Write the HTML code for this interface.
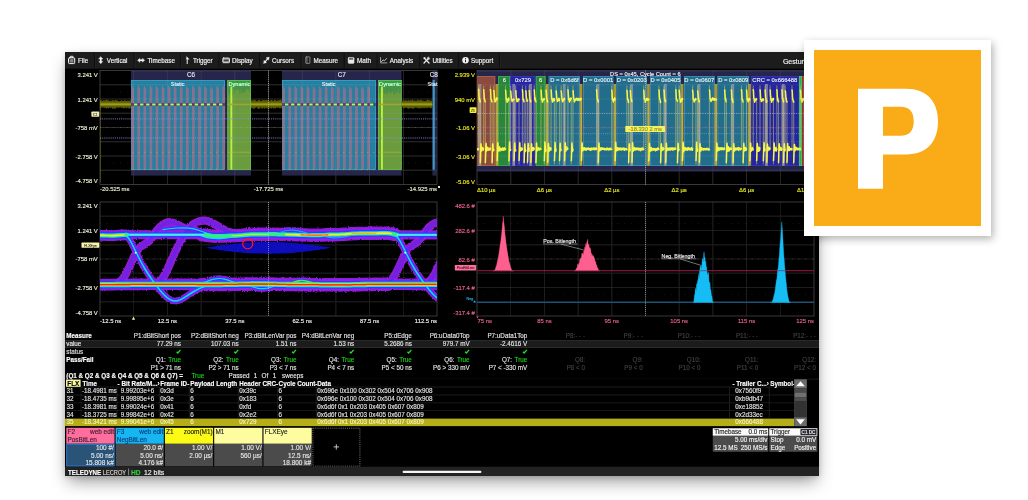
<!DOCTYPE html>
<html><head><meta charset="utf-8"><title>scope</title>
<style>
html,body{margin:0;padding:0;background:#fff;}
body{width:1028px;height:500px;overflow:hidden;position:relative;font-family:"Liberation Sans",sans-serif;}
#scope{position:absolute;left:65px;top:52px;width:754px;height:424px;background:#000;box-shadow:0 8px 16px -3px rgba(0,0,0,.42),0 1px 5px rgba(0,0,0,.15);}
#pb{position:absolute;left:804px;top:40px;width:186.7px;height:196px;background:#fff;box-shadow:2px 3px 8px rgba(0,0,0,.30);}
#po{position:absolute;left:10px;top:10px;width:167px;height:175.5px;background:#faab18;}
svg{position:absolute;left:0;top:0;}
svg text{font-family:"Liberation Sans",sans-serif;}
</style></head><body>
<div id="scope"></div>
<svg width="1028" height="500" viewBox="0 0 1028 500">
<defs><clipPath id="cs"><rect x="65" y="52" width="754" height="424"/></clipPath><clipPath id="g1"><rect x="100" y="70.5" width="337" height="114"/></clipPath><clipPath id="g2"><rect x="477" y="70.5" width="337" height="114"/></clipPath><clipPath id="g3"><rect x="100" y="202" width="337" height="114"/></clipPath><clipPath id="g4"><rect x="477" y="202" width="337" height="114"/></clipPath><filter id="b1" x="-5%" y="-20%" width="110%" height="140%"><feGaussianBlur stdDeviation="0.7"/></filter><filter id="b2" x="-5%" y="-20%" width="110%" height="140%"><feGaussianBlur stdDeviation="0.35"/></filter><filter id="soft" filterUnits="userSpaceOnUse" x="60" y="48" width="764" height="432"><feGaussianBlur stdDeviation="0.32"/></filter><filter id="rough" filterUnits="userSpaceOnUse" x="95" y="198" width="350" height="124"><feTurbulence type="fractalNoise" baseFrequency="0.8" numOctaves="2" seed="4" result="n"/><feDisplacementMap in="SourceGraphic" in2="n" scale="2.6" xChannelSelector="R" yChannelSelector="G"/><feGaussianBlur stdDeviation="0.55"/></filter></defs>
<g clip-path="url(#cs)"><g filter="url(#soft)">
<rect x="65.00" y="52.00" width="754.00" height="16.60" fill="#1b1b1b" />
<text x="78.00" y="62.50" font-size="6.3" fill="#f4f4f4" stroke="#f4f4f4"  text-anchor="start" font-weight="normal" stroke-width="0.17">File</text>
<text x="106.80" y="62.50" font-size="6.3" fill="#f4f4f4" stroke="#f4f4f4"  text-anchor="start" font-weight="normal" stroke-width="0.17">Vertical</text>
<text x="147.50" y="62.50" font-size="6.3" fill="#f4f4f4" stroke="#f4f4f4"  text-anchor="start" font-weight="normal" stroke-width="0.17">Timebase</text>
<text x="193.00" y="62.50" font-size="6.3" fill="#f4f4f4" stroke="#f4f4f4"  text-anchor="start" font-weight="normal" stroke-width="0.17">Trigger</text>
<text x="232.00" y="62.50" font-size="6.3" fill="#f4f4f4" stroke="#f4f4f4"  text-anchor="start" font-weight="normal" stroke-width="0.17">Display</text>
<text x="272.00" y="62.50" font-size="6.3" fill="#f4f4f4" stroke="#f4f4f4"  text-anchor="start" font-weight="normal" stroke-width="0.17">Cursors</text>
<text x="313.60" y="62.50" font-size="6.3" fill="#f4f4f4" stroke="#f4f4f4"  text-anchor="start" font-weight="normal" stroke-width="0.17">Measure</text>
<text x="357.00" y="62.50" font-size="6.3" fill="#f4f4f4" stroke="#f4f4f4"  text-anchor="start" font-weight="normal" stroke-width="0.17">Math</text>
<text x="389.80" y="62.50" font-size="6.3" fill="#f4f4f4" stroke="#f4f4f4"  text-anchor="start" font-weight="normal" stroke-width="0.17">Analysis</text>
<text x="432.40" y="62.50" font-size="6.3" fill="#f4f4f4" stroke="#f4f4f4"  text-anchor="start" font-weight="normal" stroke-width="0.17">Utilities</text>
<text x="471.10" y="62.50" font-size="6.3" fill="#f4f4f4" stroke="#f4f4f4"  text-anchor="start" font-weight="normal" stroke-width="0.17">Support</text>
<line x1="94.60" y1="53.50" x2="94.60" y2="67.50" stroke="#080808" stroke-width="0.9" />
<line x1="95.45" y1="53.50" x2="95.45" y2="67.50" stroke="#2b2b2b" stroke-width="0.6" />
<line x1="134.30" y1="53.50" x2="134.30" y2="67.50" stroke="#080808" stroke-width="0.9" />
<line x1="135.15" y1="53.50" x2="135.15" y2="67.50" stroke="#2b2b2b" stroke-width="0.6" />
<line x1="180.50" y1="53.50" x2="180.50" y2="67.50" stroke="#080808" stroke-width="0.9" />
<line x1="181.35" y1="53.50" x2="181.35" y2="67.50" stroke="#2b2b2b" stroke-width="0.6" />
<line x1="219.10" y1="53.50" x2="219.10" y2="67.50" stroke="#080808" stroke-width="0.9" />
<line x1="219.95" y1="53.50" x2="219.95" y2="67.50" stroke="#2b2b2b" stroke-width="0.6" />
<line x1="260.00" y1="53.50" x2="260.00" y2="67.50" stroke="#080808" stroke-width="0.9" />
<line x1="260.85" y1="53.50" x2="260.85" y2="67.50" stroke="#2b2b2b" stroke-width="0.6" />
<line x1="301.30" y1="53.50" x2="301.30" y2="67.50" stroke="#080808" stroke-width="0.9" />
<line x1="302.15" y1="53.50" x2="302.15" y2="67.50" stroke="#2b2b2b" stroke-width="0.6" />
<line x1="344.40" y1="53.50" x2="344.40" y2="67.50" stroke="#080808" stroke-width="0.9" />
<line x1="345.25" y1="53.50" x2="345.25" y2="67.50" stroke="#2b2b2b" stroke-width="0.6" />
<line x1="377.10" y1="53.50" x2="377.10" y2="67.50" stroke="#080808" stroke-width="0.9" />
<line x1="377.95" y1="53.50" x2="377.95" y2="67.50" stroke="#2b2b2b" stroke-width="0.6" />
<line x1="419.90" y1="53.50" x2="419.90" y2="67.50" stroke="#080808" stroke-width="0.9" />
<line x1="420.75" y1="53.50" x2="420.75" y2="67.50" stroke="#2b2b2b" stroke-width="0.6" />
<line x1="458.90" y1="53.50" x2="458.90" y2="67.50" stroke="#080808" stroke-width="0.9" />
<line x1="459.75" y1="53.50" x2="459.75" y2="67.50" stroke="#2b2b2b" stroke-width="0.6" />
<line x1="499.80" y1="53.50" x2="499.80" y2="67.50" stroke="#080808" stroke-width="0.9" />
<line x1="500.65" y1="53.50" x2="500.65" y2="67.50" stroke="#2b2b2b" stroke-width="0.6" />
<text x="782.90" y="63.50" font-size="7.0" fill="#f4f4f4" stroke="#f4f4f4"  text-anchor="start" font-weight="normal" stroke-width="0.17">Gestures</text>
<path d="M69.5,57.7 h4.2 a1.0,1.0 0 0 1 1.0,1.0 v3.9 a1.0,1.0 0 0 1 -1.0,1.0 h-4.2 a1.0,1.0 0 0 1 -1.0,-1.0 v-3.9 a1.0,1.0 0 0 1 1.0,-1.0z" fill="#4a4a4a" stroke="#f2f2f2" stroke-width="1.0" stroke-linecap="round" stroke-linejoin="round" />
<path d="M70.3,57.3 v-1.0 h2.6 v1.0" fill="none" stroke="#f2f2f2" stroke-width="0.95" stroke-linecap="round" stroke-linejoin="round" />
<rect x="70.20" y="59.30" width="2.80" height="2.90" fill="#8a8a8a" />
<path d="M100.8,56.7 l2.1,2.3 h-1.3 v2.4 h1.3 l-2.1,2.3 l-2.1,-2.3 h1.3 v-2.4 h-1.3z" fill="#f2f2f2" stroke="#f2f2f2" stroke-width="0.3" stroke-linecap="round" stroke-linejoin="round" />
<path d="M137.6,60.2 l2.3,-2.0 v1.3 h2.5 v-1.3 l2.3,2.0 l-2.3,2.0 v-1.3 h-2.5 v1.3z" fill="#f2f2f2" stroke="#f2f2f2" stroke-width="0.3" stroke-linecap="round" stroke-linejoin="round" />
<path d="M187.2,63.6 v-5.6" fill="none" stroke="#f2f2f2" stroke-width="1.0" stroke-linecap="round" stroke-linejoin="round" />
<path d="M186.7,56.7 l2.5,2.6 h-2.5z" fill="#f2f2f2" stroke="#f2f2f2" stroke-width="0.3" stroke-linecap="round" stroke-linejoin="round" />
<path d="M223.5,58.0 h5.3 a0.7,0.7 0 0 1 0.7,0.7 v3.3 a0.7,0.7 0 0 1 -0.7,0.7 h-5.3 a0.7,0.7 0 0 1 -0.7,-0.7 v-3.3 a0.7,0.7 0 0 1 0.7,-0.7z" fill="#8c8c8c" stroke="#f2f2f2" stroke-width="0.85" stroke-linecap="round" stroke-linejoin="round" />
<line x1="224.00" y1="60.40" x2="228.30" y2="60.40" stroke="#222" stroke-width="0.8" />
<path d="M264.6,62.3 L268.0,58.3" fill="none" stroke="#f2f2f2" stroke-width="1.1" stroke-linecap="round" stroke-linejoin="round" />
<path d="M269.2,57.1 l-3.3,0.7 l2.6,2.5z" fill="#f2f2f2" stroke="#f2f2f2" stroke-width="0.2" stroke-linecap="round" stroke-linejoin="round" />
<path d="M263.4,63.5 l3.3,-0.7 l-2.6,-2.5z" fill="#f2f2f2" stroke="#f2f2f2" stroke-width="0.2" stroke-linecap="round" stroke-linejoin="round" />
<path d="M306.3,56.9 h3.1 a0.5,0.5 0 0 1 0.5,0.5 v5.5 a0.5,0.5 0 0 1 -0.5,0.5 h-3.1 a0.5,0.5 0 0 1 -0.5,-0.5 v-5.5 a0.5,0.5 0 0 1 0.5,-0.5z" fill="none" stroke="#a8a8a8" stroke-width="0.75" stroke-linecap="round" stroke-linejoin="round" />
<line x1="306.20" y1="58.30" x2="307.90" y2="58.30" stroke="#a8a8a8" stroke-width="0.5" />
<line x1="306.20" y1="59.60" x2="307.90" y2="59.60" stroke="#a8a8a8" stroke-width="0.5" />
<line x1="306.20" y1="60.90" x2="307.90" y2="60.90" stroke="#a8a8a8" stroke-width="0.5" />
<line x1="306.20" y1="62.20" x2="307.90" y2="62.20" stroke="#a8a8a8" stroke-width="0.5" />
<path d="M349.0,57.4 h4.2 a0.9,0.9 0 0 1 0.9,0.9 v4.2 a0.9,0.9 0 0 1 -0.9,0.9 h-4.2 a0.9,0.9 0 0 1 -0.9,-0.9 v-4.2 a0.9,0.9 0 0 1 0.9,-0.9z" fill="#e8e8e8" stroke="#e8e8e8" stroke-width="0.4" stroke-linecap="round" stroke-linejoin="round" />
<rect x="349.00" y="58.30" width="4.20" height="1.30" fill="#3a3a3a" />
<path d="M380.6,57.6 v5.3 h6.3" fill="none" stroke="#c8c8c8" stroke-width="0.8" stroke-linecap="round" stroke-linejoin="round" />
<path d="M381.6,61.6 l1.5,-1.7 l1.3,0.9 l2.2,-2.3" fill="none" stroke="#e8e8e8" stroke-width="0.8" stroke-linecap="round" stroke-linejoin="round" />
<path d="M424.0,57.9 L429.0,63.0" fill="none" stroke="#f2f2f2" stroke-width="1.25" stroke-linecap="round" stroke-linejoin="round" />
<path d="M429.0,57.9 L424.0,63.0" fill="none" stroke="#f2f2f2" stroke-width="1.25" stroke-linecap="round" stroke-linejoin="round" />
<path d="M423.4,58.3 l1.5,-1.4 l1.0,1.0 l-1.5,1.4z" fill="#f2f2f2" stroke="none" stroke-width="0.8" stroke-linecap="round" stroke-linejoin="round" />
<path d="M428.6,57.0 a1.3,1.3 0 1 0 1.2,1.6" fill="none" stroke="#f2f2f2" stroke-width="0.7" stroke-linecap="round" stroke-linejoin="round" />
<circle cx="465.5" cy="60.3" r="3.25" fill="#f2f2f2"/>
<rect x="465.05" y="59.70" width="0.95" height="2.50" fill="#1b1b1b" />
<rect x="465.05" y="58.10" width="0.95" height="0.95" fill="#1b1b1b" />
<rect x="100.00" y="70.50" width="337.00" height="114.00" fill="#000" />
<line x1="133.70" y1="70.50" x2="133.70" y2="184.50" stroke="#2c2c2c" stroke-width="0.7" />
<line x1="167.40" y1="70.50" x2="167.40" y2="184.50" stroke="#2c2c2c" stroke-width="0.7" />
<line x1="201.10" y1="70.50" x2="201.10" y2="184.50" stroke="#2c2c2c" stroke-width="0.7" />
<line x1="234.80" y1="70.50" x2="234.80" y2="184.50" stroke="#2c2c2c" stroke-width="0.7" />
<line x1="268.50" y1="70.50" x2="268.50" y2="184.50" stroke="#2c2c2c" stroke-width="0.7" />
<line x1="302.20" y1="70.50" x2="302.20" y2="184.50" stroke="#2c2c2c" stroke-width="0.7" />
<line x1="335.90" y1="70.50" x2="335.90" y2="184.50" stroke="#2c2c2c" stroke-width="0.7" />
<line x1="369.60" y1="70.50" x2="369.60" y2="184.50" stroke="#2c2c2c" stroke-width="0.7" />
<line x1="403.30" y1="70.50" x2="403.30" y2="184.50" stroke="#2c2c2c" stroke-width="0.7" />
<line x1="100.00" y1="84.75" x2="437.00" y2="84.75" stroke="#2c2c2c" stroke-width="0.7" />
<line x1="100.00" y1="99.00" x2="437.00" y2="99.00" stroke="#2c2c2c" stroke-width="0.7" />
<line x1="100.00" y1="113.25" x2="437.00" y2="113.25" stroke="#2c2c2c" stroke-width="0.7" />
<line x1="100.00" y1="127.50" x2="437.00" y2="127.50" stroke="#2c2c2c" stroke-width="0.7" />
<line x1="100.00" y1="141.75" x2="437.00" y2="141.75" stroke="#2c2c2c" stroke-width="0.7" />
<line x1="100.00" y1="156.00" x2="437.00" y2="156.00" stroke="#2c2c2c" stroke-width="0.7" />
<line x1="100.00" y1="170.25" x2="437.00" y2="170.25" stroke="#2c2c2c" stroke-width="0.7" />
<rect x="100" y="70.5" width="337" height="114" fill="none" stroke="#484848" stroke-width="0.8"/>
<rect x="477.00" y="70.50" width="337.00" height="114.00" fill="#000" />
<line x1="510.70" y1="70.50" x2="510.70" y2="184.50" stroke="#2c2c2c" stroke-width="0.7" />
<line x1="544.40" y1="70.50" x2="544.40" y2="184.50" stroke="#2c2c2c" stroke-width="0.7" />
<line x1="578.10" y1="70.50" x2="578.10" y2="184.50" stroke="#2c2c2c" stroke-width="0.7" />
<line x1="611.80" y1="70.50" x2="611.80" y2="184.50" stroke="#2c2c2c" stroke-width="0.7" />
<line x1="645.50" y1="70.50" x2="645.50" y2="184.50" stroke="#2c2c2c" stroke-width="0.7" />
<line x1="679.20" y1="70.50" x2="679.20" y2="184.50" stroke="#2c2c2c" stroke-width="0.7" />
<line x1="712.90" y1="70.50" x2="712.90" y2="184.50" stroke="#2c2c2c" stroke-width="0.7" />
<line x1="746.60" y1="70.50" x2="746.60" y2="184.50" stroke="#2c2c2c" stroke-width="0.7" />
<line x1="780.30" y1="70.50" x2="780.30" y2="184.50" stroke="#2c2c2c" stroke-width="0.7" />
<line x1="477.00" y1="84.75" x2="814.00" y2="84.75" stroke="#2c2c2c" stroke-width="0.7" />
<line x1="477.00" y1="99.00" x2="814.00" y2="99.00" stroke="#2c2c2c" stroke-width="0.7" />
<line x1="477.00" y1="113.25" x2="814.00" y2="113.25" stroke="#2c2c2c" stroke-width="0.7" />
<line x1="477.00" y1="127.50" x2="814.00" y2="127.50" stroke="#2c2c2c" stroke-width="0.7" />
<line x1="477.00" y1="141.75" x2="814.00" y2="141.75" stroke="#2c2c2c" stroke-width="0.7" />
<line x1="477.00" y1="156.00" x2="814.00" y2="156.00" stroke="#2c2c2c" stroke-width="0.7" />
<line x1="477.00" y1="170.25" x2="814.00" y2="170.25" stroke="#2c2c2c" stroke-width="0.7" />
<rect x="477" y="70.5" width="337" height="114" fill="none" stroke="#484848" stroke-width="0.8"/>
<rect x="100.00" y="202.00" width="337.00" height="114.00" fill="#000" />
<line x1="133.70" y1="202.00" x2="133.70" y2="316.00" stroke="#2c2c2c" stroke-width="0.7" />
<line x1="167.40" y1="202.00" x2="167.40" y2="316.00" stroke="#2c2c2c" stroke-width="0.7" />
<line x1="201.10" y1="202.00" x2="201.10" y2="316.00" stroke="#2c2c2c" stroke-width="0.7" />
<line x1="234.80" y1="202.00" x2="234.80" y2="316.00" stroke="#2c2c2c" stroke-width="0.7" />
<line x1="268.50" y1="202.00" x2="268.50" y2="316.00" stroke="#2c2c2c" stroke-width="0.7" />
<line x1="302.20" y1="202.00" x2="302.20" y2="316.00" stroke="#2c2c2c" stroke-width="0.7" />
<line x1="335.90" y1="202.00" x2="335.90" y2="316.00" stroke="#2c2c2c" stroke-width="0.7" />
<line x1="369.60" y1="202.00" x2="369.60" y2="316.00" stroke="#2c2c2c" stroke-width="0.7" />
<line x1="403.30" y1="202.00" x2="403.30" y2="316.00" stroke="#2c2c2c" stroke-width="0.7" />
<line x1="100.00" y1="216.25" x2="437.00" y2="216.25" stroke="#2c2c2c" stroke-width="0.7" />
<line x1="100.00" y1="230.50" x2="437.00" y2="230.50" stroke="#2c2c2c" stroke-width="0.7" />
<line x1="100.00" y1="244.75" x2="437.00" y2="244.75" stroke="#2c2c2c" stroke-width="0.7" />
<line x1="100.00" y1="259.00" x2="437.00" y2="259.00" stroke="#2c2c2c" stroke-width="0.7" />
<line x1="100.00" y1="273.25" x2="437.00" y2="273.25" stroke="#2c2c2c" stroke-width="0.7" />
<line x1="100.00" y1="287.50" x2="437.00" y2="287.50" stroke="#2c2c2c" stroke-width="0.7" />
<line x1="100.00" y1="301.75" x2="437.00" y2="301.75" stroke="#2c2c2c" stroke-width="0.7" />
<rect x="100" y="202" width="337" height="114" fill="none" stroke="#484848" stroke-width="0.8"/>
<rect x="477.00" y="202.00" width="337.00" height="114.00" fill="#000" />
<line x1="510.70" y1="202.00" x2="510.70" y2="316.00" stroke="#2c2c2c" stroke-width="0.7" />
<line x1="544.40" y1="202.00" x2="544.40" y2="316.00" stroke="#2c2c2c" stroke-width="0.7" />
<line x1="578.10" y1="202.00" x2="578.10" y2="316.00" stroke="#2c2c2c" stroke-width="0.7" />
<line x1="611.80" y1="202.00" x2="611.80" y2="316.00" stroke="#2c2c2c" stroke-width="0.7" />
<line x1="645.50" y1="202.00" x2="645.50" y2="316.00" stroke="#2c2c2c" stroke-width="0.7" />
<line x1="679.20" y1="202.00" x2="679.20" y2="316.00" stroke="#2c2c2c" stroke-width="0.7" />
<line x1="712.90" y1="202.00" x2="712.90" y2="316.00" stroke="#2c2c2c" stroke-width="0.7" />
<line x1="746.60" y1="202.00" x2="746.60" y2="316.00" stroke="#2c2c2c" stroke-width="0.7" />
<line x1="780.30" y1="202.00" x2="780.30" y2="316.00" stroke="#2c2c2c" stroke-width="0.7" />
<line x1="477.00" y1="216.25" x2="814.00" y2="216.25" stroke="#2c2c2c" stroke-width="0.7" />
<line x1="477.00" y1="230.50" x2="814.00" y2="230.50" stroke="#2c2c2c" stroke-width="0.7" />
<line x1="477.00" y1="244.75" x2="814.00" y2="244.75" stroke="#2c2c2c" stroke-width="0.7" />
<line x1="477.00" y1="259.00" x2="814.00" y2="259.00" stroke="#2c2c2c" stroke-width="0.7" />
<line x1="477.00" y1="273.25" x2="814.00" y2="273.25" stroke="#2c2c2c" stroke-width="0.7" />
<line x1="477.00" y1="287.50" x2="814.00" y2="287.50" stroke="#2c2c2c" stroke-width="0.7" />
<line x1="477.00" y1="301.75" x2="814.00" y2="301.75" stroke="#2c2c2c" stroke-width="0.7" />
<rect x="477" y="202" width="337" height="114" fill="none" stroke="#484848" stroke-width="0.8"/>
<g clip-path="url(#g1)">
<rect x="131.00" y="70.50" width="120.00" height="105.00" fill="#27274c" />
<line x1="131.00" y1="71.00" x2="251.00" y2="71.00" stroke="#3a3a6e" stroke-width="0.8" />
<rect x="131.00" y="80.00" width="94.00" height="89.70" fill="#267f9f" />
<rect x="131.40" y="80.4" width="93.20" height="89" fill="none" stroke="#35a3c9" stroke-width="0.8"/>
<rect x="131.30" y="87.79" width="2.75" height="81.21" fill="#8e708e" opacity="0.95"/>
<path d="M131.30,87.79 L132.20,85.49 L133.10,87.79Z" fill="#6f84a0"/>
<rect x="137.37" y="87.53" width="2.75" height="81.47" fill="#8e708e" opacity="0.95"/>
<path d="M137.37,87.53 L138.27,85.23 L139.17,87.53Z" fill="#6f84a0"/>
<rect x="143.44" y="88.28" width="2.75" height="80.72" fill="#8e708e" opacity="0.95"/>
<path d="M143.44,88.28 L144.34,85.98 L145.24,88.28Z" fill="#6f84a0"/>
<rect x="149.51" y="87.41" width="2.75" height="81.59" fill="#8e708e" opacity="0.95"/>
<path d="M149.51,87.41 L150.41,85.11 L151.31,87.41Z" fill="#6f84a0"/>
<rect x="155.58" y="88.10" width="2.75" height="80.90" fill="#8e708e" opacity="0.95"/>
<path d="M155.58,88.10 L156.48,85.80 L157.38,88.10Z" fill="#6f84a0"/>
<rect x="161.65" y="87.85" width="2.75" height="81.15" fill="#8e708e" opacity="0.95"/>
<path d="M161.65,87.85 L162.55,85.55 L163.45,87.85Z" fill="#6f84a0"/>
<rect x="167.72" y="87.39" width="2.75" height="81.61" fill="#8e708e" opacity="0.95"/>
<path d="M167.72,87.39 L168.62,85.09 L169.52,87.39Z" fill="#6f84a0"/>
<rect x="173.79" y="88.06" width="2.75" height="80.94" fill="#8e708e" opacity="0.95"/>
<path d="M173.79,88.06 L174.69,85.76 L175.59,88.06Z" fill="#6f84a0"/>
<rect x="179.86" y="87.36" width="2.75" height="81.64" fill="#8e708e" opacity="0.95"/>
<path d="M179.86,87.36 L180.76,85.06 L181.66,87.36Z" fill="#6f84a0"/>
<rect x="185.93" y="87.95" width="2.75" height="81.05" fill="#8e708e" opacity="0.95"/>
<path d="M185.93,87.95 L186.83,85.65 L187.73,87.95Z" fill="#6f84a0"/>
<rect x="192.00" y="87.40" width="2.75" height="81.60" fill="#8e708e" opacity="0.95"/>
<path d="M192.00,87.40 L192.90,85.10 L193.80,87.40Z" fill="#6f84a0"/>
<rect x="198.07" y="87.44" width="2.75" height="81.56" fill="#8e708e" opacity="0.95"/>
<path d="M198.07,87.44 L198.97,85.14 L199.87,87.44Z" fill="#6f84a0"/>
<rect x="204.14" y="87.94" width="2.75" height="81.06" fill="#8e708e" opacity="0.95"/>
<path d="M204.14,87.94 L205.04,85.64 L205.94,87.94Z" fill="#6f84a0"/>
<rect x="210.21" y="88.54" width="2.75" height="80.46" fill="#8e708e" opacity="0.95"/>
<path d="M210.21,88.54 L211.11,86.24 L212.01,88.54Z" fill="#6f84a0"/>
<rect x="216.28" y="87.49" width="2.75" height="81.51" fill="#8e708e" opacity="0.95"/>
<path d="M216.28,87.49 L217.18,85.19 L218.08,87.49Z" fill="#6f84a0"/>
<rect x="222.35" y="87.63" width="2.75" height="81.37" fill="#8e708e" opacity="0.95"/>
<path d="M222.35,87.63 L223.25,85.33 L224.15,87.63Z" fill="#6f84a0"/>
<rect x="227.40" y="80.00" width="23.60" height="89.70" fill="#6a9b3e" />
<rect x="227.40" y="80.00" width="23.60" height="7.20" fill="#2f9f46" />
<rect x="227.40" y="87.20" width="1.10" height="5.58" fill="#3d8f4c" opacity="0.8"/>
<rect x="228.50" y="87.20" width="1.10" height="7.66" fill="#3d8f4c" opacity="0.8"/>
<rect x="229.60" y="87.20" width="1.10" height="5.25" fill="#3d8f4c" opacity="0.8"/>
<rect x="230.70" y="87.20" width="1.10" height="4.08" fill="#3d8f4c" opacity="0.8"/>
<rect x="231.80" y="87.20" width="1.10" height="7.85" fill="#3d8f4c" opacity="0.8"/>
<rect x="232.90" y="87.20" width="1.10" height="1.80" fill="#3d8f4c" opacity="0.8"/>
<rect x="234.00" y="87.20" width="1.10" height="7.08" fill="#3d8f4c" opacity="0.8"/>
<rect x="235.10" y="87.20" width="1.10" height="3.38" fill="#3d8f4c" opacity="0.8"/>
<rect x="236.20" y="87.20" width="1.10" height="2.44" fill="#3d8f4c" opacity="0.8"/>
<rect x="237.30" y="87.20" width="1.10" height="2.27" fill="#3d8f4c" opacity="0.8"/>
<rect x="238.40" y="87.20" width="1.10" height="3.51" fill="#3d8f4c" opacity="0.8"/>
<rect x="239.50" y="87.20" width="1.10" height="6.80" fill="#3d8f4c" opacity="0.8"/>
<rect x="240.60" y="87.20" width="1.10" height="2.67" fill="#3d8f4c" opacity="0.8"/>
<rect x="241.70" y="87.20" width="1.10" height="5.28" fill="#3d8f4c" opacity="0.8"/>
<rect x="242.80" y="87.20" width="1.10" height="5.65" fill="#3d8f4c" opacity="0.8"/>
<rect x="243.90" y="87.20" width="1.10" height="3.92" fill="#3d8f4c" opacity="0.8"/>
<rect x="245.00" y="87.20" width="1.10" height="5.06" fill="#3d8f4c" opacity="0.8"/>
<rect x="246.10" y="87.20" width="1.10" height="1.91" fill="#3d8f4c" opacity="0.8"/>
<rect x="247.20" y="87.20" width="1.10" height="1.89" fill="#3d8f4c" opacity="0.8"/>
<rect x="248.30" y="87.20" width="1.10" height="2.84" fill="#3d8f4c" opacity="0.8"/>
<rect x="249.40" y="87.20" width="1.10" height="5.92" fill="#3d8f4c" opacity="0.8"/>
<rect x="227.80" y="80.4" width="22.80" height="89" fill="none" stroke="#63c24f" stroke-width="0.8"/>
<rect x="230.40" y="86.50" width="1.90" height="83.00" fill="#b4f23c" />
<rect x="282.00" y="70.50" width="119.60" height="105.00" fill="#27274c" />
<line x1="282.00" y1="71.00" x2="401.60" y2="71.00" stroke="#3a3a6e" stroke-width="0.8" />
<rect x="282.00" y="80.00" width="93.80" height="89.70" fill="#267f9f" />
<rect x="282.40" y="80.4" width="93.00" height="89" fill="none" stroke="#35a3c9" stroke-width="0.8"/>
<rect x="282.30" y="87.94" width="2.75" height="81.06" fill="#8e708e" opacity="0.95"/>
<path d="M282.30,87.94 L283.20,85.64 L284.10,87.94Z" fill="#6f84a0"/>
<rect x="288.37" y="87.77" width="2.75" height="81.23" fill="#8e708e" opacity="0.95"/>
<path d="M288.37,87.77 L289.27,85.47 L290.17,87.77Z" fill="#6f84a0"/>
<rect x="294.44" y="88.18" width="2.75" height="80.82" fill="#8e708e" opacity="0.95"/>
<path d="M294.44,88.18 L295.34,85.88 L296.24,88.18Z" fill="#6f84a0"/>
<rect x="300.51" y="87.98" width="2.75" height="81.02" fill="#8e708e" opacity="0.95"/>
<path d="M300.51,87.98 L301.41,85.68 L302.31,87.98Z" fill="#6f84a0"/>
<rect x="306.58" y="87.75" width="2.75" height="81.25" fill="#8e708e" opacity="0.95"/>
<path d="M306.58,87.75 L307.48,85.45 L308.38,87.75Z" fill="#6f84a0"/>
<rect x="312.65" y="88.49" width="2.75" height="80.51" fill="#8e708e" opacity="0.95"/>
<path d="M312.65,88.49 L313.55,86.19 L314.45,88.49Z" fill="#6f84a0"/>
<rect x="318.72" y="88.35" width="2.75" height="80.65" fill="#8e708e" opacity="0.95"/>
<path d="M318.72,88.35 L319.62,86.05 L320.52,88.35Z" fill="#6f84a0"/>
<rect x="324.79" y="87.67" width="2.75" height="81.33" fill="#8e708e" opacity="0.95"/>
<path d="M324.79,87.67 L325.69,85.37 L326.59,87.67Z" fill="#6f84a0"/>
<rect x="330.86" y="88.16" width="2.75" height="80.84" fill="#8e708e" opacity="0.95"/>
<path d="M330.86,88.16 L331.76,85.86 L332.66,88.16Z" fill="#6f84a0"/>
<rect x="336.93" y="88.09" width="2.75" height="80.91" fill="#8e708e" opacity="0.95"/>
<path d="M336.93,88.09 L337.83,85.79 L338.73,88.09Z" fill="#6f84a0"/>
<rect x="343.00" y="88.61" width="2.75" height="80.39" fill="#8e708e" opacity="0.95"/>
<path d="M343.00,88.61 L343.90,86.31 L344.80,88.61Z" fill="#6f84a0"/>
<rect x="349.07" y="88.39" width="2.75" height="80.61" fill="#8e708e" opacity="0.95"/>
<path d="M349.07,88.39 L349.97,86.09 L350.87,88.39Z" fill="#6f84a0"/>
<rect x="355.14" y="87.73" width="2.75" height="81.27" fill="#8e708e" opacity="0.95"/>
<path d="M355.14,87.73 L356.04,85.43 L356.94,87.73Z" fill="#6f84a0"/>
<rect x="361.21" y="88.77" width="2.75" height="80.23" fill="#8e708e" opacity="0.95"/>
<path d="M361.21,88.77 L362.11,86.47 L363.01,88.77Z" fill="#6f84a0"/>
<rect x="367.28" y="87.48" width="2.75" height="81.52" fill="#8e708e" opacity="0.95"/>
<path d="M367.28,87.48 L368.18,85.18 L369.08,87.48Z" fill="#6f84a0"/>
<rect x="378.00" y="80.00" width="23.60" height="89.70" fill="#6a9b3e" />
<rect x="378.00" y="80.00" width="23.60" height="7.20" fill="#2f9f46" />
<rect x="378.00" y="87.20" width="1.10" height="4.22" fill="#3d8f4c" opacity="0.8"/>
<rect x="379.10" y="87.20" width="1.10" height="6.42" fill="#3d8f4c" opacity="0.8"/>
<rect x="380.20" y="87.20" width="1.10" height="2.49" fill="#3d8f4c" opacity="0.8"/>
<rect x="381.30" y="87.20" width="1.10" height="4.68" fill="#3d8f4c" opacity="0.8"/>
<rect x="382.40" y="87.20" width="1.10" height="1.75" fill="#3d8f4c" opacity="0.8"/>
<rect x="383.50" y="87.20" width="1.10" height="5.84" fill="#3d8f4c" opacity="0.8"/>
<rect x="384.60" y="87.20" width="1.10" height="6.47" fill="#3d8f4c" opacity="0.8"/>
<rect x="385.70" y="87.20" width="1.10" height="5.22" fill="#3d8f4c" opacity="0.8"/>
<rect x="386.80" y="87.20" width="1.10" height="7.19" fill="#3d8f4c" opacity="0.8"/>
<rect x="387.90" y="87.20" width="1.10" height="3.54" fill="#3d8f4c" opacity="0.8"/>
<rect x="389.00" y="87.20" width="1.10" height="6.02" fill="#3d8f4c" opacity="0.8"/>
<rect x="390.10" y="87.20" width="1.10" height="5.36" fill="#3d8f4c" opacity="0.8"/>
<rect x="391.20" y="87.20" width="1.10" height="5.27" fill="#3d8f4c" opacity="0.8"/>
<rect x="392.30" y="87.20" width="1.10" height="4.47" fill="#3d8f4c" opacity="0.8"/>
<rect x="393.40" y="87.20" width="1.10" height="6.96" fill="#3d8f4c" opacity="0.8"/>
<rect x="394.50" y="87.20" width="1.10" height="7.64" fill="#3d8f4c" opacity="0.8"/>
<rect x="395.60" y="87.20" width="1.10" height="4.58" fill="#3d8f4c" opacity="0.8"/>
<rect x="396.70" y="87.20" width="1.10" height="5.82" fill="#3d8f4c" opacity="0.8"/>
<rect x="397.80" y="87.20" width="1.10" height="1.89" fill="#3d8f4c" opacity="0.8"/>
<rect x="398.90" y="87.20" width="1.10" height="6.06" fill="#3d8f4c" opacity="0.8"/>
<rect x="400.00" y="87.20" width="1.10" height="5.71" fill="#3d8f4c" opacity="0.8"/>
<rect x="378.40" y="80.4" width="22.80" height="89" fill="none" stroke="#63c24f" stroke-width="0.8"/>
<rect x="381.00" y="86.50" width="1.90" height="83.00" fill="#b4f23c" />
<rect x="432.40" y="70.50" width="5.00" height="105.00" fill="#27274c" />
<rect x="432.60" y="80.00" width="2.20" height="89.70" fill="#3f97c0" />
<line x1="133.70" y1="70.50" x2="133.70" y2="184.50" stroke="#ffffff" stroke-width="0.6" opacity="0.10"/>
<line x1="167.40" y1="70.50" x2="167.40" y2="184.50" stroke="#ffffff" stroke-width="0.6" opacity="0.10"/>
<line x1="201.10" y1="70.50" x2="201.10" y2="184.50" stroke="#ffffff" stroke-width="0.6" opacity="0.10"/>
<line x1="234.80" y1="70.50" x2="234.80" y2="184.50" stroke="#ffffff" stroke-width="0.6" opacity="0.10"/>
<line x1="268.50" y1="70.50" x2="268.50" y2="184.50" stroke="#ffffff" stroke-width="0.6" opacity="0.10"/>
<line x1="302.20" y1="70.50" x2="302.20" y2="184.50" stroke="#ffffff" stroke-width="0.6" opacity="0.10"/>
<line x1="335.90" y1="70.50" x2="335.90" y2="184.50" stroke="#ffffff" stroke-width="0.6" opacity="0.10"/>
<line x1="369.60" y1="70.50" x2="369.60" y2="184.50" stroke="#ffffff" stroke-width="0.6" opacity="0.10"/>
<line x1="403.30" y1="70.50" x2="403.30" y2="184.50" stroke="#ffffff" stroke-width="0.6" opacity="0.10"/>
<line x1="100.00" y1="84.75" x2="437.00" y2="84.75" stroke="#ffffff" stroke-width="0.6" opacity="0.10"/>
<line x1="100.00" y1="99.00" x2="437.00" y2="99.00" stroke="#ffffff" stroke-width="0.6" opacity="0.10"/>
<line x1="100.00" y1="113.25" x2="437.00" y2="113.25" stroke="#ffffff" stroke-width="0.6" opacity="0.10"/>
<line x1="100.00" y1="127.50" x2="437.00" y2="127.50" stroke="#ffffff" stroke-width="0.6" opacity="0.10"/>
<line x1="100.00" y1="141.75" x2="437.00" y2="141.75" stroke="#ffffff" stroke-width="0.6" opacity="0.10"/>
<line x1="100.00" y1="156.00" x2="437.00" y2="156.00" stroke="#ffffff" stroke-width="0.6" opacity="0.10"/>
<line x1="100.00" y1="170.25" x2="437.00" y2="170.25" stroke="#ffffff" stroke-width="0.6" opacity="0.10"/>
<path d="M100.0,99.6 L100.7,100.8 L101.4,100.2 L102.1,100.5 L102.8,101.1 L103.5,100.0 L104.2,100.9 L104.9,99.8 L105.6,100.5 L106.3,99.8 L107.0,99.8 L107.7,100.6 L108.4,99.8 L109.1,101.0 L109.8,100.9 L110.5,100.5 L111.2,100.9 L111.9,100.6 L112.6,100.3 L113.3,100.1 L114.0,100.3 L114.7,101.2 L115.4,100.0 L116.1,99.9 L116.8,100.6 L117.5,100.2 L118.2,101.2 L118.9,101.0 L119.6,101.2 L120.3,101.0 L121.0,100.7 L121.7,99.8 L122.4,101.0 L123.1,100.7 L123.8,101.1 L124.5,99.6 L125.2,100.5 L125.9,101.1 L126.6,100.8 L127.3,101.0 L128.0,99.7 L128.7,101.1 L129.4,101.3 L130.1,99.6 L130.8,100.1 L130.8,107.7 L130.1,108.8 L129.4,108.2 L128.7,108.2 L128.0,108.2 L127.3,107.3 L126.6,108.7 L125.9,107.9 L125.2,107.4 L124.5,108.1 L123.8,108.7 L123.1,107.9 L122.4,107.7 L121.7,108.3 L121.0,107.3 L120.3,107.5 L119.6,107.3 L118.9,107.9 L118.2,107.7 L117.5,107.4 L116.8,107.5 L116.1,108.0 L115.4,108.8 L114.7,108.8 L114.0,108.4 L113.3,108.2 L112.6,108.9 L111.9,107.9 L111.2,107.3 L110.5,108.3 L109.8,107.7 L109.1,107.6 L108.4,108.9 L107.7,107.9 L107.0,107.8 L106.3,108.7 L105.6,108.2 L104.9,107.4 L104.2,108.0 L103.5,107.5 L102.8,107.4 L102.1,107.6 L101.4,107.3 L100.7,108.0 L100.0,108.7Z" fill="#5a5a08"/>
<line x1="100.00" y1="104.30" x2="131.00" y2="104.30" stroke="#86860e" stroke-width="3.0" />
<line x1="100.00" y1="104.30" x2="131.00" y2="104.30" stroke="#a6a616" stroke-width="0.9" />
<path d="M251.0,100.7 L251.7,100.0 L252.4,100.0 L253.1,100.9 L253.8,99.6 L254.5,99.9 L255.2,100.0 L255.9,100.4 L256.6,101.3 L257.3,100.8 L258.0,100.1 L258.7,100.5 L259.4,99.6 L260.1,100.7 L260.8,100.9 L261.5,101.0 L262.2,99.8 L262.9,100.5 L263.6,99.9 L264.3,100.2 L265.0,100.0 L265.7,100.5 L266.4,100.0 L267.1,99.9 L267.8,100.6 L268.5,99.7 L269.2,101.0 L269.9,101.0 L270.6,99.9 L271.3,99.9 L272.0,100.2 L272.7,100.4 L273.4,101.3 L274.1,100.2 L274.8,99.7 L275.5,99.8 L276.2,100.9 L276.9,100.8 L277.6,100.3 L278.3,100.6 L279.0,99.8 L279.7,100.5 L280.4,99.8 L281.1,99.7 L281.8,100.4 L281.8,108.2 L281.1,108.2 L280.4,108.0 L279.7,108.3 L279.0,107.9 L278.3,107.5 L277.6,107.7 L276.9,107.7 L276.2,107.7 L275.5,108.7 L274.8,108.0 L274.1,108.2 L273.4,109.0 L272.7,107.5 L272.0,107.9 L271.3,109.0 L270.6,107.5 L269.9,108.8 L269.2,107.5 L268.5,108.5 L267.8,108.0 L267.1,109.0 L266.4,107.9 L265.7,107.6 L265.0,108.6 L264.3,108.8 L263.6,107.4 L262.9,108.4 L262.2,108.7 L261.5,108.4 L260.8,107.6 L260.1,107.7 L259.4,108.9 L258.7,108.9 L258.0,108.9 L257.3,107.7 L256.6,107.3 L255.9,107.9 L255.2,107.7 L254.5,108.7 L253.8,108.7 L253.1,108.7 L252.4,107.9 L251.7,108.2 L251.0,107.6Z" fill="#5a5a08"/>
<line x1="251.00" y1="104.30" x2="282.00" y2="104.30" stroke="#86860e" stroke-width="3.0" />
<line x1="251.00" y1="104.30" x2="282.00" y2="104.30" stroke="#a6a616" stroke-width="0.9" />
<path d="M401.6,101.3 L402.3,101.0 L403.0,99.9 L403.7,100.5 L404.4,100.4 L405.1,100.4 L405.8,100.0 L406.5,100.3 L407.2,100.8 L407.9,100.4 L408.6,100.0 L409.3,100.5 L410.0,100.4 L410.7,100.1 L411.4,100.4 L412.1,99.7 L412.8,99.8 L413.5,100.9 L414.2,99.7 L414.9,101.1 L415.6,100.5 L416.3,100.9 L417.0,100.2 L417.7,99.8 L418.4,100.1 L419.1,101.1 L419.8,99.7 L420.5,99.7 L421.2,100.5 L421.9,99.9 L422.6,100.6 L423.3,100.7 L424.0,100.8 L424.7,101.3 L425.4,100.6 L426.1,100.7 L426.8,100.4 L427.5,99.6 L428.2,99.6 L428.9,100.8 L429.6,100.0 L430.3,101.1 L431.0,99.8 L431.7,100.9 L432.4,99.7 L432.4,108.3 L431.7,107.6 L431.0,108.7 L430.3,108.0 L429.6,107.8 L428.9,107.4 L428.2,107.5 L427.5,108.6 L426.8,107.4 L426.1,108.4 L425.4,107.3 L424.7,108.2 L424.0,108.5 L423.3,107.6 L422.6,108.2 L421.9,107.6 L421.2,109.0 L420.5,108.0 L419.8,107.7 L419.1,108.8 L418.4,108.4 L417.7,107.6 L417.0,108.6 L416.3,107.4 L415.6,107.4 L414.9,107.5 L414.2,108.7 L413.5,108.3 L412.8,108.9 L412.1,108.5 L411.4,108.1 L410.7,108.1 L410.0,108.2 L409.3,108.3 L408.6,108.9 L407.9,108.3 L407.2,108.6 L406.5,107.7 L405.8,107.5 L405.1,108.2 L404.4,107.9 L403.7,108.5 L403.0,107.6 L402.3,107.3 L401.6,108.0Z" fill="#5a5a08"/>
<line x1="401.60" y1="104.30" x2="432.40" y2="104.30" stroke="#86860e" stroke-width="3.0" />
<line x1="401.60" y1="104.30" x2="432.40" y2="104.30" stroke="#a6a616" stroke-width="0.9" />
<line x1="227.40" y1="104.40" x2="251.00" y2="104.40" stroke="#a9a430" stroke-width="1.6" opacity="0.9"/>
<line x1="378.00" y1="104.40" x2="401.60" y2="104.40" stroke="#a9a430" stroke-width="1.6" opacity="0.9"/>
<line x1="131.00" y1="104.50" x2="225.00" y2="104.50" stroke="#33204c" stroke-width="3.0" opacity="0.55"/>
<line x1="134.00" y1="104.50" x2="224.00" y2="104.50" stroke="#c2f262" stroke-width="1.9" stroke-dasharray="3.35 2.72"/>
<line x1="132.20" y1="152.30" x2="224.00" y2="152.30" stroke="#a9a85a" stroke-width="1.2" stroke-dasharray="1.5 4.48" opacity="0.55"/>
<line x1="132.20" y1="169.60" x2="224.00" y2="169.60" stroke="#b8c24a" stroke-width="0.9" stroke-dasharray="1.2 4.78" opacity="0.7"/>
<line x1="282.00" y1="104.50" x2="375.80" y2="104.50" stroke="#33204c" stroke-width="3.0" opacity="0.55"/>
<line x1="285.00" y1="104.50" x2="374.80" y2="104.50" stroke="#c2f262" stroke-width="1.9" stroke-dasharray="3.35 2.72"/>
<line x1="283.20" y1="152.30" x2="374.80" y2="152.30" stroke="#a9a85a" stroke-width="1.2" stroke-dasharray="1.5 4.48" opacity="0.55"/>
<line x1="283.20" y1="169.60" x2="374.80" y2="169.60" stroke="#b8c24a" stroke-width="0.9" stroke-dasharray="1.2 4.78" opacity="0.7"/>
<line x1="227.40" y1="152.30" x2="251.00" y2="152.30" stroke="#c9b83a" stroke-width="1.2" opacity="0.45"/>
<line x1="378.00" y1="152.30" x2="401.60" y2="152.30" stroke="#c9b83a" stroke-width="1.2" opacity="0.45"/>
<line x1="100.00" y1="118.90" x2="437.00" y2="118.90" stroke="#8e8ce4" stroke-width="0.95" stroke-dasharray="0.9 1.0"/>
<line x1="100.00" y1="138.00" x2="437.00" y2="138.00" stroke="#8e8ce4" stroke-width="0.95" stroke-dasharray="0.9 1.0"/>
</g>
<line x1="268.50" y1="70.50" x2="268.50" y2="184.50" stroke="#d8d8d8" stroke-width="0.8" stroke-dasharray="0.8 1.3" opacity="0.9"/>
<line x1="100.00" y1="127.50" x2="437.00" y2="127.50" stroke="#b0b0b0" stroke-width="0.7" stroke-dasharray="0.7 6" opacity="0.55"/>
<line x1="100.00" y1="91.85" x2="437.00" y2="91.85" stroke="#999" stroke-width="0.6" stroke-dasharray="0.7 6" opacity="0.35"/>
<line x1="100.00" y1="163.10" x2="437.00" y2="163.10" stroke="#999" stroke-width="0.6" stroke-dasharray="0.7 6" opacity="0.35"/>
<line x1="100.60" y1="100.00" x2="100.60" y2="182.00" stroke="#8a8a10" stroke-width="0.9" opacity="0.45"/>
<text x="191.00" y="77.20" font-size="6.4" fill="#e8e8f4" stroke="#e8e8f4" stroke-width="0.13" text-anchor="middle" font-weight="normal" >C6</text>
<text x="341.80" y="77.20" font-size="6.4" fill="#e8e8f4" stroke="#e8e8f4" stroke-width="0.13" text-anchor="middle" font-weight="normal" >C7</text>
<text x="177.60" y="85.60" font-size="5.45" fill="#e6f4fa" stroke="#e6f4fa" stroke-width="0.13" text-anchor="middle" font-weight="normal" >Static</text>
<text x="328.60" y="85.60" font-size="5.45" fill="#e6f4fa" stroke="#e6f4fa" stroke-width="0.13" text-anchor="middle" font-weight="normal" >Static</text>
<text x="239.40" y="85.90" font-size="5.6" fill="#eafbe0" stroke="#eafbe0" stroke-width="0.13" text-anchor="middle" font-weight="normal" >Dynamic</text>
<text x="390.00" y="85.90" font-size="5.6" fill="#eafbe0" stroke="#eafbe0" stroke-width="0.13" text-anchor="middle" font-weight="normal" >Dynamic</text>
<text x="437.80" y="77.20" font-size="6.4" fill="#e8e8f4" stroke="#e8e8f4" stroke-width="0.13" text-anchor="end" font-weight="normal" >C8</text>
<text x="437.50" y="85.90" font-size="5.6" fill="#e6f4fa" stroke="#e6f4fa" stroke-width="0.13" text-anchor="end" font-weight="normal" >Stat</text>
<text x="97.80" y="76.60" font-size="5.9" fill="#f0efd2" stroke="#f0efd2" stroke-width="0.13" text-anchor="end" font-weight="normal" >3.241 V</text>
<text x="97.80" y="101.60" font-size="5.9" fill="#f0efd2" stroke="#f0efd2" stroke-width="0.13" text-anchor="end" font-weight="normal" >1.241 V</text>
<text x="97.80" y="130.20" font-size="5.9" fill="#f0efd2" stroke="#f0efd2" stroke-width="0.13" text-anchor="end" font-weight="normal" >-758 mV</text>
<text x="97.80" y="159.00" font-size="5.9" fill="#f0efd2" stroke="#f0efd2" stroke-width="0.13" text-anchor="end" font-weight="normal" >-2.758 V</text>
<text x="97.80" y="183.40" font-size="5.9" fill="#f0efd2" stroke="#f0efd2" stroke-width="0.13" text-anchor="end" font-weight="normal" >-4.758 V</text>
<text x="100.00" y="191.30" font-size="5.9" fill="#f0efd2" stroke="#f0efd2" stroke-width="0.13" text-anchor="start" font-weight="normal" >-20.525 ms</text>
<text x="268.50" y="191.30" font-size="5.9" fill="#f0efd2" stroke="#f0efd2" stroke-width="0.13" text-anchor="middle" font-weight="normal" >-17.725 ms</text>
<text x="437.00" y="191.30" font-size="5.9" fill="#f0efd2" stroke="#f0efd2" stroke-width="0.13" text-anchor="end" font-weight="normal" >-14.925 ms</text>
<rect x="438.00" y="186.00" width="2.00" height="2.00" fill="#eeeea2" />
<rect x="91.40" y="111.40" width="7.80" height="5.30" fill="#f1edb0" rx="0.8"/>
<text x="95.30" y="115.70" font-size="3.6" fill="#444" stroke="#444" stroke-width="0.13" text-anchor="middle" font-weight="normal" >C1</text>
<g clip-path="url(#g2)">
<rect x="477.00" y="70.50" width="337.00" height="101.00" fill="#27274c" />
<line x1="477.00" y1="71.00" x2="814.00" y2="71.00" stroke="#3a3a6e" stroke-width="0.8" />
<rect x="470.00" y="76.00" width="25.20" height="90.00" fill="#8c4a3e" />
<rect x="470.40" y="76.4" width="24.40" height="89.2" fill="none" stroke="#b8604e" stroke-width="0.8"/>
<rect x="498.00" y="76.00" width="12.10" height="90.00" fill="#2a863c" />
<rect x="498.40" y="76.4" width="11.30" height="89.2" fill="none" stroke="#39ac50" stroke-width="0.8"/>
<rect x="510.10" y="76.00" width="25.10" height="90.00" fill="#2626a2" />
<rect x="510.50" y="76.4" width="24.30" height="89.2" fill="none" stroke="#3434c4" stroke-width="0.8"/>
<rect x="535.80" y="76.00" width="9.80" height="90.00" fill="#2a863c" />
<rect x="536.20" y="76.4" width="9.00" height="89.2" fill="none" stroke="#39ac50" stroke-width="0.8"/>
<rect x="548.70" y="76.00" width="31.30" height="90.00" fill="#246d8c" />
<rect x="549.10" y="76.4" width="30.50" height="89.2" fill="none" stroke="#3594b6" stroke-width="0.8"/>
<rect x="583.00" y="76.00" width="30.30" height="90.00" fill="#246d8c" />
<rect x="583.40" y="76.4" width="29.50" height="89.2" fill="none" stroke="#3594b6" stroke-width="0.8"/>
<rect x="616.50" y="76.00" width="30.50" height="90.00" fill="#246d8c" />
<rect x="616.90" y="76.4" width="29.70" height="89.2" fill="none" stroke="#3594b6" stroke-width="0.8"/>
<rect x="650.00" y="76.00" width="31.00" height="90.00" fill="#246d8c" />
<rect x="650.40" y="76.4" width="30.20" height="89.2" fill="none" stroke="#3594b6" stroke-width="0.8"/>
<rect x="684.00" y="76.00" width="30.70" height="90.00" fill="#246d8c" />
<rect x="684.40" y="76.4" width="29.90" height="89.2" fill="none" stroke="#3594b6" stroke-width="0.8"/>
<rect x="717.50" y="76.00" width="31.50" height="90.00" fill="#246d8c" />
<rect x="717.90" y="76.4" width="30.70" height="89.2" fill="none" stroke="#3594b6" stroke-width="0.8"/>
<rect x="751.00" y="76.00" width="47.70" height="90.00" fill="#25259c" />
<rect x="751.40" y="76.4" width="46.90" height="89.2" fill="none" stroke="#3434c4" stroke-width="0.8"/>
<rect x="799.20" y="76.00" width="2.80" height="90.00" fill="#35b048" />
<rect x="799.60" y="76.4" width="2.00" height="89.2" fill="none" stroke="#4fd060" stroke-width="0.8"/>
<rect x="802.60" y="76.00" width="2.80" height="90.00" fill="#b04040" />
<rect x="803.00" y="76.4" width="2.00" height="89.2" fill="none" stroke="#d05050" stroke-width="0.8"/>
<rect x="478.60" y="84.00" width="2.80" height="82.00" fill="#9c97a6" opacity="0.75"/>
<rect x="495.45" y="84.00" width="2.70" height="82.00" fill="#bfa22c" opacity="0.9"/>
<rect x="512.30" y="84.00" width="2.80" height="82.00" fill="#9c97a6" opacity="0.75"/>
<rect x="529.15" y="84.00" width="2.80" height="82.00" fill="#9c97a6" opacity="0.75"/>
<rect x="546.00" y="84.00" width="2.70" height="82.00" fill="#bfa22c" opacity="0.9"/>
<rect x="562.85" y="84.00" width="2.80" height="82.00" fill="#9c97a6" opacity="0.75"/>
<rect x="579.70" y="84.00" width="2.70" height="82.00" fill="#bfa22c" opacity="0.9"/>
<rect x="596.55" y="84.00" width="2.80" height="82.00" fill="#9c97a6" opacity="0.75"/>
<rect x="613.40" y="84.00" width="2.70" height="82.00" fill="#bfa22c" opacity="0.9"/>
<rect x="630.25" y="84.00" width="2.80" height="82.00" fill="#9c97a6" opacity="0.75"/>
<rect x="647.10" y="84.00" width="2.70" height="82.00" fill="#bfa22c" opacity="0.9"/>
<rect x="663.95" y="84.00" width="2.80" height="82.00" fill="#9c97a6" opacity="0.75"/>
<rect x="680.80" y="84.00" width="2.70" height="82.00" fill="#bfa22c" opacity="0.9"/>
<rect x="697.65" y="84.00" width="2.80" height="82.00" fill="#9c97a6" opacity="0.75"/>
<rect x="714.50" y="84.00" width="2.70" height="82.00" fill="#bfa22c" opacity="0.9"/>
<rect x="731.35" y="84.00" width="2.80" height="82.00" fill="#9c97a6" opacity="0.75"/>
<rect x="748.20" y="84.00" width="2.70" height="82.00" fill="#bfa22c" opacity="0.9"/>
<rect x="765.05" y="84.00" width="2.80" height="82.00" fill="#9c97a6" opacity="0.75"/>
<rect x="781.90" y="84.00" width="2.80" height="82.00" fill="#9c97a6" opacity="0.75"/>
<path d="M478.60,148.90 V85.50 M480.29,100.65 V164.50 M483.65,148.72 V85.50 M485.34,101.81 V164.50 M490.39,148.23 V85.50 M492.08,101.72 V164.50 M493.76,150.34 V85.50 M497.13,99.17 V164.50 M505.56,148.67 V85.50 M508.93,99.80 V164.50 M510.62,149.63 V85.50 M513.99,99.50 V164.50 M515.67,150.91 V85.50 M519.04,99.07 V164.50 M522.41,148.82 V85.50 M524.10,101.25 V164.50 M525.78,150.43 V85.50 M527.47,100.15 V164.50 M529.15,148.49 V85.50 M530.84,100.90 V164.50 M534.21,148.27 V85.50 M535.89,101.08 V164.50 M540.95,149.24 V85.50 M544.32,99.40 V164.50 M546.00,150.01 V85.50 M547.68,101.24 V164.50 M551.06,148.17 V85.50 M554.42,99.11 V164.50 M556.11,149.47 V85.50 M559.48,99.02 V164.50 M561.16,149.64 V85.50 M564.53,98.74 V164.50 M567.90,148.94 V85.50 M571.27,98.40 V164.50 M572.96,149.25 V85.50 M581.38,98.70 V164.50 M596.55,149.19 V85.50 M598.24,100.17 V164.50 M611.72,149.20 V85.50 M615.09,99.58 V164.50 M626.88,149.81 V85.50 M628.57,101.16 V164.50 M630.25,149.35 V85.50 M631.93,101.21 V164.50 M643.73,149.20 V85.50 M648.78,99.79 V164.50 M658.89,149.36 V85.50 M660.58,101.64 V164.50 M663.95,148.53 V85.50 M665.63,101.04 V164.50 M675.75,148.97 V85.50 M677.43,100.92 V164.50 M679.12,149.56 V85.50 M682.49,98.48 V164.50 M692.60,148.47 V85.50 M695.97,99.02 V164.50 M697.65,149.78 V85.50 M699.34,101.11 V164.50 M709.45,149.42 V85.50 M716.18,99.95 V164.50 M724.61,148.82 V85.50 M726.30,101.79 V164.50 M731.35,148.69 V85.50 M733.04,101.50 V164.50 M741.46,148.75 V85.50 M743.14,101.91 V164.50 M746.51,148.84 V85.50 M749.88,99.78 V164.50 M753.25,149.03 V85.50 M756.62,99.20 V164.50 M760.00,148.17 V85.50 M763.37,100.16 V164.50 M765.05,149.50 V85.50 M766.74,100.34 V164.50 M770.11,148.73 V85.50 M773.48,98.55 V164.50 M776.85,149.29 V85.50 M778.53,101.03 V164.50 M781.90,149.54 V85.50 M783.59,100.84 V164.50 M785.27,149.38 V85.50 M786.95,101.18 V164.50 M792.01,148.71 V85.50 M793.69,101.16 V164.50 M800.43,148.38 V85.50" fill="none" stroke="#c4cc74" stroke-width="1.15" opacity="0.5"/>
<path d="M474.00,149.18 L474.12,148.99 L474.24,148.67 L474.36,149.51 L474.48,149.13 L474.61,148.85 L474.73,149.28 L474.85,149.90 L474.97,148.88 L475.09,149.04 L475.21,148.64 L475.33,148.92 L475.45,148.74 L475.57,149.38 L475.69,148.70 L475.82,148.79 L475.94,149.58 L476.06,149.30 L476.18,148.72 L476.30,149.34 L476.42,149.44 L476.54,149.07 L476.66,149.35 L476.78,149.18 L476.91,149.15 L477.03,149.06 L477.15,149.31 L477.27,148.65 L477.39,149.80 L477.51,148.92 L477.63,149.65 L477.75,149.24 L477.87,149.39 L477.99,149.31 L478.12,148.98 L478.24,149.81 L478.36,149.08 L478.48,148.69 L478.60,148.90 M478.60,90.30 L478.72,89.26 L478.84,91.68 L478.96,94.26 L479.08,96.53 L479.20,97.45 L479.32,99.35 L479.44,99.61 L479.56,98.79 L479.68,98.51 L479.80,99.76 L479.92,101.10 L480.04,101.36 L480.16,102.06 L480.28,100.65 M480.29,162.53 L480.41,160.00 L480.53,155.50 L480.65,150.57 L480.77,146.41 L480.89,143.98 L481.01,143.82 L481.13,145.19 L481.25,147.02 L481.37,149.38 L481.49,150.46 L481.61,151.00 L481.73,149.31 L481.85,149.62 L481.97,149.24 L482.09,149.45 L482.21,149.56 L482.33,148.39 L482.45,148.22 L482.57,147.44 L482.69,148.00 L482.81,149.65 L482.93,148.69 L483.05,149.21 L483.17,149.67 L483.29,150.02 L483.41,149.11 L483.53,148.83 L483.65,148.72 M483.65,90.01 L483.78,89.81 L483.90,91.90 L484.02,93.38 L484.14,96.12 L484.26,97.95 L484.38,98.96 L484.50,99.13 L484.62,99.32 L484.74,99.21 L484.86,100.09 L484.98,101.30 L485.10,101.59 L485.22,101.69 L485.34,101.81 M485.34,162.35 L485.46,159.33 L485.58,155.64 L485.70,150.27 L485.82,145.74 L485.94,144.33 L486.06,143.37 L486.18,144.48 L486.30,148.58 L486.42,149.67 L486.54,150.93 L486.66,150.42 L486.78,150.16 L486.90,150.44 L487.02,148.69 L487.15,148.79 L487.27,148.46 L487.39,148.72 L487.51,147.90 L487.63,147.29 L487.75,147.86 L487.87,148.84 L487.99,148.21 L488.11,149.81 L488.23,149.13 L488.35,150.19 L488.47,148.73 L488.59,148.72 L488.71,148.37 L488.83,149.07 L488.95,149.07 L489.07,149.02 L489.19,149.34 L489.31,149.34 L489.43,148.30 L489.55,148.31 L489.67,148.38 L489.79,148.82 L489.91,148.68 L490.03,150.13 L490.15,149.14 L490.27,148.94 L490.39,148.23 M490.39,90.12 L490.52,89.51 L490.64,91.24 L490.76,94.33 L490.88,96.42 L491.00,98.10 L491.12,99.33 L491.24,99.21 L491.36,99.91 L491.48,99.42 L491.60,100.58 L491.72,101.29 L491.84,101.43 L491.96,101.34 L492.08,101.72 M492.08,162.54 L492.20,159.91 L492.32,155.00 L492.44,150.07 L492.56,145.81 L492.68,144.17 L492.80,143.89 L492.92,145.23 L493.04,148.20 L493.16,148.99 L493.28,150.83 L493.40,150.62 L493.52,150.17 L493.64,149.73 L493.76,150.34 M493.76,90.90 L493.89,90.58 L494.01,90.94 L494.13,93.06 L494.25,95.69 L494.37,96.25 L494.49,98.10 L494.61,99.48 L494.73,99.95 L494.85,100.27 L494.97,101.88 L495.09,101.33 L495.21,101.57 L495.33,100.62 L495.45,101.27 L495.57,100.96 L495.69,99.86 L495.81,99.76 L495.93,100.21 L496.05,100.32 L496.17,99.86 L496.29,99.51 L496.41,99.27 L496.53,97.87 L496.65,98.77 L496.77,99.62 L496.89,99.82 L497.01,98.20 L497.13,99.17 M497.13,160.43 L497.26,158.72 L497.38,154.57 L497.50,150.44 L497.62,145.23 L497.74,143.08 L497.86,142.89 L497.98,144.10 L498.10,147.28 L498.22,149.43 L498.34,151.01 L498.46,150.64 L498.58,150.80 L498.70,149.94 L498.82,149.61 L498.94,149.54 L499.06,148.44 L499.18,149.87 L499.30,149.27 L499.42,147.78 L499.54,146.87 L499.66,148.14 L499.78,149.38 L499.90,148.11 L500.02,150.98 L500.14,149.31 L500.26,148.98 L500.38,148.40 L500.50,148.73 L500.63,148.89 L500.75,149.02 L500.87,149.40 L500.99,148.88 L501.11,149.41 L501.23,148.69 L501.35,148.66 L501.47,149.39 L501.59,149.19 L501.71,149.67 L501.83,150.28 L501.95,148.92 L502.07,149.28 L502.19,148.18 L502.31,149.78 L502.43,148.23 L502.55,148.25 L502.67,148.90 L502.79,149.94 L502.91,149.33 L503.03,148.16 L503.15,149.13 L503.27,148.63 L503.39,148.64 L503.51,150.16 L503.63,149.46 L503.75,149.48 L503.87,149.41 L504.00,148.69 L504.12,149.25 L504.24,148.85 L504.36,147.65 L504.48,149.03 L504.60,149.81 L504.72,148.84 L504.84,149.58 L504.96,148.70 L505.08,149.13 L505.20,149.18 L505.32,149.29 L505.44,149.49 L505.56,148.67 M505.56,90.30 L505.68,90.62 L505.80,92.57 L505.92,94.08 L506.04,95.95 L506.16,98.19 L506.28,99.36 L506.40,99.74 L506.52,99.47 L506.64,99.58 L506.76,99.99 L506.88,100.61 L507.00,102.06 L507.12,102.31 L507.24,100.79 L507.37,100.18 L507.49,100.21 L507.61,99.14 L507.73,99.64 L507.85,99.88 L507.97,100.28 L508.09,99.73 L508.21,100.81 L508.33,99.45 L508.45,99.17 L508.57,98.08 L508.69,98.29 L508.81,99.38 L508.93,99.80 M508.93,160.61 L509.05,159.02 L509.17,155.52 L509.29,148.77 L509.41,145.87 L509.53,143.51 L509.65,142.02 L509.77,144.84 L509.89,147.38 L510.01,149.33 L510.13,149.71 L510.25,150.16 L510.37,150.44 L510.49,150.34 L510.61,149.63 M510.62,90.93 L510.74,91.87 L510.86,91.58 L510.98,94.45 L511.10,94.38 L511.22,96.94 L511.34,98.18 L511.46,98.93 L511.58,99.66 L511.70,99.38 L511.82,99.60 L511.94,101.23 L512.06,100.93 L512.18,101.49 L512.30,100.33 L512.42,100.15 L512.54,99.85 L512.66,99.89 L512.78,99.58 L512.90,100.67 L513.02,99.62 L513.14,99.60 L513.26,99.57 L513.38,99.04 L513.50,99.68 L513.62,98.97 L513.74,98.99 L513.86,99.86 L513.98,99.50 M513.99,160.44 L514.11,158.35 L514.23,154.61 L514.35,150.05 L514.47,146.26 L514.59,143.52 L514.71,142.96 L514.83,143.45 L514.95,147.55 L515.07,148.84 L515.19,149.89 L515.31,150.52 L515.43,150.50 L515.55,149.95 L515.67,150.91 M515.67,90.94 L515.79,90.84 L515.91,91.48 L516.03,94.15 L516.15,95.53 L516.27,96.77 L516.39,97.56 L516.51,98.58 L516.63,99.87 L516.75,100.13 L516.87,100.46 L516.99,101.80 L517.11,101.74 L517.23,100.77 L517.35,101.25 L517.48,100.57 L517.60,100.74 L517.72,99.78 L517.84,99.35 L517.96,100.41 L518.08,101.23 L518.20,99.33 L518.32,100.18 L518.44,99.09 L518.56,99.32 L518.68,99.07 L518.80,98.81 L518.92,99.87 L519.04,99.07 M519.04,160.44 L519.16,158.92 L519.28,155.19 L519.40,149.30 L519.52,145.96 L519.64,143.36 L519.76,142.85 L519.88,144.40 L520.00,147.45 L520.12,149.75 L520.24,150.66 L520.36,151.05 L520.48,150.50 L520.60,149.09 L520.72,150.30 L520.85,150.14 L520.97,148.86 L521.09,150.19 L521.21,148.47 L521.33,147.87 L521.45,148.20 L521.57,149.03 L521.69,148.59 L521.81,150.26 L521.93,149.98 L522.05,149.36 L522.17,149.57 L522.29,148.61 L522.41,148.82 M522.41,89.85 L522.53,90.49 L522.65,91.46 L522.77,92.99 L522.89,97.19 L523.01,98.97 L523.13,99.85 L523.25,99.20 L523.37,99.47 L523.49,99.68 L523.61,99.17 L523.73,100.78 L523.85,101.68 L523.97,101.21 L524.09,101.25 M524.10,162.36 L524.22,160.39 L524.34,155.57 L524.46,149.97 L524.58,147.22 L524.70,144.52 L524.82,143.87 L524.94,145.50 L525.06,146.49 L525.18,149.28 L525.30,150.28 L525.42,151.55 L525.54,150.71 L525.66,149.87 L525.78,150.43 M525.78,90.90 L525.90,91.14 L526.02,91.27 L526.14,92.98 L526.26,96.36 L526.38,96.57 L526.50,97.79 L526.62,98.64 L526.74,98.78 L526.86,99.77 L526.98,100.55 L527.10,101.28 L527.22,100.50 L527.34,100.72 L527.46,100.15 M527.47,162.24 L527.59,160.50 L527.71,155.96 L527.83,149.60 L527.95,146.63 L528.07,144.34 L528.19,143.39 L528.31,145.00 L528.43,147.82 L528.55,148.19 L528.67,150.53 L528.79,151.05 L528.91,151.10 L529.03,149.70 L529.15,148.49 M529.15,90.72 L529.27,90.76 L529.39,90.87 L529.51,93.05 L529.63,95.62 L529.75,96.34 L529.87,98.67 L529.99,98.92 L530.11,99.28 L530.23,99.77 L530.35,100.19 L530.47,101.43 L530.59,101.78 L530.71,101.18 L530.83,100.90 M530.84,162.24 L530.96,161.10 L531.08,155.68 L531.20,151.17 L531.32,146.42 L531.44,144.13 L531.56,143.73 L531.68,144.26 L531.80,147.27 L531.92,148.92 L532.04,150.55 L532.16,150.08 L532.28,150.63 L532.40,149.38 L532.52,148.68 L532.64,149.66 L532.76,148.45 L532.88,149.41 L533.00,148.93 L533.12,147.75 L533.24,148.52 L533.36,147.71 L533.48,149.49 L533.60,149.61 L533.72,150.14 L533.84,149.67 L533.96,149.61 L534.08,149.42 L534.20,148.27 M534.21,90.01 L534.33,89.92 L534.45,91.86 L534.57,94.25 L534.69,96.11 L534.81,98.18 L534.93,99.94 L535.05,98.31 L535.17,97.82 L535.29,99.72 L535.41,100.28 L535.53,101.28 L535.65,100.66 L535.77,101.75 L535.89,101.08 M535.89,162.35 L536.01,160.08 L536.13,156.03 L536.25,151.20 L536.37,147.65 L536.49,142.97 L536.61,143.14 L536.73,144.45 L536.85,148.02 L536.97,148.83 L537.09,150.40 L537.21,150.72 L537.33,149.09 L537.45,150.43 L537.57,150.02 L537.70,149.10 L537.82,148.81 L537.94,148.43 L538.06,148.36 L538.18,147.99 L538.30,148.32 L538.42,147.79 L538.54,148.56 L538.66,149.53 L538.78,149.79 L538.90,149.25 L539.02,149.87 L539.14,149.02 L539.26,149.10 L539.38,149.07 L539.50,149.87 L539.62,149.00 L539.74,149.11 L539.86,149.42 L539.98,149.15 L540.10,148.12 L540.22,148.66 L540.34,149.31 L540.46,149.37 L540.58,149.06 L540.70,148.64 L540.82,148.86 L540.94,149.24 M540.95,90.12 L541.07,90.64 L541.19,91.28 L541.31,93.15 L541.43,95.90 L541.55,97.24 L541.67,99.64 L541.79,99.76 L541.91,99.10 L542.03,99.45 L542.15,100.56 L542.27,100.73 L542.39,101.58 L542.51,102.19 L542.63,101.03 L542.75,100.76 L542.87,99.38 L542.99,99.98 L543.11,99.35 L543.23,100.10 L543.35,100.28 L543.47,99.32 L543.59,99.27 L543.71,99.15 L543.83,98.57 L543.95,98.42 L544.07,98.68 L544.19,99.01 L544.31,99.40 M544.32,160.61 L544.44,158.89 L544.56,155.61 L544.68,150.15 L544.80,145.34 L544.92,142.02 L545.04,142.90 L545.16,145.04 L545.28,147.29 L545.40,150.44 L545.52,151.60 L545.64,151.38 L545.76,150.24 L545.88,150.92 L546.00,150.01 M546.00,90.93 L546.12,90.21 L546.24,92.70 L546.36,92.95 L546.48,94.80 L546.60,97.41 L546.72,98.68 L546.84,98.67 L546.96,99.66 L547.08,100.41 L547.20,99.91 L547.32,101.50 L547.44,101.96 L547.56,100.95 L547.68,101.24 M547.68,162.08 L547.81,159.81 L547.93,156.01 L548.05,150.87 L548.17,147.31 L548.29,144.03 L548.41,143.43 L548.53,144.16 L548.65,146.88 L548.77,150.21 L548.89,150.72 L549.01,151.23 L549.13,150.82 L549.25,149.16 L549.37,149.21 L549.49,149.02 L549.61,149.48 L549.73,148.22 L549.85,148.02 L549.97,147.68 L550.09,147.50 L550.21,148.20 L550.33,148.93 L550.45,149.03 L550.57,149.35 L550.69,149.74 L550.81,150.16 L550.93,149.03 L551.05,148.17 M551.06,90.01 L551.18,90.39 L551.30,91.93 L551.42,93.86 L551.54,96.30 L551.66,97.88 L551.78,99.13 L551.90,98.63 L552.02,99.29 L552.14,99.95 L552.26,100.12 L552.38,101.59 L552.50,101.93 L552.62,101.73 L552.74,100.57 L552.86,100.99 L552.98,100.05 L553.10,98.78 L553.22,100.69 L553.34,100.74 L553.46,100.90 L553.58,100.71 L553.70,99.39 L553.82,99.09 L553.94,98.45 L554.06,99.41 L554.18,99.07 L554.30,100.45 L554.42,99.11 M554.42,160.61 L554.55,159.39 L554.67,155.67 L554.79,150.04 L554.91,145.39 L555.03,142.50 L555.15,143.60 L555.27,145.33 L555.39,148.23 L555.51,149.39 L555.63,151.59 L555.75,151.18 L555.87,150.79 L555.99,150.14 L556.11,149.47 M556.11,90.93 L556.23,90.98 L556.35,92.59 L556.47,93.57 L556.59,95.56 L556.71,97.06 L556.83,98.21 L556.95,99.28 L557.07,98.86 L557.19,100.11 L557.31,100.50 L557.43,101.41 L557.55,101.40 L557.67,100.74 L557.79,100.75 L557.92,99.64 L558.04,100.68 L558.16,99.20 L558.28,99.71 L558.40,100.22 L558.52,99.81 L558.64,100.39 L558.76,99.29 L558.88,98.34 L559.00,99.52 L559.12,98.90 L559.24,100.74 L559.36,98.89 L559.48,99.02 M559.48,160.44 L559.60,158.83 L559.72,154.32 L559.84,150.31 L559.96,146.33 L560.08,143.98 L560.20,143.21 L560.32,144.66 L560.44,147.95 L560.56,150.14 L560.68,150.64 L560.80,150.66 L560.92,150.07 L561.04,150.06 L561.16,149.64 M561.16,90.94 L561.29,91.37 L561.41,92.45 L561.53,93.03 L561.65,95.70 L561.77,97.22 L561.89,97.86 L562.01,98.72 L562.13,99.85 L562.25,99.84 L562.37,100.63 L562.49,101.22 L562.61,101.83 L562.73,101.21 L562.85,101.16 L562.97,99.71 L563.09,99.56 L563.21,100.02 L563.33,100.61 L563.45,99.78 L563.57,100.01 L563.69,100.03 L563.81,99.17 L563.93,99.18 L564.05,99.15 L564.17,98.39 L564.29,98.45 L564.41,99.41 L564.53,98.74 M564.53,160.44 L564.66,158.78 L564.78,154.94 L564.90,149.55 L565.02,145.08 L565.14,142.67 L565.26,143.52 L565.38,143.57 L565.50,147.64 L565.62,149.44 L565.74,150.33 L565.86,151.01 L565.98,150.36 L566.10,149.43 L566.22,149.54 L566.34,149.55 L566.46,149.57 L566.58,149.05 L566.70,148.41 L566.82,146.90 L566.94,147.54 L567.06,148.47 L567.18,149.17 L567.30,149.08 L567.42,149.46 L567.54,149.14 L567.66,148.52 L567.78,148.96 L567.90,148.94 M567.90,89.85 L568.03,90.03 L568.15,91.60 L568.27,94.40 L568.39,95.63 L568.51,98.04 L568.63,98.89 L568.75,99.54 L568.87,98.33 L568.99,98.48 L569.11,100.19 L569.23,100.59 L569.35,101.72 L569.47,101.98 L569.59,101.39 L569.71,100.83 L569.83,99.90 L569.95,99.63 L570.07,99.08 L570.19,100.59 L570.31,99.56 L570.43,99.86 L570.55,100.03 L570.67,98.10 L570.79,99.05 L570.91,98.44 L571.03,99.07 L571.15,98.57 L571.27,98.40 M571.27,160.61 L571.40,159.15 L571.52,155.92 L571.64,150.26 L571.76,145.50 L571.88,143.07 L572.00,143.75 L572.12,145.53 L572.24,147.05 L572.36,149.06 L572.48,151.60 L572.60,150.64 L572.72,150.65 L572.84,150.43 L572.96,149.25 M572.96,90.93 L573.08,90.77 L573.20,91.30 L573.32,94.19 L573.44,95.37 L573.56,97.35 L573.68,97.29 L573.80,98.92 L573.92,98.74 L574.04,99.77 L574.16,100.04 L574.28,101.24 L574.40,101.96 L574.52,101.29 L574.64,100.74 L574.77,100.52 L574.89,99.75 L575.01,100.05 L575.13,99.98 L575.25,100.46 L575.37,99.76 L575.49,99.76 L575.61,99.41 L575.73,99.79 L575.85,99.16 L575.97,98.53 L576.09,98.65 L576.21,99.29 L576.33,99.06 L576.45,98.67 L576.57,98.67 L576.69,99.28 L576.81,98.18 L576.93,99.37 L577.05,99.26 L577.17,100.17 L577.29,98.53 L577.41,99.47 L577.53,99.10 L577.65,99.27 L577.77,99.53 L577.89,100.35 L578.01,99.66 L578.14,99.68 L578.26,98.67 L578.38,99.58 L578.50,98.61 L578.62,99.22 L578.74,99.56 L578.86,100.07 L578.98,99.86 L579.10,99.45 L579.22,99.69 L579.34,99.16 L579.46,99.26 L579.58,99.22 L579.70,99.70 L579.82,99.24 L579.94,98.89 L580.06,98.78 L580.18,100.45 L580.30,98.27 L580.42,99.22 L580.54,99.18 L580.66,99.23 L580.78,98.88 L580.90,99.62 L581.02,99.37 L581.14,98.84 L581.26,99.13 L581.38,98.70 M581.38,160.50 L581.51,159.22 L581.63,156.21 L581.75,151.12 L581.87,146.37 L581.99,143.18 L582.11,142.88 L582.23,144.80 L582.35,147.99 L582.47,149.58 L582.59,150.83 L582.71,150.40 L582.83,150.48 L582.95,149.92 L583.07,149.18 L583.19,148.97 L583.31,149.38 L583.43,149.27 L583.55,148.22 L583.67,148.44 L583.79,147.74 L583.91,148.35 L584.03,149.59 L584.15,149.27 L584.27,149.87 L584.39,149.63 L584.51,149.16 L584.63,149.01 L584.75,147.81 L584.88,148.78 L585.00,148.21 L585.12,148.85 L585.24,149.64 L585.36,148.29 L585.48,149.54 L585.60,149.64 L585.72,149.32 L585.84,149.30 L585.96,149.24 L586.08,149.19 L586.20,150.28 L586.32,148.53 L586.44,148.83 L586.56,149.04 L586.68,148.60 L586.80,148.41 L586.92,149.29 L587.04,149.19 L587.16,148.25 L587.28,148.68 L587.40,148.51 L587.52,148.75 L587.64,149.22 L587.76,149.47 L587.88,148.50 L588.00,149.07 L588.12,148.70 L588.25,148.13 L588.37,149.22 L588.49,148.71 L588.61,148.89 L588.73,148.06 L588.85,149.33 L588.97,149.06 L589.09,149.30 L589.21,148.69 L589.33,149.68 L589.45,149.16 L589.57,148.76 L589.69,149.21 L589.81,149.31 L589.93,148.72 L590.05,149.54 L590.17,149.24 L590.29,149.38 L590.41,149.51 L590.53,150.26 L590.65,148.97 L590.77,148.77 L590.89,149.23 L591.01,148.95 L591.13,147.93 L591.25,149.95 L591.37,149.23 L591.49,148.22 L591.62,148.70 L591.74,149.13 L591.86,148.85 L591.98,148.82 L592.10,149.13 L592.22,149.48 L592.34,149.49 L592.46,149.11 L592.58,149.20 L592.70,148.26 L592.82,148.29 L592.94,149.00 L593.06,148.73 L593.18,149.06 L593.30,148.60 L593.42,148.69 L593.54,148.94 L593.66,147.91 L593.78,148.41 L593.90,149.28 L594.02,149.00 L594.14,148.48 L594.26,149.11 L594.38,149.79 L594.50,149.63 L594.62,148.41 L594.74,148.70 L594.86,148.07 L594.99,148.69 L595.11,148.35 L595.23,148.58 L595.35,149.12 L595.47,148.84 L595.59,148.84 L595.71,148.24 L595.83,149.42 L595.95,148.84 L596.07,148.31 L596.19,149.00 L596.31,149.52 L596.43,148.33 L596.55,149.19 M596.55,90.30 L596.67,89.79 L596.79,91.90 L596.91,93.83 L597.03,95.83 L597.15,97.50 L597.27,98.39 L597.39,98.91 L597.51,99.59 L597.63,99.41 L597.75,99.77 L597.87,100.36 L597.99,101.33 L598.11,101.91 L598.23,100.17 M598.24,162.53 L598.36,160.10 L598.48,155.86 L598.60,150.11 L598.72,145.99 L598.84,143.73 L598.96,143.09 L599.08,144.61 L599.20,146.68 L599.32,148.76 L599.44,150.21 L599.56,150.77 L599.68,150.05 L599.80,149.62 L599.92,149.14 L600.04,149.45 L600.16,148.89 L600.28,149.14 L600.40,148.10 L600.52,148.18 L600.64,148.01 L600.76,148.28 L600.88,149.06 L601.00,149.12 L601.12,150.03 L601.24,149.45 L601.36,148.76 L601.48,148.81 L601.60,149.06 L601.73,148.75 L601.85,147.84 L601.97,148.83 L602.09,149.10 L602.21,149.17 L602.33,148.38 L602.45,148.86 L602.57,149.14 L602.69,149.21 L602.81,148.31 L602.93,148.86 L603.05,148.70 L603.17,148.62 L603.29,148.69 L603.41,149.27 L603.53,148.80 L603.65,148.45 L603.77,148.42 L603.89,149.34 L604.01,148.52 L604.13,148.76 L604.25,149.50 L604.37,149.59 L604.49,149.67 L604.61,148.47 L604.73,149.89 L604.85,149.03 L604.97,149.49 L605.10,148.91 L605.22,149.43 L605.34,148.95 L605.46,149.05 L605.58,149.00 L605.70,148.68 L605.82,149.05 L605.94,149.40 L606.06,148.41 L606.18,149.01 L606.30,148.52 L606.42,148.44 L606.54,148.25 L606.66,149.87 L606.78,149.10 L606.90,148.86 L607.02,149.51 L607.14,148.04 L607.26,149.06 L607.38,148.73 L607.50,149.35 L607.62,148.38 L607.74,149.08 L607.86,149.01 L607.98,149.70 L608.10,148.78 L608.22,149.00 L608.34,149.23 L608.47,149.23 L608.59,149.29 L608.71,149.08 L608.83,148.55 L608.95,149.62 L609.07,149.89 L609.19,149.08 L609.31,148.71 L609.43,149.53 L609.55,148.57 L609.67,149.15 L609.79,148.27 L609.91,149.69 L610.03,148.46 L610.15,149.18 L610.27,148.72 L610.39,148.78 L610.51,148.42 L610.63,148.97 L610.75,148.46 L610.87,149.47 L610.99,148.57 L611.11,148.97 L611.23,149.36 L611.35,149.37 L611.47,149.45 L611.59,149.52 L611.71,149.20 M611.72,90.30 L611.84,90.77 L611.96,91.95 L612.08,92.92 L612.20,95.97 L612.32,98.02 L612.44,99.06 L612.56,99.66 L612.68,98.75 L612.80,98.58 L612.92,99.51 L613.04,100.91 L613.16,101.00 L613.28,100.56 L613.40,101.95 L613.52,101.25 L613.64,100.27 L613.76,99.55 L613.88,99.62 L614.00,99.39 L614.12,99.64 L614.24,100.37 L614.36,99.33 L614.48,99.63 L614.60,98.68 L614.72,97.70 L614.84,99.12 L614.96,100.07 L615.08,99.58 M615.09,160.61 L615.21,158.70 L615.33,154.69 L615.45,150.24 L615.57,145.09 L615.69,142.32 L615.81,142.95 L615.93,144.76 L616.05,147.02 L616.17,149.12 L616.29,150.95 L616.41,149.93 L616.53,150.01 L616.65,149.59 L616.77,150.54 L616.89,149.13 L617.01,149.84 L617.13,149.01 L617.25,149.07 L617.37,148.67 L617.49,147.72 L617.61,148.34 L617.73,148.51 L617.85,149.43 L617.97,150.28 L618.09,149.11 L618.21,148.87 L618.33,148.79 L618.45,148.41 L618.58,148.49 L618.70,147.93 L618.82,149.04 L618.94,149.18 L619.06,149.05 L619.18,148.89 L619.30,149.14 L619.42,149.85 L619.54,148.44 L619.66,148.76 L619.78,149.55 L619.90,148.14 L620.02,148.49 L620.14,148.39 L620.26,148.23 L620.38,148.29 L620.50,148.38 L620.62,148.71 L620.74,149.34 L620.86,149.81 L620.98,148.14 L621.10,149.10 L621.22,149.14 L621.34,149.15 L621.46,149.91 L621.58,149.31 L621.70,149.71 L621.82,148.63 L621.95,148.29 L622.07,149.58 L622.19,149.09 L622.31,148.39 L622.43,149.05 L622.55,149.50 L622.67,148.65 L622.79,149.18 L622.91,148.29 L623.03,149.24 L623.15,149.15 L623.27,148.93 L623.39,148.87 L623.51,148.94 L623.63,149.67 L623.75,149.62 L623.87,148.00 L623.99,148.49 L624.11,148.92 L624.23,149.03 L624.35,148.49 L624.47,149.44 L624.59,150.30 L624.71,148.46 L624.83,148.49 L624.95,149.08 L625.07,149.58 L625.19,149.43 L625.32,149.07 L625.44,149.28 L625.56,149.05 L625.68,149.00 L625.80,148.90 L625.92,148.77 L626.04,149.21 L626.16,148.95 L626.28,149.18 L626.40,148.81 L626.52,149.79 L626.64,149.09 L626.76,149.04 L626.88,149.81 M626.88,90.30 L627.00,90.48 L627.12,91.64 L627.24,93.66 L627.36,95.18 L627.48,98.48 L627.60,98.47 L627.72,99.96 L627.84,99.57 L627.96,99.13 L628.08,99.25 L628.20,101.00 L628.32,101.25 L628.44,102.45 L628.56,101.16 M628.57,162.53 L628.69,160.42 L628.81,155.89 L628.93,150.13 L629.05,145.53 L629.17,144.23 L629.29,143.89 L629.41,145.17 L629.53,147.11 L629.65,149.64 L629.77,149.83 L629.89,150.89 L630.01,150.34 L630.13,149.34 L630.25,149.35 M630.25,90.90 L630.37,90.72 L630.49,91.39 L630.61,93.35 L630.73,94.65 L630.85,96.36 L630.97,97.42 L631.09,98.27 L631.21,99.48 L631.33,100.11 L631.45,99.40 L631.57,101.38 L631.69,100.98 L631.81,101.47 L631.93,101.21 M631.93,162.24 L632.06,160.91 L632.18,155.78 L632.30,151.05 L632.42,146.04 L632.54,142.78 L632.66,142.68 L632.78,145.34 L632.90,146.70 L633.02,149.14 L633.14,150.98 L633.26,151.05 L633.38,149.97 L633.50,149.50 L633.62,148.80 L633.74,149.96 L633.86,148.50 L633.98,148.71 L634.10,148.30 L634.22,147.88 L634.34,148.42 L634.46,147.49 L634.58,148.43 L634.70,149.61 L634.82,149.69 L634.94,150.12 L635.06,148.53 L635.18,149.37 L635.30,148.23 L635.43,148.59 L635.55,149.89 L635.67,149.38 L635.79,148.47 L635.91,149.48 L636.03,148.69 L636.15,149.38 L636.27,149.18 L636.39,149.10 L636.51,148.83 L636.63,149.23 L636.75,147.96 L636.87,149.02 L636.99,149.50 L637.11,148.57 L637.23,148.40 L637.35,149.14 L637.47,149.50 L637.59,149.12 L637.71,148.15 L637.83,148.73 L637.95,148.94 L638.07,149.22 L638.19,148.20 L638.31,149.14 L638.43,149.77 L638.55,149.92 L638.67,148.38 L638.80,148.36 L638.92,148.82 L639.04,148.67 L639.16,148.84 L639.28,149.18 L639.40,149.37 L639.52,148.89 L639.64,148.52 L639.76,148.47 L639.88,148.74 L640.00,148.72 L640.12,148.97 L640.24,150.64 L640.36,149.47 L640.48,148.83 L640.60,149.17 L640.72,148.41 L640.84,148.35 L640.96,149.37 L641.08,149.56 L641.20,148.66 L641.32,149.50 L641.44,149.13 L641.56,149.02 L641.68,150.00 L641.80,148.94 L641.92,148.36 L642.04,149.06 L642.17,148.94 L642.29,149.87 L642.41,147.92 L642.53,149.54 L642.65,149.10 L642.77,148.08 L642.89,149.37 L643.01,148.91 L643.13,149.33 L643.25,149.08 L643.37,149.09 L643.49,149.19 L643.61,149.61 L643.73,149.20 M643.73,90.30 L643.85,90.80 L643.97,91.09 L644.09,94.58 L644.21,95.60 L644.33,98.61 L644.45,99.37 L644.57,99.15 L644.69,99.37 L644.81,99.64 L644.93,99.69 L645.05,99.99 L645.17,101.13 L645.29,102.39 L645.41,101.13 L645.54,100.19 L645.66,100.28 L645.78,100.32 L645.90,100.80 L646.02,100.33 L646.14,100.11 L646.26,100.33 L646.38,99.61 L646.50,98.39 L646.62,99.61 L646.74,99.55 L646.86,98.48 L646.98,100.13 L647.10,99.66 L647.22,99.12 L647.34,98.38 L647.46,99.06 L647.58,98.87 L647.70,99.57 L647.82,99.95 L647.94,100.16 L648.06,99.20 L648.18,99.16 L648.30,99.85 L648.42,99.15 L648.54,98.95 L648.66,99.14 L648.78,99.79 M648.78,160.64 L648.91,159.61 L649.03,155.77 L649.15,150.53 L649.27,146.11 L649.39,143.54 L649.51,143.40 L649.63,145.39 L649.75,147.35 L649.87,149.68 L649.99,150.99 L650.11,151.25 L650.23,150.20 L650.35,150.68 L650.47,149.08 L650.59,149.68 L650.71,149.25 L650.83,148.90 L650.95,148.62 L651.07,148.87 L651.19,147.41 L651.31,147.77 L651.43,148.46 L651.55,149.05 L651.67,150.69 L651.79,149.07 L651.91,149.42 L652.03,149.05 L652.15,148.84 L652.28,149.36 L652.40,149.17 L652.52,148.90 L652.64,149.15 L652.76,149.39 L652.88,148.61 L653.00,148.50 L653.12,148.93 L653.24,148.84 L653.36,150.13 L653.48,149.13 L653.60,149.47 L653.72,148.58 L653.84,148.86 L653.96,148.97 L654.08,148.71 L654.20,149.18 L654.32,149.12 L654.44,149.76 L654.56,148.63 L654.68,149.10 L654.80,149.43 L654.92,148.79 L655.04,149.34 L655.16,149.21 L655.28,149.57 L655.40,150.85 L655.52,148.90 L655.65,149.13 L655.77,148.80 L655.89,148.68 L656.01,150.05 L656.13,149.83 L656.25,149.36 L656.37,148.66 L656.49,150.31 L656.61,149.84 L656.73,149.03 L656.85,148.85 L656.97,149.23 L657.09,149.94 L657.21,149.01 L657.33,148.68 L657.45,148.95 L657.57,147.99 L657.69,149.44 L657.81,149.13 L657.93,149.64 L658.05,149.20 L658.17,149.24 L658.29,149.10 L658.41,148.22 L658.53,149.07 L658.65,149.19 L658.77,149.58 L658.89,149.36 M658.89,90.30 L659.02,90.02 L659.14,91.51 L659.26,93.73 L659.38,96.62 L659.50,97.75 L659.62,98.22 L659.74,99.06 L659.86,99.05 L659.98,100.01 L660.10,100.12 L660.22,99.98 L660.34,101.84 L660.46,102.53 L660.58,101.64 M660.58,162.53 L660.70,159.84 L660.82,156.71 L660.94,151.05 L661.06,145.84 L661.18,144.94 L661.30,143.79 L661.42,144.21 L661.54,147.55 L661.66,149.24 L661.78,150.60 L661.90,150.68 L662.02,149.74 L662.14,150.07 L662.26,150.01 L662.39,149.39 L662.51,149.12 L662.63,148.13 L662.75,148.08 L662.87,147.55 L662.99,147.84 L663.11,148.14 L663.23,148.12 L663.35,149.86 L663.47,149.45 L663.59,149.48 L663.71,148.73 L663.83,148.85 L663.95,148.53 M663.95,90.01 L664.07,91.09 L664.19,90.63 L664.31,93.11 L664.43,96.14 L664.55,97.39 L664.67,98.84 L664.79,100.45 L664.91,99.27 L665.03,99.38 L665.15,100.31 L665.27,101.18 L665.39,101.76 L665.51,101.67 L665.63,101.04 M665.63,162.35 L665.76,160.78 L665.88,156.23 L666.00,150.74 L666.12,146.49 L666.24,143.43 L666.36,143.33 L666.48,144.38 L666.60,147.18 L666.72,150.00 L666.84,150.89 L666.96,150.48 L667.08,150.13 L667.20,150.32 L667.32,150.01 L667.44,148.95 L667.56,149.04 L667.68,148.98 L667.80,148.51 L667.92,148.32 L668.04,148.46 L668.16,148.56 L668.28,148.77 L668.40,148.76 L668.52,149.35 L668.64,150.08 L668.76,150.01 L668.88,149.30 L669.00,148.52 L669.13,147.97 L669.25,149.48 L669.37,148.68 L669.49,149.08 L669.61,149.82 L669.73,148.54 L669.85,148.60 L669.97,149.20 L670.09,148.79 L670.21,149.67 L670.33,150.13 L670.45,149.02 L670.57,149.73 L670.69,148.34 L670.81,148.91 L670.93,148.77 L671.05,147.79 L671.17,148.99 L671.29,149.46 L671.41,148.88 L671.53,148.31 L671.65,149.22 L671.77,148.52 L671.89,149.47 L672.01,149.55 L672.13,149.34 L672.25,148.98 L672.37,149.00 L672.50,149.77 L672.62,149.92 L672.74,149.14 L672.86,147.85 L672.98,148.46 L673.10,148.40 L673.22,149.81 L673.34,148.28 L673.46,149.64 L673.58,149.09 L673.70,148.93 L673.82,149.75 L673.94,148.91 L674.06,149.62 L674.18,149.62 L674.30,148.68 L674.42,149.00 L674.54,149.61 L674.66,147.88 L674.78,149.50 L674.90,148.90 L675.02,149.42 L675.14,148.85 L675.26,148.80 L675.38,147.96 L675.50,148.30 L675.62,148.61 L675.74,148.97 M675.75,90.30 L675.87,89.81 L675.99,91.63 L676.11,93.69 L676.23,96.17 L676.35,98.27 L676.47,99.41 L676.59,99.01 L676.71,99.45 L676.83,99.28 L676.95,100.01 L677.07,99.73 L677.19,101.13 L677.31,101.17 L677.43,100.92 M677.43,162.53 L677.55,160.14 L677.67,155.61 L677.79,150.53 L677.91,145.74 L678.03,143.19 L678.15,143.48 L678.27,144.79 L678.39,147.49 L678.51,149.29 L678.63,150.63 L678.75,149.96 L678.87,150.12 L678.99,149.75 L679.11,149.56 M679.12,90.90 L679.24,90.25 L679.36,92.44 L679.48,93.26 L679.60,95.74 L679.72,96.38 L679.84,98.00 L679.96,99.11 L680.08,99.20 L680.20,99.88 L680.32,100.28 L680.44,102.17 L680.56,102.02 L680.68,101.35 L680.80,101.10 L680.92,100.02 L681.04,100.32 L681.16,99.78 L681.28,99.63 L681.40,100.19 L681.52,101.23 L681.64,99.73 L681.76,99.12 L681.88,98.85 L682.00,99.35 L682.12,98.69 L682.24,98.52 L682.36,99.79 L682.48,98.48 M682.49,160.43 L682.61,158.01 L682.73,154.83 L682.85,149.94 L682.97,144.73 L683.09,142.17 L683.21,143.02 L683.33,144.36 L683.45,146.18 L683.57,150.23 L683.69,151.47 L683.81,151.73 L683.93,150.46 L684.05,149.42 L684.17,149.34 L684.29,150.17 L684.41,149.25 L684.53,148.27 L684.65,148.92 L684.77,148.50 L684.89,147.43 L685.01,147.86 L685.13,149.29 L685.25,148.77 L685.37,150.04 L685.49,149.58 L685.61,149.71 L685.73,148.30 L685.85,148.38 L685.98,148.28 L686.10,149.75 L686.22,149.54 L686.34,148.75 L686.46,148.76 L686.58,148.95 L686.70,148.63 L686.82,149.06 L686.94,148.42 L687.06,148.92 L687.18,150.24 L687.30,149.80 L687.42,148.59 L687.54,149.69 L687.66,149.43 L687.78,147.77 L687.90,149.16 L688.02,149.65 L688.14,149.23 L688.26,149.05 L688.38,149.58 L688.50,149.06 L688.62,147.76 L688.74,148.98 L688.86,149.16 L688.98,148.50 L689.10,149.69 L689.22,149.00 L689.35,148.17 L689.47,148.82 L689.59,148.58 L689.71,149.32 L689.83,148.69 L689.95,148.82 L690.07,149.75 L690.19,148.73 L690.31,148.71 L690.43,148.91 L690.55,148.64 L690.67,149.36 L690.79,148.39 L690.91,148.75 L691.03,149.94 L691.15,148.11 L691.27,148.46 L691.39,149.04 L691.51,147.82 L691.63,147.82 L691.75,148.66 L691.87,149.51 L691.99,149.12 L692.11,148.72 L692.23,148.43 L692.35,150.26 L692.47,149.28 L692.59,148.47 M692.60,90.30 L692.72,91.23 L692.84,92.17 L692.96,93.20 L693.08,95.10 L693.20,99.03 L693.32,99.04 L693.44,99.10 L693.56,99.36 L693.68,99.12 L693.80,100.37 L693.92,100.32 L694.04,101.40 L694.16,101.96 L694.28,101.97 L694.40,100.25 L694.52,99.66 L694.64,100.34 L694.76,99.68 L694.88,100.48 L695.00,100.26 L695.12,100.06 L695.24,99.11 L695.36,99.02 L695.48,98.70 L695.60,98.44 L695.72,99.92 L695.84,98.66 L695.96,99.02 M695.97,160.61 L696.09,159.21 L696.21,155.57 L696.33,149.56 L696.45,145.32 L696.57,142.55 L696.69,142.36 L696.81,145.37 L696.93,147.35 L697.05,149.38 L697.17,150.88 L697.29,151.28 L697.41,151.03 L697.53,150.02 L697.65,149.78 M697.65,90.93 L697.77,91.32 L697.89,92.53 L698.01,93.94 L698.13,94.82 L698.25,97.00 L698.37,97.77 L698.49,99.44 L698.61,99.23 L698.73,99.52 L698.85,101.40 L698.97,101.18 L699.09,101.88 L699.21,101.41 L699.33,101.11 M699.34,162.08 L699.46,160.54 L699.58,155.46 L699.70,150.54 L699.82,146.95 L699.94,143.79 L700.06,143.63 L700.18,145.45 L700.30,146.78 L700.42,149.80 L700.54,150.36 L700.66,150.45 L700.78,150.11 L700.90,150.94 L701.02,149.75 L701.14,149.46 L701.26,148.65 L701.38,149.42 L701.50,147.74 L701.62,147.75 L701.74,148.60 L701.86,148.87 L701.98,148.74 L702.10,149.81 L702.22,149.63 L702.34,149.05 L702.46,149.83 L702.58,149.01 L702.70,149.13 L702.83,149.14 L702.95,148.52 L703.07,149.21 L703.19,148.82 L703.31,149.31 L703.43,149.35 L703.55,149.35 L703.67,150.09 L703.79,148.84 L703.91,149.77 L704.03,149.70 L704.15,149.53 L704.27,148.57 L704.39,149.16 L704.51,149.05 L704.63,149.01 L704.75,149.25 L704.87,148.71 L704.99,149.13 L705.11,149.36 L705.23,148.86 L705.35,149.25 L705.47,149.64 L705.59,149.16 L705.71,148.91 L705.83,149.36 L705.95,149.03 L706.07,148.79 L706.20,148.81 L706.32,149.84 L706.44,149.32 L706.56,149.40 L706.68,149.54 L706.80,148.31 L706.92,149.29 L707.04,149.37 L707.16,148.85 L707.28,148.46 L707.40,149.33 L707.52,148.91 L707.64,149.56 L707.76,148.82 L707.88,149.08 L708.00,149.54 L708.12,149.53 L708.24,149.57 L708.36,148.93 L708.48,150.07 L708.60,148.59 L708.72,148.75 L708.84,149.02 L708.96,149.68 L709.08,149.24 L709.20,149.99 L709.32,149.43 L709.44,149.42 M709.45,90.30 L709.57,90.03 L709.69,91.39 L709.81,93.61 L709.93,95.47 L710.05,97.63 L710.17,98.56 L710.29,99.17 L710.41,99.68 L710.53,99.54 L710.65,99.95 L710.77,100.91 L710.89,101.05 L711.01,101.55 L711.13,101.13 L711.25,100.18 L711.37,99.76 L711.49,99.21 L711.61,99.71 L711.73,100.37 L711.85,100.30 L711.97,100.00 L712.09,99.78 L712.21,98.95 L712.33,98.35 L712.45,97.87 L712.57,99.64 L712.69,99.46 L712.81,98.38 L712.94,99.47 L713.06,98.87 L713.18,98.87 L713.30,99.01 L713.42,98.74 L713.54,98.63 L713.66,99.16 L713.78,99.89 L713.90,98.94 L714.02,98.56 L714.14,99.15 L714.26,100.15 L714.38,98.89 L714.50,100.01 L714.62,99.59 L714.74,99.65 L714.86,100.01 L714.98,98.80 L715.10,99.17 L715.22,99.12 L715.34,99.64 L715.46,99.48 L715.58,99.53 L715.70,99.73 L715.82,99.15 L715.94,99.31 L716.06,98.97 L716.18,99.95 M716.18,160.49 L716.31,159.47 L716.43,156.17 L716.55,149.66 L716.67,145.51 L716.79,143.10 L716.91,143.33 L717.03,144.34 L717.15,146.78 L717.27,150.53 L717.39,150.88 L717.51,151.05 L717.63,150.04 L717.75,150.77 L717.87,149.75 L717.99,149.31 L718.11,149.27 L718.23,149.09 L718.35,148.80 L718.47,148.14 L718.59,147.54 L718.71,148.89 L718.83,148.41 L718.95,150.17 L719.07,150.26 L719.19,149.11 L719.31,149.83 L719.43,149.02 L719.55,148.21 L719.68,149.64 L719.80,149.54 L719.92,148.13 L720.04,149.77 L720.16,148.82 L720.28,148.13 L720.40,149.09 L720.52,148.17 L720.64,148.81 L720.76,149.23 L720.88,149.11 L721.00,148.71 L721.12,147.87 L721.24,148.75 L721.36,149.36 L721.48,149.45 L721.60,149.76 L721.72,149.35 L721.84,149.30 L721.96,148.72 L722.08,147.70 L722.20,148.49 L722.32,148.47 L722.44,148.49 L722.56,149.07 L722.68,149.29 L722.80,148.76 L722.92,149.40 L723.05,149.05 L723.17,149.31 L723.29,149.45 L723.41,149.61 L723.53,148.90 L723.65,148.76 L723.77,149.07 L723.89,149.58 L724.01,147.83 L724.13,149.34 L724.25,148.75 L724.37,149.34 L724.49,149.21 L724.61,148.82 M724.61,90.30 L724.73,90.00 L724.85,91.32 L724.97,93.79 L725.09,95.38 L725.21,98.01 L725.33,98.80 L725.45,99.02 L725.57,98.63 L725.69,98.44 L725.81,100.00 L725.93,100.77 L726.05,101.19 L726.17,101.56 L726.29,101.79 M726.30,162.53 L726.42,160.38 L726.54,156.05 L726.66,150.60 L726.78,146.60 L726.90,143.69 L727.02,143.16 L727.14,145.55 L727.26,147.69 L727.38,148.81 L727.50,150.37 L727.62,150.54 L727.74,150.33 L727.86,151.37 L727.98,149.70 L728.10,149.43 L728.22,148.94 L728.34,148.39 L728.46,146.77 L728.58,147.59 L728.70,147.78 L728.82,147.81 L728.94,149.05 L729.06,149.80 L729.18,150.36 L729.30,150.72 L729.42,149.26 L729.54,148.41 L729.66,148.15 L729.79,149.48 L729.91,148.73 L730.03,149.17 L730.15,149.54 L730.27,149.09 L730.39,148.94 L730.51,148.94 L730.63,147.94 L730.75,148.97 L730.87,149.52 L730.99,148.61 L731.11,148.38 L731.23,149.22 L731.35,148.69 M731.35,90.12 L731.47,90.43 L731.59,90.48 L731.71,93.56 L731.83,95.64 L731.95,98.48 L732.07,99.99 L732.19,99.08 L732.31,99.54 L732.43,98.73 L732.55,99.64 L732.67,100.89 L732.79,101.20 L732.91,102.38 L733.03,101.50 M733.04,162.54 L733.16,159.62 L733.28,155.12 L733.40,150.31 L733.52,145.25 L733.64,144.47 L733.76,143.56 L733.88,144.96 L734.00,147.38 L734.12,149.00 L734.24,150.85 L734.36,151.11 L734.48,150.53 L734.60,150.10 L734.72,150.06 L734.84,149.64 L734.96,149.10 L735.08,149.19 L735.20,148.28 L735.32,148.10 L735.44,148.62 L735.56,149.30 L735.68,149.03 L735.80,150.11 L735.92,149.08 L736.04,149.23 L736.16,149.39 L736.28,148.53 L736.40,148.20 L736.53,148.41 L736.65,149.24 L736.77,148.49 L736.89,149.44 L737.01,149.51 L737.13,147.89 L737.25,149.01 L737.37,149.24 L737.49,148.46 L737.61,149.43 L737.73,149.04 L737.85,149.39 L737.97,149.33 L738.09,149.05 L738.21,147.52 L738.33,149.23 L738.45,149.88 L738.57,148.58 L738.69,150.38 L738.81,148.83 L738.93,148.27 L739.05,148.27 L739.17,149.62 L739.29,149.28 L739.41,148.74 L739.53,148.85 L739.65,147.97 L739.77,148.47 L739.90,148.21 L740.02,148.99 L740.14,148.80 L740.26,149.45 L740.38,149.16 L740.50,149.00 L740.62,149.32 L740.74,149.67 L740.86,148.74 L740.98,149.01 L741.10,148.74 L741.22,148.59 L741.34,148.55 L741.46,148.75 M741.46,90.30 L741.58,89.78 L741.70,91.38 L741.82,93.34 L741.94,96.11 L742.06,98.43 L742.18,100.06 L742.30,99.12 L742.42,99.15 L742.54,99.52 L742.66,99.50 L742.78,101.16 L742.90,101.75 L743.02,101.67 L743.14,101.91 M743.14,162.53 L743.27,160.00 L743.39,155.76 L743.51,150.45 L743.63,146.17 L743.75,143.19 L743.87,143.63 L743.99,145.66 L744.11,147.65 L744.23,149.75 L744.35,150.52 L744.47,150.86 L744.59,149.68 L744.71,149.63 L744.83,148.78 L744.95,150.58 L745.07,150.15 L745.19,148.63 L745.31,147.91 L745.43,148.05 L745.55,147.43 L745.67,148.94 L745.79,150.13 L745.91,148.77 L746.03,149.44 L746.15,150.16 L746.27,149.86 L746.39,149.19 L746.51,148.84 M746.51,90.01 L746.64,90.16 L746.76,91.58 L746.88,93.42 L747.00,95.93 L747.12,97.76 L747.24,99.70 L747.36,98.21 L747.48,99.57 L747.60,98.60 L747.72,99.30 L747.84,99.85 L747.96,101.10 L748.08,101.83 L748.20,100.93 L748.32,100.42 L748.44,99.40 L748.56,99.73 L748.68,99.08 L748.80,100.21 L748.92,99.93 L749.04,99.32 L749.16,100.00 L749.28,99.71 L749.40,98.49 L749.52,99.49 L749.64,99.32 L749.76,99.89 L749.88,99.78 M749.88,160.61 L750.01,159.02 L750.13,154.68 L750.25,150.54 L750.37,145.13 L750.49,142.99 L750.61,143.26 L750.73,143.85 L750.85,147.65 L750.97,149.32 L751.09,150.56 L751.21,151.06 L751.33,150.36 L751.45,149.94 L751.57,149.33 L751.69,149.23 L751.81,149.36 L751.93,148.91 L752.05,148.03 L752.17,148.58 L752.29,148.64 L752.41,147.48 L752.53,148.76 L752.65,150.04 L752.77,148.76 L752.89,150.17 L753.01,149.27 L753.13,149.11 L753.25,149.03 M753.25,89.85 L753.38,90.71 L753.50,90.81 L753.62,94.04 L753.74,96.26 L753.86,98.36 L753.98,98.26 L754.10,98.63 L754.22,99.37 L754.34,99.81 L754.46,100.82 L754.58,100.13 L754.70,102.25 L754.82,101.54 L754.94,101.04 L755.06,100.22 L755.18,100.10 L755.30,100.16 L755.42,99.44 L755.54,100.44 L755.66,100.30 L755.78,99.56 L755.90,99.83 L756.02,98.48 L756.14,98.48 L756.26,98.80 L756.38,99.18 L756.50,98.98 L756.62,99.20 M756.62,160.61 L756.75,159.49 L756.87,154.99 L756.99,150.03 L757.11,145.45 L757.23,143.45 L757.35,143.52 L757.47,144.69 L757.59,147.73 L757.71,149.14 L757.83,150.68 L757.95,150.26 L758.07,150.07 L758.19,151.34 L758.31,149.22 L758.43,150.24 L758.55,149.64 L758.67,149.23 L758.79,147.47 L758.91,148.06 L759.03,147.14 L759.15,147.91 L759.27,148.58 L759.39,149.43 L759.51,150.77 L759.63,150.54 L759.75,148.39 L759.87,148.58 L759.99,148.17 M760.00,89.85 L760.12,90.15 L760.24,90.63 L760.36,93.02 L760.48,96.15 L760.60,97.68 L760.72,99.45 L760.84,98.93 L760.96,99.11 L761.08,99.05 L761.20,100.39 L761.32,101.50 L761.44,101.57 L761.56,101.44 L761.68,101.44 L761.80,100.43 L761.92,100.25 L762.04,99.67 L762.16,99.89 L762.28,100.53 L762.40,99.81 L762.52,99.31 L762.64,99.61 L762.76,98.82 L762.88,99.00 L763.00,99.22 L763.12,99.30 L763.24,99.09 L763.36,100.16 M763.37,160.61 L763.49,157.83 L763.61,154.54 L763.73,149.27 L763.85,146.42 L763.97,142.82 L764.09,142.83 L764.21,145.04 L764.33,147.93 L764.45,150.00 L764.57,150.65 L764.69,150.90 L764.81,149.80 L764.93,149.97 L765.05,149.50 M765.05,90.93 L765.17,89.97 L765.29,92.10 L765.41,93.57 L765.53,95.82 L765.65,97.24 L765.77,97.98 L765.89,98.49 L766.01,99.93 L766.13,99.97 L766.25,101.18 L766.37,101.57 L766.49,102.29 L766.61,101.91 L766.73,100.34 M766.74,162.08 L766.86,160.27 L766.98,156.61 L767.10,151.52 L767.22,146.35 L767.34,144.71 L767.46,143.95 L767.58,145.26 L767.70,146.88 L767.82,149.49 L767.94,150.74 L768.06,149.73 L768.18,150.13 L768.30,149.11 L768.42,148.56 L768.54,149.30 L768.66,149.42 L768.78,148.68 L768.90,147.56 L769.02,147.35 L769.14,148.38 L769.26,148.21 L769.38,149.03 L769.50,149.32 L769.62,149.82 L769.74,149.35 L769.86,149.00 L769.98,148.26 L770.10,148.73 M770.11,90.01 L770.23,90.13 L770.35,91.98 L770.47,94.79 L770.59,96.24 L770.71,96.71 L770.83,98.46 L770.95,99.83 L771.07,99.32 L771.19,99.19 L771.31,99.50 L771.43,101.12 L771.55,101.69 L771.67,102.16 L771.79,101.82 L771.91,101.20 L772.03,100.34 L772.15,99.12 L772.27,100.12 L772.39,99.56 L772.51,99.82 L772.63,99.52 L772.75,98.85 L772.87,98.56 L772.99,99.47 L773.11,98.79 L773.23,99.92 L773.35,99.45 L773.47,98.55 M773.48,160.61 L773.60,158.63 L773.72,155.72 L773.84,150.42 L773.96,145.39 L774.08,142.89 L774.20,143.53 L774.32,145.00 L774.44,147.24 L774.56,150.10 L774.68,150.72 L774.80,150.33 L774.92,149.61 L775.04,148.86 L775.16,150.78 L775.28,149.73 L775.40,150.33 L775.52,149.19 L775.64,148.54 L775.76,148.07 L775.88,147.97 L776.00,147.59 L776.12,148.93 L776.24,150.10 L776.36,150.97 L776.48,149.53 L776.60,149.45 L776.72,149.12 L776.84,149.29 M776.85,89.85 L776.97,90.34 L777.09,91.31 L777.21,94.59 L777.33,96.35 L777.45,98.11 L777.57,100.36 L777.69,98.37 L777.81,99.02 L777.93,98.78 L778.05,100.76 L778.17,100.50 L778.29,101.72 L778.41,101.89 L778.53,101.03 M778.53,162.36 L778.65,160.08 L778.77,155.55 L778.89,150.36 L779.01,146.01 L779.13,144.13 L779.25,143.64 L779.37,144.70 L779.49,147.08 L779.61,150.20 L779.73,149.66 L779.85,150.26 L779.97,150.02 L780.09,149.90 L780.21,149.99 L780.34,149.02 L780.46,149.19 L780.58,148.86 L780.70,148.96 L780.82,147.62 L780.94,147.62 L781.06,148.73 L781.18,148.98 L781.30,149.24 L781.42,149.60 L781.54,150.26 L781.66,148.44 L781.78,148.75 L781.90,149.54 M781.90,90.01 L782.02,90.41 L782.14,91.15 L782.26,93.43 L782.38,96.63 L782.50,98.23 L782.62,98.77 L782.74,98.87 L782.86,98.49 L782.98,98.70 L783.10,100.19 L783.22,101.13 L783.34,101.30 L783.46,101.97 L783.58,100.84 M783.59,162.35 L783.71,160.33 L783.83,154.81 L783.95,151.12 L784.07,147.31 L784.19,144.39 L784.31,143.70 L784.43,145.39 L784.55,147.33 L784.67,149.26 L784.79,150.27 L784.91,150.76 L785.03,150.12 L785.15,149.88 L785.27,149.38 M785.27,90.90 L785.39,91.14 L785.51,92.20 L785.63,93.54 L785.75,95.36 L785.87,97.56 L785.99,97.66 L786.11,99.76 L786.23,98.26 L786.35,100.13 L786.47,100.58 L786.59,101.44 L786.71,100.87 L786.83,102.09 L786.95,101.18 M786.95,162.24 L787.08,160.20 L787.20,156.43 L787.32,150.92 L787.44,146.50 L787.56,144.30 L787.68,143.51 L787.80,145.19 L787.92,147.12 L788.04,149.06 L788.16,150.51 L788.28,150.40 L788.40,150.42 L788.52,149.65 L788.64,149.16 L788.76,149.20 L788.88,148.46 L789.00,149.07 L789.12,148.57 L789.24,146.80 L789.36,147.93 L789.48,148.07 L789.60,149.19 L789.72,150.51 L789.84,149.57 L789.96,149.62 L790.08,148.92 L790.20,149.10 L790.32,149.06 L790.45,148.87 L790.57,148.98 L790.69,148.60 L790.81,149.15 L790.93,148.64 L791.05,148.77 L791.17,149.59 L791.29,148.91 L791.41,148.64 L791.53,148.64 L791.65,148.50 L791.77,148.89 L791.89,149.96 L792.01,148.71 M792.01,90.12 L792.13,90.13 L792.25,90.91 L792.37,93.36 L792.49,96.56 L792.61,98.59 L792.73,99.05 L792.85,98.90 L792.97,99.45 L793.09,100.30 L793.21,101.20 L793.33,101.40 L793.45,101.55 L793.57,102.10 L793.69,101.16 M793.69,162.54 L793.82,159.89 L793.94,155.47 L794.06,150.62 L794.18,146.62 L794.30,144.64 L794.42,144.40 L794.54,145.48 L794.66,146.31 L794.78,149.94 L794.90,150.45 L795.02,150.12 L795.14,150.80 L795.26,149.40 L795.38,149.47 L795.50,149.45 L795.62,149.14 L795.74,148.65 L795.86,147.16 L795.98,147.14 L796.10,147.83 L796.22,148.71 L796.34,149.00 L796.46,149.01 L796.58,149.18 L796.70,149.03 L796.82,149.75 L796.94,148.37 L797.06,149.09 L797.19,148.24 L797.31,148.53 L797.43,148.87 L797.55,149.80 L797.67,148.67 L797.79,148.76 L797.91,148.50 L798.03,148.63 L798.15,149.54 L798.27,148.90 L798.39,149.12 L798.51,148.52 L798.63,148.60 L798.75,148.87 L798.87,149.53 L798.99,149.80 L799.11,148.44 L799.23,149.02 L799.35,148.21 L799.47,148.87 L799.59,148.96 L799.71,149.20 L799.83,149.16 L799.95,148.50 L800.07,148.47 L800.19,148.39 L800.31,149.88 L800.43,148.38 M800.43,90.30 L800.56,90.82 L800.68,91.54 L800.80,93.95 L800.92,95.20 L801.04,98.29 L801.16,99.40 L801.28,99.39 L801.40,99.42 L801.52,98.65 L801.64,100.46 L801.76,100.13 L801.88,101.35 L802.00,102.10 L802.12,101.57 L802.24,101.36 L802.37,99.91 L802.49,99.08 L802.61,99.90 L802.73,100.24 L802.85,99.32 L802.97,100.39 L803.09,100.10 L803.21,98.60 L803.33,99.19 L803.45,98.81 L803.57,99.52 L803.69,99.04 L803.81,99.82 L803.93,99.62 L804.05,99.10 L804.18,98.73 L804.30,98.82 L804.42,99.42 L804.54,100.03 L804.66,99.40 L804.78,99.91 L804.90,99.40 L805.02,100.15 L805.14,99.73 L805.26,99.58 L805.38,99.54 L805.50,99.19 L805.62,98.70 L805.74,99.83 L805.86,98.95 L805.99,98.89 L806.11,99.73 L806.23,99.42 L806.35,98.83 L806.47,99.99 L806.59,99.24 L806.71,99.81 L806.83,98.70 L806.95,98.48 L807.07,98.94 L807.19,99.69 L807.31,98.35 L807.43,98.82 L807.55,99.81 L807.67,100.52 L807.80,99.13 L807.92,98.78 L808.04,99.05 L808.16,98.94 L808.28,100.10 L808.40,99.70 L808.52,98.86 L808.64,99.72 L808.76,98.22 L808.88,99.32 L809.00,99.31 L809.12,99.19 L809.24,98.83 L809.36,98.99 L809.48,98.37 L809.61,99.53 L809.73,98.81 L809.85,99.59 L809.97,99.72 L810.09,98.96 L810.21,98.70 L810.33,99.33 L810.45,99.64 L810.57,98.64 L810.69,99.27 L810.81,98.79 L810.93,100.03 L811.05,99.49 L811.17,98.49 L811.29,99.02 L811.41,99.33 L811.54,99.05 L811.66,99.34 L811.78,99.50 L811.90,99.40 L812.02,99.09 L812.14,100.01 L812.26,99.74 L812.38,99.15 L812.50,99.23 L812.62,98.97 L812.74,98.59 L812.86,99.13 L812.98,99.32 L813.10,99.11 L813.22,98.82 L813.35,97.77 L813.47,98.41 L813.59,99.71 L813.71,98.37 L813.83,99.58 L813.95,99.66 L814.07,99.25 L814.19,99.29 L814.31,99.70 L814.43,99.27 L814.55,99.27 L814.67,99.73 L814.79,99.27 L814.91,100.29 L815.03,98.74 L815.16,99.09 L815.28,99.16 L815.40,99.38 L815.52,98.96 L815.64,100.25 L815.76,99.62 L815.88,98.37 L816.00,99.29" fill="none" stroke="#f6f748" stroke-width="1.5" stroke-linecap="round" stroke-linejoin="round"/>
<line x1="510.70" y1="70.50" x2="510.70" y2="184.50" stroke="#ffffff" stroke-width="0.6" opacity="0.10"/>
<line x1="544.40" y1="70.50" x2="544.40" y2="184.50" stroke="#ffffff" stroke-width="0.6" opacity="0.10"/>
<line x1="578.10" y1="70.50" x2="578.10" y2="184.50" stroke="#ffffff" stroke-width="0.6" opacity="0.10"/>
<line x1="611.80" y1="70.50" x2="611.80" y2="184.50" stroke="#ffffff" stroke-width="0.6" opacity="0.10"/>
<line x1="645.50" y1="70.50" x2="645.50" y2="184.50" stroke="#ffffff" stroke-width="0.6" opacity="0.10"/>
<line x1="679.20" y1="70.50" x2="679.20" y2="184.50" stroke="#ffffff" stroke-width="0.6" opacity="0.10"/>
<line x1="712.90" y1="70.50" x2="712.90" y2="184.50" stroke="#ffffff" stroke-width="0.6" opacity="0.10"/>
<line x1="746.60" y1="70.50" x2="746.60" y2="184.50" stroke="#ffffff" stroke-width="0.6" opacity="0.10"/>
<line x1="780.30" y1="70.50" x2="780.30" y2="184.50" stroke="#ffffff" stroke-width="0.6" opacity="0.10"/>
<line x1="477.00" y1="84.75" x2="814.00" y2="84.75" stroke="#ffffff" stroke-width="0.6" opacity="0.10"/>
<line x1="477.00" y1="99.00" x2="814.00" y2="99.00" stroke="#ffffff" stroke-width="0.6" opacity="0.10"/>
<line x1="477.00" y1="113.25" x2="814.00" y2="113.25" stroke="#ffffff" stroke-width="0.6" opacity="0.10"/>
<line x1="477.00" y1="127.50" x2="814.00" y2="127.50" stroke="#ffffff" stroke-width="0.6" opacity="0.10"/>
<line x1="477.00" y1="141.75" x2="814.00" y2="141.75" stroke="#ffffff" stroke-width="0.6" opacity="0.10"/>
<line x1="477.00" y1="156.00" x2="814.00" y2="156.00" stroke="#ffffff" stroke-width="0.6" opacity="0.10"/>
<line x1="477.00" y1="170.25" x2="814.00" y2="170.25" stroke="#ffffff" stroke-width="0.6" opacity="0.10"/>
<line x1="477.00" y1="113.60" x2="814.00" y2="113.60" stroke="#d8d8e8" stroke-width="0.8" stroke-dasharray="0.9 1.5" opacity="0.8"/>
<line x1="477.00" y1="133.70" x2="814.00" y2="133.70" stroke="#78b0e0" stroke-width="0.8" stroke-dasharray="0.9 1.2" opacity="0.85"/>
<line x1="477.00" y1="127.90" x2="814.00" y2="127.90" stroke="#b06080" stroke-width="0.6" opacity="0.55"/>
<text x="504.30" y="81.70" font-size="5.85" fill="#eef2f8" stroke="#eef2f8" stroke-width="0.13" text-anchor="middle" font-weight="normal" >6</text>
<text x="523.00" y="81.70" font-size="5.85" fill="#eef2f8" stroke="#eef2f8" stroke-width="0.13" text-anchor="middle" font-weight="normal" >0x729</text>
<text x="540.60" y="81.70" font-size="5.85" fill="#eef2f8" stroke="#eef2f8" stroke-width="0.13" text-anchor="middle" font-weight="normal" >6</text>
<text x="564.35" y="81.70" font-size="5.85" fill="#eef2f8" stroke="#eef2f8" stroke-width="0.13" text-anchor="middle" font-weight="normal" >D = 0x6d6f</text>
<text x="598.15" y="81.70" font-size="5.85" fill="#eef2f8" stroke="#eef2f8" stroke-width="0.13" text-anchor="middle" font-weight="normal" >D = 0x0001</text>
<text x="631.75" y="81.70" font-size="5.85" fill="#eef2f8" stroke="#eef2f8" stroke-width="0.13" text-anchor="middle" font-weight="normal" >D = 0x0203</text>
<text x="665.50" y="81.70" font-size="5.85" fill="#eef2f8" stroke="#eef2f8" stroke-width="0.13" text-anchor="middle" font-weight="normal" >D = 0x0405</text>
<text x="699.35" y="81.70" font-size="5.85" fill="#eef2f8" stroke="#eef2f8" stroke-width="0.13" text-anchor="middle" font-weight="normal" >D = 0x0607</text>
<text x="733.25" y="81.70" font-size="5.85" fill="#eef2f8" stroke="#eef2f8" stroke-width="0.13" text-anchor="middle" font-weight="normal" >D = 0x0809</text>
<text x="774.80" y="81.70" font-size="5.85" fill="#eef2f8" stroke="#eef2f8" stroke-width="0.13" text-anchor="middle" font-weight="normal" >CRC = 0x666488</text>
<text x="645.30" y="75.60" font-size="5.7" fill="#eef2f8" stroke="#eef2f8" stroke-width="0.13" text-anchor="middle" font-weight="normal" >DS = 0x45, Cycle Count = 6</text>
<rect x="625.30" y="125.90" width="39.70" height="6.10" fill="#f7f35e" rx="0.6"/>
<text x="645.20" y="131.00" font-size="5.7" fill="#8c8c2c" stroke="#8c8c2c" stroke-width="0.13" text-anchor="middle" font-weight="normal" >-18.330 2 ms</text>
</g>
<line x1="645.50" y1="70.50" x2="645.50" y2="184.50" stroke="#d8d8d8" stroke-width="0.8" stroke-dasharray="0.8 1.3" opacity="0.9"/>
<line x1="477.00" y1="127.50" x2="814.00" y2="127.50" stroke="#b0b0b0" stroke-width="0.7" stroke-dasharray="0.7 6" opacity="0.55"/>
<line x1="477.00" y1="91.85" x2="814.00" y2="91.85" stroke="#999" stroke-width="0.6" stroke-dasharray="0.7 6" opacity="0.35"/>
<line x1="477.00" y1="163.10" x2="814.00" y2="163.10" stroke="#999" stroke-width="0.6" stroke-dasharray="0.7 6" opacity="0.35"/>
<text x="475.00" y="76.60" font-size="5.9" fill="#ecec20" stroke="#ecec20" stroke-width="0.13" text-anchor="end" font-weight="normal" >2.939 V</text>
<text x="475.00" y="101.60" font-size="5.9" fill="#ecec20" stroke="#ecec20" stroke-width="0.13" text-anchor="end" font-weight="normal" >940 mV</text>
<text x="475.00" y="130.20" font-size="5.9" fill="#ecec20" stroke="#ecec20" stroke-width="0.13" text-anchor="end" font-weight="normal" >-1.06 V</text>
<text x="475.00" y="159.00" font-size="5.9" fill="#ecec20" stroke="#ecec20" stroke-width="0.13" text-anchor="end" font-weight="normal" >-3.06 V</text>
<text x="475.00" y="184.00" font-size="5.9" fill="#ecec20" stroke="#ecec20" stroke-width="0.13" text-anchor="end" font-weight="normal" >-5.06 V</text>
<text x="477.00" y="191.60" font-size="5.9" fill="#ecec20" stroke="#ecec20" stroke-width="0.13" text-anchor="start" font-weight="normal" >Δ10 µs</text>
<text x="544.40" y="191.60" font-size="5.9" fill="#ecec20" stroke="#ecec20" stroke-width="0.13" text-anchor="middle" font-weight="normal" >Δ6 µs</text>
<text x="611.80" y="191.60" font-size="5.9" fill="#ecec20" stroke="#ecec20" stroke-width="0.13" text-anchor="middle" font-weight="normal" >Δ2 µs</text>
<text x="679.20" y="191.60" font-size="5.9" fill="#ecec20" stroke="#ecec20" stroke-width="0.13" text-anchor="middle" font-weight="normal" >Δ2 µs</text>
<text x="746.60" y="191.60" font-size="5.9" fill="#ecec20" stroke="#ecec20" stroke-width="0.13" text-anchor="middle" font-weight="normal" >Δ6 µs</text>
<text x="797.00" y="191.60" font-size="5.9" fill="#ecec20" stroke="#ecec20" stroke-width="0.13" text-anchor="start" font-weight="normal" >Δ10 µs</text>
<rect x="469.60" y="107.30" width="6.90" height="5.80" fill="#f4f034" rx="0.8"/>
<text x="473.00" y="111.80" font-size="3.4" fill="#333" stroke="#333" stroke-width="0.13" text-anchor="middle" font-weight="normal" >Z1</text>
<g clip-path="url(#g3)">
<g filter="url(#rough)">
<path d="M100.0,284.6 Q103.0,284.6 104.5,284.6 Q106.0,284.6 107.5,284.6 Q109.0,284.6 110.5,284.6 Q112.0,284.6 113.5,284.6 Q115.0,284.6 116.5,284.5 Q118.0,284.5 119.5,284.5 Q121.0,284.5 122.5,284.5 Q124.0,284.5 125.5,284.5 Q127.0,284.5 128.5,284.5 Q130.0,284.5 131.5,284.4 Q133.0,284.4 134.5,284.4 Q136.0,284.4 137.5,284.4 Q139.0,284.4 140.5,284.4 Q142.0,284.4 143.5,284.4 Q145.0,284.3 146.5,284.3 Q148.0,284.3 149.5,284.3 Q151.0,284.3 152.5,284.3 Q154.0,284.3 155.5,284.3 Q157.0,284.3 158.5,284.3 Q160.0,284.3 161.5,284.3 Q163.0,284.3 164.5,284.3 Q166.0,284.3 167.5,284.3 Q169.0,284.3 170.5,284.3 Q172.0,284.3 173.5,284.3 Q175.0,284.3 176.5,284.3 Q178.0,284.4 179.5,284.4 Q181.0,284.4 182.5,284.4 Q184.0,284.4 185.5,284.4 Q187.0,284.4 188.5,284.4 Q190.0,284.4 191.5,284.4 Q193.0,284.4 194.5,284.4 Q196.0,284.4 197.5,284.5 Q199.0,284.5 200.5,284.5 Q202.0,284.5 203.5,284.5 Q205.0,284.5 206.5,284.5 Q208.0,284.5 209.5,284.5 Q211.0,284.5 212.5,284.5 Q214.0,284.5 215.5,284.5 Q217.0,284.5 218.5,284.5 Q220.0,284.5 221.5,284.5 Q223.0,284.5 224.5,284.4 Q226.0,284.4 227.5,284.4 Q229.0,284.4 230.5,284.4 Q232.0,284.3 233.5,284.3 Q235.0,284.3 236.5,284.3 Q238.0,284.2 239.5,284.2 Q241.0,284.2 242.5,284.2 Q244.0,284.1 245.5,284.1 Q247.0,284.1 248.5,284.1 Q250.0,284.1 251.5,284.0 Q253.0,284.0 254.5,284.0 Q256.0,284.0 257.5,284.0 Q259.0,284.0 260.5,284.0 Q262.0,284.0 263.5,284.0 Q265.0,284.0 266.5,284.0 Q268.0,284.1 269.5,284.1 Q271.0,284.1 272.5,284.1 Q274.0,284.2 275.5,284.2 Q277.0,284.2 278.5,284.3 Q280.0,284.3 281.5,284.3 Q283.0,284.4 284.5,284.4 Q286.0,284.4 287.5,284.5 Q289.0,284.5 290.5,284.5 Q292.0,284.5 293.5,284.6 Q295.0,284.6 296.5,284.6 Q298.0,284.6 299.5,284.6 Q301.0,284.6 302.5,284.6 Q304.0,284.6 305.5,284.6 Q307.0,284.6 308.5,284.6 Q310.0,284.6 311.5,284.7 Q313.0,284.7 314.5,284.7 Q316.0,284.7 317.5,284.7 Q319.0,284.7 320.5,284.8 Q322.0,284.8 323.5,284.8 Q325.0,284.8 326.5,284.8 Q328.0,284.8 329.5,284.8 Q331.0,284.9 332.5,284.9 Q334.0,284.9 335.5,284.9 Q337.0,284.9 338.5,284.9 Q340.0,284.9 341.5,284.9 Q343.0,284.9 344.5,284.9 Q346.0,284.9 347.5,284.8 Q349.0,284.8 350.5,284.8 Q352.0,284.8 353.5,284.7 Q355.0,284.7 356.5,284.7 Q358.0,284.6 359.5,284.6 Q361.0,284.6 362.5,284.5 Q364.0,284.5 365.5,284.5 Q367.0,284.4 368.5,284.4 Q370.0,284.4 371.5,284.4 Q373.0,284.3 374.5,284.3 Q376.0,284.3 377.5,284.3 Q379.0,284.3 380.5,284.3 Q382.0,284.3 383.5,284.3 Q385.0,284.3 386.5,284.3 Q388.0,284.3 389.5,284.3 Q391.0,284.3 392.5,284.3 Q394.0,284.3 395.5,284.3 Q397.0,284.3 398.5,284.3 Q400.0,284.3 401.5,284.3 Q403.0,284.3 404.5,284.3 Q406.0,284.3 407.5,284.3 Q409.0,284.4 410.5,284.4 Q412.0,284.4 413.5,284.4 Q415.0,284.4 416.5,284.4 Q418.0,284.4 419.5,284.4 Q421.0,284.4 422.5,284.4 Q424.0,284.4 425.5,284.4 Q427.0,284.4 428.5,284.4 Q430.0,284.4 431.5,284.4 Q433.0,284.4 434.5,284.4 L436.0,284.4" fill="none" stroke="#9a1fe8" stroke-width="11.6" opacity="0.95" stroke-linecap="round" stroke-linejoin="round"/>
<path d="M100.0,235.3 Q103.0,235.3 104.5,235.4 Q106.0,235.4 107.5,235.5 Q109.0,235.6 110.5,235.6 Q112.0,235.6 113.5,235.6 Q115.0,235.5 116.5,235.4 Q118.0,235.3 119.5,235.2 Q121.0,235.1 122.5,235.0 Q124.0,235.0 125.5,234.9 L127.0,234.8" fill="none" stroke="#9a1fe8" stroke-width="10.8" opacity="0.95" stroke-linecap="round" stroke-linejoin="round"/>
<path d="M205.0,235.1 Q208.0,235.5 209.5,235.7 Q211.0,235.9 212.5,236.0 Q214.0,236.1 215.5,236.2 Q217.0,236.2 218.5,236.2 Q220.0,236.1 221.5,236.1 Q223.0,236.0 224.5,236.0 Q226.0,235.9 227.5,235.8 Q229.0,235.8 230.5,235.7 Q232.0,235.7 233.5,235.6 Q235.0,235.6 236.5,235.6 Q238.0,235.5 239.5,235.4 Q241.0,235.3 242.5,235.2 Q244.0,235.0 245.5,234.8 Q247.0,234.7 248.5,234.6 Q250.0,234.5 251.5,234.4 Q253.0,234.4 254.5,234.4 Q256.0,234.4 257.5,234.4 Q259.0,234.4 260.5,234.3 Q262.0,234.3 263.5,234.3 Q265.0,234.3 266.5,234.3 Q268.0,234.2 269.5,234.2 Q271.0,234.2 272.5,234.2 Q274.0,234.2 275.5,234.2 Q277.0,234.2 278.5,234.3 Q280.0,234.3 281.5,234.4 Q283.0,234.4 284.5,234.4 Q286.0,234.5 287.5,234.5 Q289.0,234.6 290.5,234.6 Q292.0,234.6 293.5,234.6 Q295.0,234.6 296.5,234.7 Q298.0,234.7 299.5,234.8 Q301.0,234.8 302.5,234.9 Q304.0,234.9 305.5,235.0 Q307.0,235.1 308.5,235.1 Q310.0,235.1 311.5,235.2 Q313.0,235.2 314.5,235.2 Q316.0,235.2 317.5,235.2 Q319.0,235.1 320.5,235.1 Q322.0,235.0 323.5,235.0 Q325.0,234.9 326.5,234.8 Q328.0,234.8 329.5,234.7 Q331.0,234.7 332.5,234.6 Q334.0,234.6 335.5,234.6 Q337.0,234.6 338.5,234.6 Q340.0,234.5 341.5,234.4 Q343.0,234.4 344.5,234.3 Q346.0,234.1 347.5,234.0 Q349.0,233.9 350.5,233.8 Q352.0,233.7 353.5,233.6 Q355.0,233.5 356.5,233.5 Q358.0,233.4 359.5,233.4 Q361.0,233.4 362.5,233.4 Q364.0,233.4 365.5,233.4 Q367.0,233.4 368.5,233.4 Q370.0,233.3 371.5,233.3 Q373.0,233.3 374.5,233.3 Q376.0,233.3 377.5,233.3 Q379.0,233.2 380.5,233.2 Q382.0,233.2 383.5,233.2 Q385.0,233.2 386.5,233.2 Q388.0,233.2 389.5,233.4 Q391.0,233.6 392.5,233.9 Q394.0,234.3 395.5,234.6 L397.0,234.9" fill="none" stroke="#9a1fe8" stroke-width="10.8" opacity="0.95" stroke-linecap="round" stroke-linejoin="round"/>
<path d="M127.0,234.8 Q130.0,234.8 131.5,234.8 Q133.0,234.8 134.5,234.8 Q136.0,234.8 137.5,234.8 Q139.0,234.8 140.5,234.8 Q142.0,234.8 143.5,234.8 Q145.0,234.8 146.5,234.8 Q148.0,234.8 149.5,234.8 Q151.0,234.8 152.5,234.8 Q154.0,234.8 155.5,234.8 Q157.0,234.8 158.5,234.8 Q160.0,234.8 161.5,234.8 Q163.0,234.8 164.5,234.8 Q166.0,234.8 167.5,234.8 Q169.0,234.8 170.5,234.8 Q172.0,234.8 173.5,234.8 Q175.0,234.8 176.5,234.8 Q178.0,234.8 179.5,234.8 Q181.0,234.8 182.5,234.8 Q184.0,234.8 185.5,234.8 Q187.0,234.8 188.5,234.8 Q190.0,234.8 191.5,234.8 Q193.0,234.8 194.5,234.8 Q196.0,234.8 197.5,234.8 Q199.0,234.8 200.5,234.8 Q202.0,234.9 203.5,235.0 L205.0,235.1" fill="none" stroke="#9a1fe8" stroke-width="9.0" opacity="0.95" stroke-linecap="round" stroke-linejoin="round"/>
<path d="M397.0,234.9 Q400.0,234.9 401.5,234.9 Q403.0,234.9 404.5,234.9 Q406.0,234.9 407.5,234.9 Q409.0,234.9 410.5,234.9 Q412.0,234.9 413.5,234.9 Q415.0,234.9 416.5,234.9 Q418.0,234.9 419.5,234.9 Q421.0,234.9 422.5,234.9 Q424.0,234.9 425.5,234.9 Q427.0,234.9 428.5,234.9 Q430.0,234.9 431.5,234.9 Q433.0,234.9 434.5,234.9 L436.0,234.9" fill="none" stroke="#9a1fe8" stroke-width="9.0" opacity="0.95" stroke-linecap="round" stroke-linejoin="round"/>
<path d="M202.0,234.9 Q205.0,235.1 206.5,235.3 Q208.0,235.5 209.5,235.7 Q211.0,235.9 212.5,236.0 Q214.0,236.1 215.5,236.2 Q217.0,236.2 218.5,236.2 Q220.0,236.1 221.5,236.1 Q223.0,236.0 224.5,236.0 Q226.0,235.9 227.5,235.8 Q229.0,235.8 230.5,235.7 Q232.0,235.7 233.5,235.6 Q235.0,235.6 236.5,235.6 Q238.0,235.5 239.5,235.4 Q241.0,235.3 242.5,235.2 Q244.0,235.0 245.5,234.8 Q247.0,234.7 248.5,234.6 Q250.0,234.5 251.5,234.4 Q253.0,234.4 254.5,234.4 Q256.0,234.4 257.5,234.4 Q259.0,234.4 260.5,234.3 Q262.0,234.3 263.5,234.3 Q265.0,234.3 266.5,234.3 Q268.0,234.2 269.5,234.2 Q271.0,234.2 272.5,234.2 Q274.0,234.2 275.5,234.2 Q277.0,234.2 278.5,234.3 Q280.0,234.3 281.5,234.4 Q283.0,234.4 284.5,234.4 Q286.0,234.5 287.5,234.5 Q289.0,234.6 290.5,234.6 Q292.0,234.6 293.5,234.6 Q295.0,234.6 296.5,234.7 Q298.0,234.7 299.5,234.8 Q301.0,234.8 302.5,234.9 Q304.0,234.9 305.5,235.0 Q307.0,235.1 308.5,235.1 Q310.0,235.1 311.5,235.2 Q313.0,235.2 314.5,235.2 Q316.0,235.2 317.5,235.2 Q319.0,235.1 320.5,235.1 Q322.0,235.0 323.5,235.0 Q325.0,234.9 326.5,234.8 Q328.0,234.8 329.5,234.7 Q331.0,234.7 332.5,234.6 Q334.0,234.6 335.5,234.6 Q337.0,234.6 338.5,234.6 Q340.0,234.5 341.5,234.4 Q343.0,234.4 344.5,234.3 Q346.0,234.1 347.5,234.0 Q349.0,233.9 350.5,233.8 Q352.0,233.7 353.5,233.6 Q355.0,233.5 356.5,233.5 Q358.0,233.4 359.5,233.4 Q361.0,233.4 362.5,233.4 Q364.0,233.4 365.5,233.4 Q367.0,233.4 368.5,233.4 Q370.0,233.3 371.5,233.3 Q373.0,233.3 374.5,233.3 Q376.0,233.3 377.5,233.3 Q379.0,233.2 380.5,233.2 Q382.0,233.2 383.5,233.2 Q385.0,233.2 386.5,233.2 Q388.0,233.2 389.5,233.4 Q391.0,233.6 392.5,233.9 L394.0,234.3" fill="none" stroke="#9a1fe8" stroke-width="13.4" opacity="0.9" stroke-linecap="round" stroke-linejoin="round"/>
<path d="M202.0,284.5 Q205.0,284.5 206.5,284.5 Q208.0,284.5 209.5,284.5 Q211.0,284.5 212.5,284.5 Q214.0,284.5 215.5,284.5 Q217.0,284.5 218.5,284.5 Q220.0,284.5 221.5,284.5 Q223.0,284.5 224.5,284.4 Q226.0,284.4 227.5,284.4 Q229.0,284.4 230.5,284.4 Q232.0,284.3 233.5,284.3 Q235.0,284.3 236.5,284.3 Q238.0,284.2 239.5,284.2 Q241.0,284.2 242.5,284.2 Q244.0,284.1 245.5,284.1 Q247.0,284.1 248.5,284.1 Q250.0,284.1 251.5,284.0 Q253.0,284.0 254.5,284.0 Q256.0,284.0 257.5,284.0 Q259.0,284.0 260.5,284.0 Q262.0,284.0 263.5,284.0 Q265.0,284.0 266.5,284.0 Q268.0,284.1 269.5,284.1 Q271.0,284.1 272.5,284.1 Q274.0,284.2 275.5,284.2 Q277.0,284.2 278.5,284.3 Q280.0,284.3 281.5,284.3 Q283.0,284.4 284.5,284.4 Q286.0,284.4 287.5,284.5 Q289.0,284.5 290.5,284.5 Q292.0,284.5 293.5,284.6 Q295.0,284.6 296.5,284.6 Q298.0,284.6 299.5,284.6 Q301.0,284.6 302.5,284.6 Q304.0,284.6 305.5,284.6 Q307.0,284.6 308.5,284.6 Q310.0,284.6 311.5,284.7 Q313.0,284.7 314.5,284.7 Q316.0,284.7 317.5,284.7 Q319.0,284.7 320.5,284.8 Q322.0,284.8 323.5,284.8 Q325.0,284.8 326.5,284.8 Q328.0,284.8 329.5,284.8 Q331.0,284.9 332.5,284.9 Q334.0,284.9 335.5,284.9 Q337.0,284.9 338.5,284.9 Q340.0,284.9 341.5,284.9 Q343.0,284.9 344.5,284.9 Q346.0,284.9 347.5,284.8 Q349.0,284.8 350.5,284.8 Q352.0,284.8 353.5,284.7 Q355.0,284.7 356.5,284.7 Q358.0,284.6 359.5,284.6 Q361.0,284.6 362.5,284.5 Q364.0,284.5 365.5,284.5 Q367.0,284.4 368.5,284.4 Q370.0,284.4 371.5,284.4 Q373.0,284.3 374.5,284.3 Q376.0,284.3 377.5,284.3 Q379.0,284.3 380.5,284.3 Q382.0,284.3 383.5,284.3 Q385.0,284.3 386.5,284.3 L388.0,284.3" fill="none" stroke="#9a1fe8" stroke-width="13.6" opacity="0.9" stroke-linecap="round" stroke-linejoin="round"/>
<path d="M117.0,284.2 Q123.0,280.0 126.5,273.0 Q130.0,266.0 133.0,259.0 Q136.0,252.0 138.5,249.0 Q141.0,246.0 144.0,244.6 Q147.0,243.2 149.5,240.6 Q152.0,238.0 154.5,234.0 Q157.0,230.0 160.0,227.0 Q163.0,224.0 166.0,222.9 Q169.0,221.8 172.0,222.4 Q175.0,223.0 178.5,225.0 Q182.0,227.0 186.0,229.0 Q190.0,231.0 195.0,232.2 Q200.0,233.5 205.0,234.1 L210.0,234.6" fill="none" stroke="#9a1fe8" stroke-width="8.2" opacity="0.92" stroke-linecap="round" stroke-linejoin="round"/>
<path d="M157.0,284.2 Q163.0,279.0 166.0,272.5 Q169.0,266.0 172.5,258.0 Q176.0,250.0 179.5,243.2 Q183.0,236.5 186.0,232.0 Q189.0,227.5 192.5,224.8 Q196.0,222.0 199.5,221.1 Q203.0,220.2 206.5,220.8 Q210.0,221.5 213.5,223.5 Q217.0,225.5 221.0,228.0 Q225.0,230.5 229.5,232.2 Q234.0,233.8 239.0,234.2 L244.0,234.6" fill="none" stroke="#9a1fe8" stroke-width="8.2" opacity="0.92" stroke-linecap="round" stroke-linejoin="round"/>
<path d="M386.6,284.2 Q392.6,280.0 396.1,273.0 Q399.6,266.0 402.6,259.0 Q405.6,252.0 408.1,249.0 Q410.6,246.0 413.6,244.6 Q416.6,243.2 419.1,240.6 Q421.6,238.0 424.1,234.0 Q426.6,230.0 429.6,227.0 Q432.6,224.0 435.6,222.9 Q438.6,221.8 441.6,222.4 Q444.6,223.0 448.1,225.0 Q451.6,227.0 455.6,229.0 Q459.6,231.0 464.6,232.2 Q469.6,233.5 474.6,234.1 L479.6,234.6" fill="none" stroke="#9a1fe8" stroke-width="8.2" opacity="0.92" stroke-linecap="round" stroke-linejoin="round"/>
<path d="M426.6,284.2 Q432.6,279.0 435.6,272.5 Q438.6,266.0 442.1,258.0 Q445.6,250.0 449.1,243.2 Q452.6,236.5 455.6,232.0 Q458.6,227.5 462.1,224.8 Q465.6,222.0 469.1,221.1 Q472.6,220.2 476.1,220.8 Q479.6,221.5 483.1,223.5 Q486.6,225.5 490.6,228.0 Q494.6,230.5 499.1,232.2 Q503.6,233.8 508.6,234.2 L513.6,234.6" fill="none" stroke="#9a1fe8" stroke-width="8.2" opacity="0.92" stroke-linecap="round" stroke-linejoin="round"/>
<path d="M125.0,234.6 Q129.0,238.0 131.0,242.0 Q133.0,246.0 135.0,250.0 Q137.0,254.0 139.5,259.0 Q142.0,264.0 145.0,269.0 Q148.0,274.0 151.0,278.2 Q154.0,282.5 157.0,286.5 Q160.0,290.5 163.5,294.2 Q167.0,298.0 170.5,299.8 Q174.0,301.6 177.5,300.8 Q181.0,300.0 185.0,297.2 Q189.0,294.5 193.0,292.0 Q197.0,289.5 201.5,287.6 Q206.0,285.8 210.5,285.0 L215.0,284.2" fill="none" stroke="#9a1fe8" stroke-width="6.6" opacity="0.92" stroke-linecap="round" stroke-linejoin="round"/>
<path d="M394.6,234.6 Q398.6,238.0 400.6,242.0 Q402.6,246.0 404.6,250.0 Q406.6,254.0 409.1,259.0 Q411.6,264.0 414.6,269.0 Q417.6,274.0 420.6,278.2 Q423.6,282.5 426.6,286.5 Q429.6,290.5 433.1,294.2 Q436.6,298.0 440.1,299.8 Q443.6,301.6 447.1,300.8 Q450.6,300.0 454.6,297.2 Q458.6,294.5 462.6,292.0 Q466.6,289.5 471.1,287.6 Q475.6,285.8 480.1,285.0 L484.6,284.2" fill="none" stroke="#9a1fe8" stroke-width="6.6" opacity="0.92" stroke-linecap="round" stroke-linejoin="round"/>
<path d="M198.0,234.6 Q206.0,237.6 210.5,238.2 Q215.0,238.8 220.0,238.6 Q225.0,238.4 230.5,237.5 Q236.0,236.6 242.0,235.9 L248.0,235.2" fill="none" stroke="#9a1fe8" stroke-width="6.5" opacity="0.9" stroke-linecap="round" stroke-linejoin="round"/>
<path d="M200.0,284.2 Q208.0,281.0 211.0,279.9 Q214.0,278.8 217.5,278.6 Q221.0,278.3 224.5,279.1 Q228.0,280.0 232.0,281.5 Q236.0,283.0 240.0,283.6 L244.0,284.2" fill="none" stroke="#9a1fe8" stroke-width="6.5" opacity="0.9" stroke-linecap="round" stroke-linejoin="round"/>
<path d="M288.0,284.2 Q295.0,281.6 298.5,280.9 Q302.0,280.2 306.0,281.0 Q310.0,281.8 314.0,283.0 L318.0,284.2" fill="none" stroke="#9a1fe8" stroke-width="6.5" opacity="0.9" stroke-linecap="round" stroke-linejoin="round"/>
<path d="M274.0,234.6 Q282.0,231.2 287.0,230.5 Q292.0,229.8 297.0,230.7 Q302.0,231.6 307.0,233.1 L312.0,234.6" fill="none" stroke="#9a1fe8" stroke-width="6.5" opacity="0.9" stroke-linecap="round" stroke-linejoin="round"/>
<path d="M318.0,234.6 Q327.0,237.2 331.5,237.7 Q336.0,238.2 341.0,237.5 Q346.0,236.8 351.0,235.4 L356.0,234.0" fill="none" stroke="#9a1fe8" stroke-width="6.5" opacity="0.9" stroke-linecap="round" stroke-linejoin="round"/>
<path d="M163.0,229.6 Q172.0,228.2 177.5,228.0 Q183.0,227.8 188.5,228.2 Q194.0,228.6 198.5,230.2 Q203.0,231.8 207.0,233.2 L211.0,234.6" fill="none" stroke="#9a1fe8" stroke-width="6.5" opacity="0.9" stroke-linecap="round" stroke-linejoin="round"/>
<path d="M246.0,284.2 Q254.0,287.6 258.0,288.3 Q262.0,289.0 266.0,288.4 Q270.0,287.8 274.5,286.0 L279.0,284.2" fill="none" stroke="#9a1fe8" stroke-width="6.5" opacity="0.9" stroke-linecap="round" stroke-linejoin="round"/>
</g>
<g filter="url(#b2)">
<path d="M117.0,284.2 Q123.0,280.0 126.5,273.0 Q130.0,266.0 133.0,259.0 Q136.0,252.0 138.5,249.0 Q141.0,246.0 144.0,244.6 Q147.0,243.2 149.5,240.6 Q152.0,238.0 154.5,234.0 Q157.0,230.0 160.0,227.0 Q163.0,224.0 166.0,222.9 Q169.0,221.8 172.0,222.4 Q175.0,223.0 178.5,225.0 Q182.0,227.0 186.0,229.0 Q190.0,231.0 195.0,232.2 Q200.0,233.5 205.0,234.1 L210.0,234.6" fill="none" stroke="#6a22e6" stroke-width="3.4" opacity="0.9" stroke-linecap="round" stroke-linejoin="round"/>
<path d="M157.0,284.2 Q163.0,279.0 166.0,272.5 Q169.0,266.0 172.5,258.0 Q176.0,250.0 179.5,243.2 Q183.0,236.5 186.0,232.0 Q189.0,227.5 192.5,224.8 Q196.0,222.0 199.5,221.1 Q203.0,220.2 206.5,220.8 Q210.0,221.5 213.5,223.5 Q217.0,225.5 221.0,228.0 Q225.0,230.5 229.5,232.2 Q234.0,233.8 239.0,234.2 L244.0,234.6" fill="none" stroke="#6a22e6" stroke-width="3.4" opacity="0.9" stroke-linecap="round" stroke-linejoin="round"/>
<path d="M386.6,284.2 Q392.6,280.0 396.1,273.0 Q399.6,266.0 402.6,259.0 Q405.6,252.0 408.1,249.0 Q410.6,246.0 413.6,244.6 Q416.6,243.2 419.1,240.6 Q421.6,238.0 424.1,234.0 Q426.6,230.0 429.6,227.0 Q432.6,224.0 435.6,222.9 Q438.6,221.8 441.6,222.4 Q444.6,223.0 448.1,225.0 Q451.6,227.0 455.6,229.0 Q459.6,231.0 464.6,232.2 Q469.6,233.5 474.6,234.1 L479.6,234.6" fill="none" stroke="#6a22e6" stroke-width="3.4" opacity="0.9" stroke-linecap="round" stroke-linejoin="round"/>
<path d="M426.6,284.2 Q432.6,279.0 435.6,272.5 Q438.6,266.0 442.1,258.0 Q445.6,250.0 449.1,243.2 Q452.6,236.5 455.6,232.0 Q458.6,227.5 462.1,224.8 Q465.6,222.0 469.1,221.1 Q472.6,220.2 476.1,220.8 Q479.6,221.5 483.1,223.5 Q486.6,225.5 490.6,228.0 Q494.6,230.5 499.1,232.2 Q503.6,233.8 508.6,234.2 L513.6,234.6" fill="none" stroke="#6a22e6" stroke-width="3.4" opacity="0.9" stroke-linecap="round" stroke-linejoin="round"/>
<path d="M100.0,284.6 Q103.0,284.6 104.5,284.6 Q106.0,284.6 107.5,284.6 Q109.0,284.6 110.5,284.6 Q112.0,284.6 113.5,284.6 Q115.0,284.6 116.5,284.5 Q118.0,284.5 119.5,284.5 Q121.0,284.5 122.5,284.5 Q124.0,284.5 125.5,284.5 Q127.0,284.5 128.5,284.5 Q130.0,284.5 131.5,284.4 Q133.0,284.4 134.5,284.4 Q136.0,284.4 137.5,284.4 Q139.0,284.4 140.5,284.4 Q142.0,284.4 143.5,284.4 Q145.0,284.3 146.5,284.3 Q148.0,284.3 149.5,284.3 Q151.0,284.3 152.5,284.3 Q154.0,284.3 155.5,284.3 Q157.0,284.3 158.5,284.3 Q160.0,284.3 161.5,284.3 Q163.0,284.3 164.5,284.3 Q166.0,284.3 167.5,284.3 Q169.0,284.3 170.5,284.3 Q172.0,284.3 173.5,284.3 Q175.0,284.3 176.5,284.3 Q178.0,284.4 179.5,284.4 Q181.0,284.4 182.5,284.4 Q184.0,284.4 185.5,284.4 Q187.0,284.4 188.5,284.4 Q190.0,284.4 191.5,284.4 Q193.0,284.4 194.5,284.4 Q196.0,284.4 197.5,284.5 Q199.0,284.5 200.5,284.5 Q202.0,284.5 203.5,284.5 Q205.0,284.5 206.5,284.5 Q208.0,284.5 209.5,284.5 Q211.0,284.5 212.5,284.5 Q214.0,284.5 215.5,284.5 Q217.0,284.5 218.5,284.5 Q220.0,284.5 221.5,284.5 Q223.0,284.5 224.5,284.4 Q226.0,284.4 227.5,284.4 Q229.0,284.4 230.5,284.4 Q232.0,284.3 233.5,284.3 Q235.0,284.3 236.5,284.3 Q238.0,284.2 239.5,284.2 Q241.0,284.2 242.5,284.2 Q244.0,284.1 245.5,284.1 Q247.0,284.1 248.5,284.1 Q250.0,284.1 251.5,284.0 Q253.0,284.0 254.5,284.0 Q256.0,284.0 257.5,284.0 Q259.0,284.0 260.5,284.0 Q262.0,284.0 263.5,284.0 Q265.0,284.0 266.5,284.0 Q268.0,284.1 269.5,284.1 Q271.0,284.1 272.5,284.1 Q274.0,284.2 275.5,284.2 Q277.0,284.2 278.5,284.3 Q280.0,284.3 281.5,284.3 Q283.0,284.4 284.5,284.4 Q286.0,284.4 287.5,284.5 Q289.0,284.5 290.5,284.5 Q292.0,284.5 293.5,284.6 Q295.0,284.6 296.5,284.6 Q298.0,284.6 299.5,284.6 Q301.0,284.6 302.5,284.6 Q304.0,284.6 305.5,284.6 Q307.0,284.6 308.5,284.6 Q310.0,284.6 311.5,284.7 Q313.0,284.7 314.5,284.7 Q316.0,284.7 317.5,284.7 Q319.0,284.7 320.5,284.8 Q322.0,284.8 323.5,284.8 Q325.0,284.8 326.5,284.8 Q328.0,284.8 329.5,284.8 Q331.0,284.9 332.5,284.9 Q334.0,284.9 335.5,284.9 Q337.0,284.9 338.5,284.9 Q340.0,284.9 341.5,284.9 Q343.0,284.9 344.5,284.9 Q346.0,284.9 347.5,284.8 Q349.0,284.8 350.5,284.8 Q352.0,284.8 353.5,284.7 Q355.0,284.7 356.5,284.7 Q358.0,284.6 359.5,284.6 Q361.0,284.6 362.5,284.5 Q364.0,284.5 365.5,284.5 Q367.0,284.4 368.5,284.4 Q370.0,284.4 371.5,284.4 Q373.0,284.3 374.5,284.3 Q376.0,284.3 377.5,284.3 Q379.0,284.3 380.5,284.3 Q382.0,284.3 383.5,284.3 Q385.0,284.3 386.5,284.3 Q388.0,284.3 389.5,284.3 Q391.0,284.3 392.5,284.3 Q394.0,284.3 395.5,284.3 Q397.0,284.3 398.5,284.3 Q400.0,284.3 401.5,284.3 Q403.0,284.3 404.5,284.3 Q406.0,284.3 407.5,284.3 Q409.0,284.4 410.5,284.4 Q412.0,284.4 413.5,284.4 Q415.0,284.4 416.5,284.4 Q418.0,284.4 419.5,284.4 Q421.0,284.4 422.5,284.4 Q424.0,284.4 425.5,284.4 Q427.0,284.4 428.5,284.4 Q430.0,284.4 431.5,284.4 Q433.0,284.4 434.5,284.4 L436.0,284.4" fill="none" stroke="#2a3cff" stroke-width="7.8" opacity="1" stroke-linecap="round" stroke-linejoin="round"/>
<path d="M100.0,235.3 Q103.0,235.3 104.5,235.4 Q106.0,235.4 107.5,235.5 Q109.0,235.6 110.5,235.6 Q112.0,235.6 113.5,235.6 Q115.0,235.5 116.5,235.4 Q118.0,235.3 119.5,235.2 Q121.0,235.1 122.5,235.0 Q124.0,235.0 125.5,234.9 L127.0,234.8" fill="none" stroke="#2a3cff" stroke-width="7.0" opacity="1" stroke-linecap="round" stroke-linejoin="round"/>
<path d="M205.0,235.1 Q208.0,235.5 209.5,235.7 Q211.0,235.9 212.5,236.0 Q214.0,236.1 215.5,236.2 Q217.0,236.2 218.5,236.2 Q220.0,236.1 221.5,236.1 Q223.0,236.0 224.5,236.0 Q226.0,235.9 227.5,235.8 Q229.0,235.8 230.5,235.7 Q232.0,235.7 233.5,235.6 Q235.0,235.6 236.5,235.6 Q238.0,235.5 239.5,235.4 Q241.0,235.3 242.5,235.2 Q244.0,235.0 245.5,234.8 Q247.0,234.7 248.5,234.6 Q250.0,234.5 251.5,234.4 Q253.0,234.4 254.5,234.4 Q256.0,234.4 257.5,234.4 Q259.0,234.4 260.5,234.3 Q262.0,234.3 263.5,234.3 Q265.0,234.3 266.5,234.3 Q268.0,234.2 269.5,234.2 Q271.0,234.2 272.5,234.2 Q274.0,234.2 275.5,234.2 Q277.0,234.2 278.5,234.3 Q280.0,234.3 281.5,234.4 Q283.0,234.4 284.5,234.4 Q286.0,234.5 287.5,234.5 Q289.0,234.6 290.5,234.6 Q292.0,234.6 293.5,234.6 Q295.0,234.6 296.5,234.7 Q298.0,234.7 299.5,234.8 Q301.0,234.8 302.5,234.9 Q304.0,234.9 305.5,235.0 Q307.0,235.1 308.5,235.1 Q310.0,235.1 311.5,235.2 Q313.0,235.2 314.5,235.2 Q316.0,235.2 317.5,235.2 Q319.0,235.1 320.5,235.1 Q322.0,235.0 323.5,235.0 Q325.0,234.9 326.5,234.8 Q328.0,234.8 329.5,234.7 Q331.0,234.7 332.5,234.6 Q334.0,234.6 335.5,234.6 Q337.0,234.6 338.5,234.6 Q340.0,234.5 341.5,234.4 Q343.0,234.4 344.5,234.3 Q346.0,234.1 347.5,234.0 Q349.0,233.9 350.5,233.8 Q352.0,233.7 353.5,233.6 Q355.0,233.5 356.5,233.5 Q358.0,233.4 359.5,233.4 Q361.0,233.4 362.5,233.4 Q364.0,233.4 365.5,233.4 Q367.0,233.4 368.5,233.4 Q370.0,233.3 371.5,233.3 Q373.0,233.3 374.5,233.3 Q376.0,233.3 377.5,233.3 Q379.0,233.2 380.5,233.2 Q382.0,233.2 383.5,233.2 Q385.0,233.2 386.5,233.2 Q388.0,233.2 389.5,233.4 Q391.0,233.6 392.5,233.9 Q394.0,234.3 395.5,234.6 L397.0,234.9" fill="none" stroke="#2a3cff" stroke-width="7.0" opacity="1" stroke-linecap="round" stroke-linejoin="round"/>
<path d="M127.0,234.8 Q130.0,234.8 131.5,234.8 Q133.0,234.8 134.5,234.8 Q136.0,234.8 137.5,234.8 Q139.0,234.8 140.5,234.8 Q142.0,234.8 143.5,234.8 Q145.0,234.8 146.5,234.8 Q148.0,234.8 149.5,234.8 Q151.0,234.8 152.5,234.8 Q154.0,234.8 155.5,234.8 Q157.0,234.8 158.5,234.8 Q160.0,234.8 161.5,234.8 Q163.0,234.8 164.5,234.8 Q166.0,234.8 167.5,234.8 Q169.0,234.8 170.5,234.8 Q172.0,234.8 173.5,234.8 Q175.0,234.8 176.5,234.8 Q178.0,234.8 179.5,234.8 Q181.0,234.8 182.5,234.8 Q184.0,234.8 185.5,234.8 Q187.0,234.8 188.5,234.8 Q190.0,234.8 191.5,234.8 Q193.0,234.8 194.5,234.8 Q196.0,234.8 197.5,234.8 Q199.0,234.8 200.5,234.8 Q202.0,234.9 203.5,235.0 L205.0,235.1" fill="none" stroke="#2a3cff" stroke-width="4.8" opacity="1" stroke-linecap="round" stroke-linejoin="round"/>
<path d="M397.0,234.9 Q400.0,234.9 401.5,234.9 Q403.0,234.9 404.5,234.9 Q406.0,234.9 407.5,234.9 Q409.0,234.9 410.5,234.9 Q412.0,234.9 413.5,234.9 Q415.0,234.9 416.5,234.9 Q418.0,234.9 419.5,234.9 Q421.0,234.9 422.5,234.9 Q424.0,234.9 425.5,234.9 Q427.0,234.9 428.5,234.9 Q430.0,234.9 431.5,234.9 Q433.0,234.9 434.5,234.9 L436.0,234.9" fill="none" stroke="#2a3cff" stroke-width="4.8" opacity="1" stroke-linecap="round" stroke-linejoin="round"/>
<path d="M125.0,234.6 Q129.0,238.0 131.0,242.0 Q133.0,246.0 135.0,250.0 Q137.0,254.0 139.5,259.0 Q142.0,264.0 145.0,269.0 Q148.0,274.0 151.0,278.2 Q154.0,282.5 157.0,286.5 Q160.0,290.5 163.5,294.2 Q167.0,298.0 170.5,299.8 Q174.0,301.6 177.5,300.8 Q181.0,300.0 185.0,297.2 Q189.0,294.5 193.0,292.0 Q197.0,289.5 201.5,287.6 Q206.0,285.8 210.5,285.0 L215.0,284.2" fill="none" stroke="#2a3cff" stroke-width="3.2" opacity="1" stroke-linecap="round" stroke-linejoin="round"/>
<path d="M394.6,234.6 Q398.6,238.0 400.6,242.0 Q402.6,246.0 404.6,250.0 Q406.6,254.0 409.1,259.0 Q411.6,264.0 414.6,269.0 Q417.6,274.0 420.6,278.2 Q423.6,282.5 426.6,286.5 Q429.6,290.5 433.1,294.2 Q436.6,298.0 440.1,299.8 Q443.6,301.6 447.1,300.8 Q450.6,300.0 454.6,297.2 Q458.6,294.5 462.6,292.0 Q466.6,289.5 471.1,287.6 Q475.6,285.8 480.1,285.0 L484.6,284.2" fill="none" stroke="#2a3cff" stroke-width="3.2" opacity="1" stroke-linecap="round" stroke-linejoin="round"/>
<path d="M198.0,234.6 Q206.0,237.6 210.5,238.2 Q215.0,238.8 220.0,238.6 Q225.0,238.4 230.5,237.5 Q236.0,236.6 242.0,235.9 L248.0,235.2" fill="none" stroke="#2a3cff" stroke-width="3.0" opacity="1" stroke-linecap="round" stroke-linejoin="round"/>
<path d="M200.0,284.2 Q208.0,281.0 211.0,279.9 Q214.0,278.8 217.5,278.6 Q221.0,278.3 224.5,279.1 Q228.0,280.0 232.0,281.5 Q236.0,283.0 240.0,283.6 L244.0,284.2" fill="none" stroke="#2a3cff" stroke-width="3.0" opacity="1" stroke-linecap="round" stroke-linejoin="round"/>
<path d="M288.0,284.2 Q295.0,281.6 298.5,280.9 Q302.0,280.2 306.0,281.0 Q310.0,281.8 314.0,283.0 L318.0,284.2" fill="none" stroke="#2a3cff" stroke-width="3.0" opacity="1" stroke-linecap="round" stroke-linejoin="round"/>
<path d="M274.0,234.6 Q282.0,231.2 287.0,230.5 Q292.0,229.8 297.0,230.7 Q302.0,231.6 307.0,233.1 L312.0,234.6" fill="none" stroke="#2a3cff" stroke-width="3.0" opacity="1" stroke-linecap="round" stroke-linejoin="round"/>
<path d="M318.0,234.6 Q327.0,237.2 331.5,237.7 Q336.0,238.2 341.0,237.5 Q346.0,236.8 351.0,235.4 L356.0,234.0" fill="none" stroke="#2a3cff" stroke-width="3.0" opacity="1" stroke-linecap="round" stroke-linejoin="round"/>
<path d="M163.0,229.6 Q172.0,228.2 177.5,228.0 Q183.0,227.8 188.5,228.2 Q194.0,228.6 198.5,230.2 Q203.0,231.8 207.0,233.2 L211.0,234.6" fill="none" stroke="#2a3cff" stroke-width="3.0" opacity="1" stroke-linecap="round" stroke-linejoin="round"/>
<path d="M246.0,284.2 Q254.0,287.6 258.0,288.3 Q262.0,289.0 266.0,288.4 Q270.0,287.8 274.5,286.0 L279.0,284.2" fill="none" stroke="#2a3cff" stroke-width="3.0" opacity="1" stroke-linecap="round" stroke-linejoin="round"/>
<path d="M100.0,284.6 Q103.0,284.6 104.5,284.6 Q106.0,284.6 107.5,284.6 Q109.0,284.6 110.5,284.6 Q112.0,284.6 113.5,284.6 Q115.0,284.6 116.5,284.5 Q118.0,284.5 119.5,284.5 Q121.0,284.5 122.5,284.5 Q124.0,284.5 125.5,284.5 Q127.0,284.5 128.5,284.5 Q130.0,284.5 131.5,284.4 Q133.0,284.4 134.5,284.4 Q136.0,284.4 137.5,284.4 Q139.0,284.4 140.5,284.4 Q142.0,284.4 143.5,284.4 Q145.0,284.3 146.5,284.3 Q148.0,284.3 149.5,284.3 Q151.0,284.3 152.5,284.3 Q154.0,284.3 155.5,284.3 Q157.0,284.3 158.5,284.3 Q160.0,284.3 161.5,284.3 Q163.0,284.3 164.5,284.3 Q166.0,284.3 167.5,284.3 Q169.0,284.3 170.5,284.3 Q172.0,284.3 173.5,284.3 Q175.0,284.3 176.5,284.3 Q178.0,284.4 179.5,284.4 Q181.0,284.4 182.5,284.4 Q184.0,284.4 185.5,284.4 Q187.0,284.4 188.5,284.4 Q190.0,284.4 191.5,284.4 Q193.0,284.4 194.5,284.4 Q196.0,284.4 197.5,284.5 Q199.0,284.5 200.5,284.5 Q202.0,284.5 203.5,284.5 Q205.0,284.5 206.5,284.5 Q208.0,284.5 209.5,284.5 Q211.0,284.5 212.5,284.5 Q214.0,284.5 215.5,284.5 Q217.0,284.5 218.5,284.5 Q220.0,284.5 221.5,284.5 Q223.0,284.5 224.5,284.4 Q226.0,284.4 227.5,284.4 Q229.0,284.4 230.5,284.4 Q232.0,284.3 233.5,284.3 Q235.0,284.3 236.5,284.3 Q238.0,284.2 239.5,284.2 Q241.0,284.2 242.5,284.2 Q244.0,284.1 245.5,284.1 Q247.0,284.1 248.5,284.1 Q250.0,284.1 251.5,284.0 Q253.0,284.0 254.5,284.0 Q256.0,284.0 257.5,284.0 Q259.0,284.0 260.5,284.0 Q262.0,284.0 263.5,284.0 Q265.0,284.0 266.5,284.0 Q268.0,284.1 269.5,284.1 Q271.0,284.1 272.5,284.1 Q274.0,284.2 275.5,284.2 Q277.0,284.2 278.5,284.3 Q280.0,284.3 281.5,284.3 Q283.0,284.4 284.5,284.4 Q286.0,284.4 287.5,284.5 Q289.0,284.5 290.5,284.5 Q292.0,284.5 293.5,284.6 Q295.0,284.6 296.5,284.6 Q298.0,284.6 299.5,284.6 Q301.0,284.6 302.5,284.6 Q304.0,284.6 305.5,284.6 Q307.0,284.6 308.5,284.6 Q310.0,284.6 311.5,284.7 Q313.0,284.7 314.5,284.7 Q316.0,284.7 317.5,284.7 Q319.0,284.7 320.5,284.8 Q322.0,284.8 323.5,284.8 Q325.0,284.8 326.5,284.8 Q328.0,284.8 329.5,284.8 Q331.0,284.9 332.5,284.9 Q334.0,284.9 335.5,284.9 Q337.0,284.9 338.5,284.9 Q340.0,284.9 341.5,284.9 Q343.0,284.9 344.5,284.9 Q346.0,284.9 347.5,284.8 Q349.0,284.8 350.5,284.8 Q352.0,284.8 353.5,284.7 Q355.0,284.7 356.5,284.7 Q358.0,284.6 359.5,284.6 Q361.0,284.6 362.5,284.5 Q364.0,284.5 365.5,284.5 Q367.0,284.4 368.5,284.4 Q370.0,284.4 371.5,284.4 Q373.0,284.3 374.5,284.3 Q376.0,284.3 377.5,284.3 Q379.0,284.3 380.5,284.3 Q382.0,284.3 383.5,284.3 Q385.0,284.3 386.5,284.3 Q388.0,284.3 389.5,284.3 Q391.0,284.3 392.5,284.3 Q394.0,284.3 395.5,284.3 Q397.0,284.3 398.5,284.3 Q400.0,284.3 401.5,284.3 Q403.0,284.3 404.5,284.3 Q406.0,284.3 407.5,284.3 Q409.0,284.4 410.5,284.4 Q412.0,284.4 413.5,284.4 Q415.0,284.4 416.5,284.4 Q418.0,284.4 419.5,284.4 Q421.0,284.4 422.5,284.4 Q424.0,284.4 425.5,284.4 Q427.0,284.4 428.5,284.4 Q430.0,284.4 431.5,284.4 Q433.0,284.4 434.5,284.4 L436.0,284.4" fill="none" stroke="#18d8ff" stroke-width="5.3" opacity="1" stroke-linecap="round" stroke-linejoin="round"/>
<path d="M100.0,235.3 Q103.0,235.3 104.5,235.4 Q106.0,235.4 107.5,235.5 Q109.0,235.6 110.5,235.6 Q112.0,235.6 113.5,235.6 Q115.0,235.5 116.5,235.4 Q118.0,235.3 119.5,235.2 Q121.0,235.1 122.5,235.0 Q124.0,235.0 125.5,234.9 L127.0,234.8" fill="none" stroke="#18d8ff" stroke-width="4.2" opacity="1" stroke-linecap="round" stroke-linejoin="round"/>
<path d="M205.0,235.1 Q208.0,235.5 209.5,235.7 Q211.0,235.9 212.5,236.0 Q214.0,236.1 215.5,236.2 Q217.0,236.2 218.5,236.2 Q220.0,236.1 221.5,236.1 Q223.0,236.0 224.5,236.0 Q226.0,235.9 227.5,235.8 Q229.0,235.8 230.5,235.7 Q232.0,235.7 233.5,235.6 Q235.0,235.6 236.5,235.6 Q238.0,235.5 239.5,235.4 Q241.0,235.3 242.5,235.2 Q244.0,235.0 245.5,234.8 Q247.0,234.7 248.5,234.6 Q250.0,234.5 251.5,234.4 Q253.0,234.4 254.5,234.4 Q256.0,234.4 257.5,234.4 Q259.0,234.4 260.5,234.3 Q262.0,234.3 263.5,234.3 Q265.0,234.3 266.5,234.3 Q268.0,234.2 269.5,234.2 Q271.0,234.2 272.5,234.2 Q274.0,234.2 275.5,234.2 Q277.0,234.2 278.5,234.3 Q280.0,234.3 281.5,234.4 Q283.0,234.4 284.5,234.4 Q286.0,234.5 287.5,234.5 Q289.0,234.6 290.5,234.6 Q292.0,234.6 293.5,234.6 Q295.0,234.6 296.5,234.7 Q298.0,234.7 299.5,234.8 Q301.0,234.8 302.5,234.9 Q304.0,234.9 305.5,235.0 Q307.0,235.1 308.5,235.1 Q310.0,235.1 311.5,235.2 Q313.0,235.2 314.5,235.2 Q316.0,235.2 317.5,235.2 Q319.0,235.1 320.5,235.1 Q322.0,235.0 323.5,235.0 Q325.0,234.9 326.5,234.8 Q328.0,234.8 329.5,234.7 Q331.0,234.7 332.5,234.6 Q334.0,234.6 335.5,234.6 Q337.0,234.6 338.5,234.6 Q340.0,234.5 341.5,234.4 Q343.0,234.4 344.5,234.3 Q346.0,234.1 347.5,234.0 Q349.0,233.9 350.5,233.8 Q352.0,233.7 353.5,233.6 Q355.0,233.5 356.5,233.5 Q358.0,233.4 359.5,233.4 Q361.0,233.4 362.5,233.4 Q364.0,233.4 365.5,233.4 Q367.0,233.4 368.5,233.4 Q370.0,233.3 371.5,233.3 Q373.0,233.3 374.5,233.3 Q376.0,233.3 377.5,233.3 Q379.0,233.2 380.5,233.2 Q382.0,233.2 383.5,233.2 Q385.0,233.2 386.5,233.2 Q388.0,233.2 389.5,233.4 Q391.0,233.6 392.5,233.9 Q394.0,234.3 395.5,234.6 L397.0,234.9" fill="none" stroke="#18d8ff" stroke-width="4.2" opacity="1" stroke-linecap="round" stroke-linejoin="round"/>
<path d="M127.0,234.8 Q130.0,234.8 131.5,234.8 Q133.0,234.8 134.5,234.8 Q136.0,234.8 137.5,234.8 Q139.0,234.8 140.5,234.8 Q142.0,234.8 143.5,234.8 Q145.0,234.8 146.5,234.8 Q148.0,234.8 149.5,234.8 Q151.0,234.8 152.5,234.8 Q154.0,234.8 155.5,234.8 Q157.0,234.8 158.5,234.8 Q160.0,234.8 161.5,234.8 Q163.0,234.8 164.5,234.8 Q166.0,234.8 167.5,234.8 Q169.0,234.8 170.5,234.8 Q172.0,234.8 173.5,234.8 Q175.0,234.8 176.5,234.8 Q178.0,234.8 179.5,234.8 Q181.0,234.8 182.5,234.8 Q184.0,234.8 185.5,234.8 Q187.0,234.8 188.5,234.8 Q190.0,234.8 191.5,234.8 Q193.0,234.8 194.5,234.8 Q196.0,234.8 197.5,234.8 Q199.0,234.8 200.5,234.8 Q202.0,234.9 203.5,235.0 L205.0,235.1" fill="none" stroke="#18d8ff" stroke-width="2.4" opacity="1" stroke-linecap="round" stroke-linejoin="round"/>
<path d="M397.0,234.9 Q400.0,234.9 401.5,234.9 Q403.0,234.9 404.5,234.9 Q406.0,234.9 407.5,234.9 Q409.0,234.9 410.5,234.9 Q412.0,234.9 413.5,234.9 Q415.0,234.9 416.5,234.9 Q418.0,234.9 419.5,234.9 Q421.0,234.9 422.5,234.9 Q424.0,234.9 425.5,234.9 Q427.0,234.9 428.5,234.9 Q430.0,234.9 431.5,234.9 Q433.0,234.9 434.5,234.9 L436.0,234.9" fill="none" stroke="#18d8ff" stroke-width="2.4" opacity="1" stroke-linecap="round" stroke-linejoin="round"/>
<path d="M125.0,234.6 Q129.0,238.0 131.0,242.0 Q133.0,246.0 135.0,250.0 Q137.0,254.0 139.5,259.0 Q142.0,264.0 145.0,269.0 Q148.0,274.0 151.0,278.2 Q154.0,282.5 157.0,286.5 Q160.0,290.5 163.5,294.2 Q167.0,298.0 170.5,299.8 Q174.0,301.6 177.5,300.8 Q181.0,300.0 185.0,297.2 Q189.0,294.5 193.0,292.0 Q197.0,289.5 201.5,287.6 Q206.0,285.8 210.5,285.0 L215.0,284.2" fill="none" stroke="#18d8ff" stroke-width="1.5" opacity="1" stroke-linecap="round" stroke-linejoin="round"/>
<path d="M394.6,234.6 Q398.6,238.0 400.6,242.0 Q402.6,246.0 404.6,250.0 Q406.6,254.0 409.1,259.0 Q411.6,264.0 414.6,269.0 Q417.6,274.0 420.6,278.2 Q423.6,282.5 426.6,286.5 Q429.6,290.5 433.1,294.2 Q436.6,298.0 440.1,299.8 Q443.6,301.6 447.1,300.8 Q450.6,300.0 454.6,297.2 Q458.6,294.5 462.6,292.0 Q466.6,289.5 471.1,287.6 Q475.6,285.8 480.1,285.0 L484.6,284.2" fill="none" stroke="#18d8ff" stroke-width="1.5" opacity="1" stroke-linecap="round" stroke-linejoin="round"/>
<path d="M198.0,234.6 Q206.0,237.6 210.5,238.2 Q215.0,238.8 220.0,238.6 Q225.0,238.4 230.5,237.5 Q236.0,236.6 242.0,235.9 L248.0,235.2" fill="none" stroke="#18d8ff" stroke-width="1.2" opacity="1" stroke-linecap="round" stroke-linejoin="round"/>
<path d="M200.0,284.2 Q208.0,281.0 211.0,279.9 Q214.0,278.8 217.5,278.6 Q221.0,278.3 224.5,279.1 Q228.0,280.0 232.0,281.5 Q236.0,283.0 240.0,283.6 L244.0,284.2" fill="none" stroke="#18d8ff" stroke-width="1.2" opacity="1" stroke-linecap="round" stroke-linejoin="round"/>
<path d="M163.0,229.6 Q172.0,228.2 177.5,228.0 Q183.0,227.8 188.5,228.2 Q194.0,228.6 198.5,230.2 Q203.0,231.8 207.0,233.2 L211.0,234.6" fill="none" stroke="#18d8ff" stroke-width="1.2" opacity="1" stroke-linecap="round" stroke-linejoin="round"/>
<path d="M246.0,284.2 Q254.0,287.6 258.0,288.3 Q262.0,289.0 266.0,288.4 Q270.0,287.8 274.5,286.0 L279.0,284.2" fill="none" stroke="#18d8ff" stroke-width="1.2" opacity="1" stroke-linecap="round" stroke-linejoin="round"/>
<path d="M274.0,234.6 Q282.0,231.2 287.0,230.5 Q292.0,229.8 297.0,230.7 Q302.0,231.6 307.0,233.1 L312.0,234.6" fill="none" stroke="#3a8cff" stroke-width="1.2" opacity="1" stroke-linecap="round" stroke-linejoin="round"/>
<path d="M318.0,234.6 Q327.0,237.2 331.5,237.7 Q336.0,238.2 341.0,237.5 Q346.0,236.8 351.0,235.4 L356.0,234.0" fill="none" stroke="#3a8cff" stroke-width="1.2" opacity="1" stroke-linecap="round" stroke-linejoin="round"/>
<path d="M288.0,284.2 Q295.0,281.6 298.5,280.9 Q302.0,280.2 306.0,281.0 Q310.0,281.8 314.0,283.0 L318.0,284.2" fill="none" stroke="#38f060" stroke-width="1.6" opacity="1" stroke-linecap="round" stroke-linejoin="round"/>
<path d="M100.0,284.6 Q103.0,284.6 104.5,284.6 Q106.0,284.6 107.5,284.6 Q109.0,284.6 110.5,284.6 Q112.0,284.6 113.5,284.6 Q115.0,284.6 116.5,284.5 Q118.0,284.5 119.5,284.5 Q121.0,284.5 122.5,284.5 Q124.0,284.5 125.5,284.5 Q127.0,284.5 128.5,284.5 Q130.0,284.5 131.5,284.4 Q133.0,284.4 134.5,284.4 Q136.0,284.4 137.5,284.4 Q139.0,284.4 140.5,284.4 Q142.0,284.4 143.5,284.4 Q145.0,284.3 146.5,284.3 Q148.0,284.3 149.5,284.3 Q151.0,284.3 152.5,284.3 Q154.0,284.3 155.5,284.3 Q157.0,284.3 158.5,284.3 Q160.0,284.3 161.5,284.3 Q163.0,284.3 164.5,284.3 Q166.0,284.3 167.5,284.3 Q169.0,284.3 170.5,284.3 Q172.0,284.3 173.5,284.3 Q175.0,284.3 176.5,284.3 Q178.0,284.4 179.5,284.4 Q181.0,284.4 182.5,284.4 Q184.0,284.4 185.5,284.4 Q187.0,284.4 188.5,284.4 Q190.0,284.4 191.5,284.4 Q193.0,284.4 194.5,284.4 Q196.0,284.4 197.5,284.5 Q199.0,284.5 200.5,284.5 Q202.0,284.5 203.5,284.5 Q205.0,284.5 206.5,284.5 Q208.0,284.5 209.5,284.5 Q211.0,284.5 212.5,284.5 Q214.0,284.5 215.5,284.5 Q217.0,284.5 218.5,284.5 Q220.0,284.5 221.5,284.5 Q223.0,284.5 224.5,284.4 Q226.0,284.4 227.5,284.4 Q229.0,284.4 230.5,284.4 Q232.0,284.3 233.5,284.3 Q235.0,284.3 236.5,284.3 Q238.0,284.2 239.5,284.2 Q241.0,284.2 242.5,284.2 Q244.0,284.1 245.5,284.1 Q247.0,284.1 248.5,284.1 Q250.0,284.1 251.5,284.0 Q253.0,284.0 254.5,284.0 Q256.0,284.0 257.5,284.0 Q259.0,284.0 260.5,284.0 Q262.0,284.0 263.5,284.0 Q265.0,284.0 266.5,284.0 Q268.0,284.1 269.5,284.1 Q271.0,284.1 272.5,284.1 Q274.0,284.2 275.5,284.2 Q277.0,284.2 278.5,284.3 Q280.0,284.3 281.5,284.3 Q283.0,284.4 284.5,284.4 Q286.0,284.4 287.5,284.5 Q289.0,284.5 290.5,284.5 Q292.0,284.5 293.5,284.6 Q295.0,284.6 296.5,284.6 Q298.0,284.6 299.5,284.6 Q301.0,284.6 302.5,284.6 Q304.0,284.6 305.5,284.6 Q307.0,284.6 308.5,284.6 Q310.0,284.6 311.5,284.7 Q313.0,284.7 314.5,284.7 Q316.0,284.7 317.5,284.7 Q319.0,284.7 320.5,284.8 Q322.0,284.8 323.5,284.8 Q325.0,284.8 326.5,284.8 Q328.0,284.8 329.5,284.8 Q331.0,284.9 332.5,284.9 Q334.0,284.9 335.5,284.9 Q337.0,284.9 338.5,284.9 Q340.0,284.9 341.5,284.9 Q343.0,284.9 344.5,284.9 Q346.0,284.9 347.5,284.8 Q349.0,284.8 350.5,284.8 Q352.0,284.8 353.5,284.7 Q355.0,284.7 356.5,284.7 Q358.0,284.6 359.5,284.6 Q361.0,284.6 362.5,284.5 Q364.0,284.5 365.5,284.5 Q367.0,284.4 368.5,284.4 Q370.0,284.4 371.5,284.4 Q373.0,284.3 374.5,284.3 Q376.0,284.3 377.5,284.3 Q379.0,284.3 380.5,284.3 Q382.0,284.3 383.5,284.3 Q385.0,284.3 386.5,284.3 Q388.0,284.3 389.5,284.3 Q391.0,284.3 392.5,284.3 Q394.0,284.3 395.5,284.3 Q397.0,284.3 398.5,284.3 Q400.0,284.3 401.5,284.3 Q403.0,284.3 404.5,284.3 Q406.0,284.3 407.5,284.3 Q409.0,284.4 410.5,284.4 Q412.0,284.4 413.5,284.4 Q415.0,284.4 416.5,284.4 Q418.0,284.4 419.5,284.4 Q421.0,284.4 422.5,284.4 Q424.0,284.4 425.5,284.4 Q427.0,284.4 428.5,284.4 Q430.0,284.4 431.5,284.4 Q433.0,284.4 434.5,284.4 L436.0,284.4" fill="none" stroke="#38f060" stroke-width="3.8" opacity="1" stroke-linecap="round" stroke-linejoin="round"/>
<path d="M100.0,284.6 Q103.0,284.6 104.5,284.6 Q106.0,284.6 107.5,284.6 Q109.0,284.6 110.5,284.6 Q112.0,284.6 113.5,284.6 Q115.0,284.6 116.5,284.5 Q118.0,284.5 119.5,284.5 Q121.0,284.5 122.5,284.5 Q124.0,284.5 125.5,284.5 Q127.0,284.5 128.5,284.5 Q130.0,284.5 131.5,284.4 Q133.0,284.4 134.5,284.4 Q136.0,284.4 137.5,284.4 Q139.0,284.4 140.5,284.4 Q142.0,284.4 143.5,284.4 Q145.0,284.3 146.5,284.3 Q148.0,284.3 149.5,284.3 Q151.0,284.3 152.5,284.3 Q154.0,284.3 155.5,284.3 Q157.0,284.3 158.5,284.3 Q160.0,284.3 161.5,284.3 Q163.0,284.3 164.5,284.3 Q166.0,284.3 167.5,284.3 Q169.0,284.3 170.5,284.3 Q172.0,284.3 173.5,284.3 Q175.0,284.3 176.5,284.3 Q178.0,284.4 179.5,284.4 Q181.0,284.4 182.5,284.4 Q184.0,284.4 185.5,284.4 Q187.0,284.4 188.5,284.4 Q190.0,284.4 191.5,284.4 Q193.0,284.4 194.5,284.4 Q196.0,284.4 197.5,284.5 Q199.0,284.5 200.5,284.5 Q202.0,284.5 203.5,284.5 Q205.0,284.5 206.5,284.5 Q208.0,284.5 209.5,284.5 Q211.0,284.5 212.5,284.5 Q214.0,284.5 215.5,284.5 Q217.0,284.5 218.5,284.5 Q220.0,284.5 221.5,284.5 Q223.0,284.5 224.5,284.4 Q226.0,284.4 227.5,284.4 Q229.0,284.4 230.5,284.4 Q232.0,284.3 233.5,284.3 Q235.0,284.3 236.5,284.3 Q238.0,284.2 239.5,284.2 Q241.0,284.2 242.5,284.2 Q244.0,284.1 245.5,284.1 Q247.0,284.1 248.5,284.1 Q250.0,284.1 251.5,284.0 Q253.0,284.0 254.5,284.0 Q256.0,284.0 257.5,284.0 Q259.0,284.0 260.5,284.0 Q262.0,284.0 263.5,284.0 Q265.0,284.0 266.5,284.0 Q268.0,284.1 269.5,284.1 Q271.0,284.1 272.5,284.1 Q274.0,284.2 275.5,284.2 Q277.0,284.2 278.5,284.3 Q280.0,284.3 281.5,284.3 Q283.0,284.4 284.5,284.4 Q286.0,284.4 287.5,284.5 Q289.0,284.5 290.5,284.5 Q292.0,284.5 293.5,284.6 Q295.0,284.6 296.5,284.6 Q298.0,284.6 299.5,284.6 Q301.0,284.6 302.5,284.6 Q304.0,284.6 305.5,284.6 Q307.0,284.6 308.5,284.6 Q310.0,284.6 311.5,284.7 Q313.0,284.7 314.5,284.7 Q316.0,284.7 317.5,284.7 Q319.0,284.7 320.5,284.8 Q322.0,284.8 323.5,284.8 Q325.0,284.8 326.5,284.8 Q328.0,284.8 329.5,284.8 Q331.0,284.9 332.5,284.9 Q334.0,284.9 335.5,284.9 Q337.0,284.9 338.5,284.9 Q340.0,284.9 341.5,284.9 Q343.0,284.9 344.5,284.9 Q346.0,284.9 347.5,284.8 Q349.0,284.8 350.5,284.8 Q352.0,284.8 353.5,284.7 Q355.0,284.7 356.5,284.7 Q358.0,284.6 359.5,284.6 Q361.0,284.6 362.5,284.5 Q364.0,284.5 365.5,284.5 Q367.0,284.4 368.5,284.4 Q370.0,284.4 371.5,284.4 Q373.0,284.3 374.5,284.3 Q376.0,284.3 377.5,284.3 Q379.0,284.3 380.5,284.3 Q382.0,284.3 383.5,284.3 Q385.0,284.3 386.5,284.3 Q388.0,284.3 389.5,284.3 Q391.0,284.3 392.5,284.3 Q394.0,284.3 395.5,284.3 Q397.0,284.3 398.5,284.3 Q400.0,284.3 401.5,284.3 Q403.0,284.3 404.5,284.3 Q406.0,284.3 407.5,284.3 Q409.0,284.4 410.5,284.4 Q412.0,284.4 413.5,284.4 Q415.0,284.4 416.5,284.4 Q418.0,284.4 419.5,284.4 Q421.0,284.4 422.5,284.4 Q424.0,284.4 425.5,284.4 Q427.0,284.4 428.5,284.4 Q430.0,284.4 431.5,284.4 Q433.0,284.4 434.5,284.4 L436.0,284.4" fill="none" stroke="#f4f020" stroke-width="2.6" opacity="1" stroke-linecap="round" stroke-linejoin="round"/>
<path d="M100.0,284.6 Q103.0,284.6 104.5,284.6 Q106.0,284.6 107.5,284.6 Q109.0,284.6 110.5,284.6 Q112.0,284.6 113.5,284.6 Q115.0,284.6 116.5,284.5 Q118.0,284.5 119.5,284.5 Q121.0,284.5 122.5,284.5 Q124.0,284.5 125.5,284.5 Q127.0,284.5 128.5,284.5 Q130.0,284.5 131.5,284.4 Q133.0,284.4 134.5,284.4 Q136.0,284.4 137.5,284.4 Q139.0,284.4 140.5,284.4 Q142.0,284.4 143.5,284.4 Q145.0,284.3 146.5,284.3 Q148.0,284.3 149.5,284.3 Q151.0,284.3 152.5,284.3 Q154.0,284.3 155.5,284.3 Q157.0,284.3 158.5,284.3 Q160.0,284.3 161.5,284.3 Q163.0,284.3 164.5,284.3 Q166.0,284.3 167.5,284.3 Q169.0,284.3 170.5,284.3 Q172.0,284.3 173.5,284.3 Q175.0,284.3 176.5,284.3 Q178.0,284.4 179.5,284.4 Q181.0,284.4 182.5,284.4 Q184.0,284.4 185.5,284.4 Q187.0,284.4 188.5,284.4 Q190.0,284.4 191.5,284.4 Q193.0,284.4 194.5,284.4 Q196.0,284.4 197.5,284.5 Q199.0,284.5 200.5,284.5 Q202.0,284.5 203.5,284.5 Q205.0,284.5 206.5,284.5 Q208.0,284.5 209.5,284.5 Q211.0,284.5 212.5,284.5 Q214.0,284.5 215.5,284.5 Q217.0,284.5 218.5,284.5 Q220.0,284.5 221.5,284.5 Q223.0,284.5 224.5,284.4 Q226.0,284.4 227.5,284.4 Q229.0,284.4 230.5,284.4 Q232.0,284.3 233.5,284.3 Q235.0,284.3 236.5,284.3 Q238.0,284.2 239.5,284.2 Q241.0,284.2 242.5,284.2 Q244.0,284.1 245.5,284.1 Q247.0,284.1 248.5,284.1 Q250.0,284.1 251.5,284.0 Q253.0,284.0 254.5,284.0 Q256.0,284.0 257.5,284.0 Q259.0,284.0 260.5,284.0 Q262.0,284.0 263.5,284.0 Q265.0,284.0 266.5,284.0 Q268.0,284.1 269.5,284.1 Q271.0,284.1 272.5,284.1 Q274.0,284.2 275.5,284.2 Q277.0,284.2 278.5,284.3 Q280.0,284.3 281.5,284.3 Q283.0,284.4 284.5,284.4 Q286.0,284.4 287.5,284.5 Q289.0,284.5 290.5,284.5 Q292.0,284.5 293.5,284.6 Q295.0,284.6 296.5,284.6 Q298.0,284.6 299.5,284.6 Q301.0,284.6 302.5,284.6 Q304.0,284.6 305.5,284.6 Q307.0,284.6 308.5,284.6 Q310.0,284.6 311.5,284.7 Q313.0,284.7 314.5,284.7 Q316.0,284.7 317.5,284.7 Q319.0,284.7 320.5,284.8 Q322.0,284.8 323.5,284.8 Q325.0,284.8 326.5,284.8 Q328.0,284.8 329.5,284.8 Q331.0,284.9 332.5,284.9 Q334.0,284.9 335.5,284.9 Q337.0,284.9 338.5,284.9 Q340.0,284.9 341.5,284.9 Q343.0,284.9 344.5,284.9 Q346.0,284.9 347.5,284.8 Q349.0,284.8 350.5,284.8 Q352.0,284.8 353.5,284.7 Q355.0,284.7 356.5,284.7 Q358.0,284.6 359.5,284.6 Q361.0,284.6 362.5,284.5 Q364.0,284.5 365.5,284.5 Q367.0,284.4 368.5,284.4 Q370.0,284.4 371.5,284.4 Q373.0,284.3 374.5,284.3 Q376.0,284.3 377.5,284.3 Q379.0,284.3 380.5,284.3 Q382.0,284.3 383.5,284.3 Q385.0,284.3 386.5,284.3 Q388.0,284.3 389.5,284.3 Q391.0,284.3 392.5,284.3 Q394.0,284.3 395.5,284.3 Q397.0,284.3 398.5,284.3 Q400.0,284.3 401.5,284.3 Q403.0,284.3 404.5,284.3 Q406.0,284.3 407.5,284.3 Q409.0,284.4 410.5,284.4 Q412.0,284.4 413.5,284.4 Q415.0,284.4 416.5,284.4 Q418.0,284.4 419.5,284.4 Q421.0,284.4 422.5,284.4 Q424.0,284.4 425.5,284.4 Q427.0,284.4 428.5,284.4 Q430.0,284.4 431.5,284.4 Q433.0,284.4 434.5,284.4 L436.0,284.4" fill="none" stroke="#ff7a10" stroke-width="1.8" opacity="1" stroke-linecap="round" stroke-linejoin="round"/>
<path d="M100.0,284.6 Q103.0,284.6 104.5,284.6 Q106.0,284.6 107.5,284.6 Q109.0,284.6 110.5,284.6 Q112.0,284.6 113.5,284.6 Q115.0,284.6 116.5,284.5 Q118.0,284.5 119.5,284.5 Q121.0,284.5 122.5,284.5 Q124.0,284.5 125.5,284.5 Q127.0,284.5 128.5,284.5 Q130.0,284.5 131.5,284.4 Q133.0,284.4 134.5,284.4 Q136.0,284.4 137.5,284.4 Q139.0,284.4 140.5,284.4 Q142.0,284.4 143.5,284.4 Q145.0,284.3 146.5,284.3 Q148.0,284.3 149.5,284.3 Q151.0,284.3 152.5,284.3 Q154.0,284.3 155.5,284.3 Q157.0,284.3 158.5,284.3 Q160.0,284.3 161.5,284.3 Q163.0,284.3 164.5,284.3 Q166.0,284.3 167.5,284.3 Q169.0,284.3 170.5,284.3 Q172.0,284.3 173.5,284.3 Q175.0,284.3 176.5,284.3 Q178.0,284.4 179.5,284.4 Q181.0,284.4 182.5,284.4 Q184.0,284.4 185.5,284.4 Q187.0,284.4 188.5,284.4 Q190.0,284.4 191.5,284.4 Q193.0,284.4 194.5,284.4 Q196.0,284.4 197.5,284.5 Q199.0,284.5 200.5,284.5 Q202.0,284.5 203.5,284.5 Q205.0,284.5 206.5,284.5 Q208.0,284.5 209.5,284.5 Q211.0,284.5 212.5,284.5 Q214.0,284.5 215.5,284.5 Q217.0,284.5 218.5,284.5 Q220.0,284.5 221.5,284.5 Q223.0,284.5 224.5,284.4 Q226.0,284.4 227.5,284.4 Q229.0,284.4 230.5,284.4 Q232.0,284.3 233.5,284.3 Q235.0,284.3 236.5,284.3 Q238.0,284.2 239.5,284.2 Q241.0,284.2 242.5,284.2 Q244.0,284.1 245.5,284.1 Q247.0,284.1 248.5,284.1 Q250.0,284.1 251.5,284.0 Q253.0,284.0 254.5,284.0 Q256.0,284.0 257.5,284.0 Q259.0,284.0 260.5,284.0 Q262.0,284.0 263.5,284.0 Q265.0,284.0 266.5,284.0 Q268.0,284.1 269.5,284.1 Q271.0,284.1 272.5,284.1 Q274.0,284.2 275.5,284.2 Q277.0,284.2 278.5,284.3 Q280.0,284.3 281.5,284.3 Q283.0,284.4 284.5,284.4 Q286.0,284.4 287.5,284.5 Q289.0,284.5 290.5,284.5 Q292.0,284.5 293.5,284.6 Q295.0,284.6 296.5,284.6 Q298.0,284.6 299.5,284.6 Q301.0,284.6 302.5,284.6 Q304.0,284.6 305.5,284.6 Q307.0,284.6 308.5,284.6 Q310.0,284.6 311.5,284.7 Q313.0,284.7 314.5,284.7 Q316.0,284.7 317.5,284.7 Q319.0,284.7 320.5,284.8 Q322.0,284.8 323.5,284.8 Q325.0,284.8 326.5,284.8 Q328.0,284.8 329.5,284.8 Q331.0,284.9 332.5,284.9 Q334.0,284.9 335.5,284.9 Q337.0,284.9 338.5,284.9 Q340.0,284.9 341.5,284.9 Q343.0,284.9 344.5,284.9 Q346.0,284.9 347.5,284.8 Q349.0,284.8 350.5,284.8 Q352.0,284.8 353.5,284.7 Q355.0,284.7 356.5,284.7 Q358.0,284.6 359.5,284.6 Q361.0,284.6 362.5,284.5 Q364.0,284.5 365.5,284.5 Q367.0,284.4 368.5,284.4 Q370.0,284.4 371.5,284.4 Q373.0,284.3 374.5,284.3 Q376.0,284.3 377.5,284.3 Q379.0,284.3 380.5,284.3 Q382.0,284.3 383.5,284.3 Q385.0,284.3 386.5,284.3 Q388.0,284.3 389.5,284.3 Q391.0,284.3 392.5,284.3 Q394.0,284.3 395.5,284.3 Q397.0,284.3 398.5,284.3 Q400.0,284.3 401.5,284.3 Q403.0,284.3 404.5,284.3 Q406.0,284.3 407.5,284.3 Q409.0,284.4 410.5,284.4 Q412.0,284.4 413.5,284.4 Q415.0,284.4 416.5,284.4 Q418.0,284.4 419.5,284.4 Q421.0,284.4 422.5,284.4 Q424.0,284.4 425.5,284.4 Q427.0,284.4 428.5,284.4 Q430.0,284.4 431.5,284.4 Q433.0,284.4 434.5,284.4 L436.0,284.4" fill="none" stroke="#ff2010" stroke-width="1.25" opacity="1" stroke-linecap="round" stroke-linejoin="round"/>
<path d="M100.0,235.3 Q103.0,235.3 104.5,235.4 Q106.0,235.4 107.5,235.5 Q109.0,235.6 110.5,235.6 Q112.0,235.6 113.5,235.6 Q115.0,235.5 116.5,235.4 Q118.0,235.3 119.5,235.2 Q121.0,235.1 122.5,235.0 Q124.0,235.0 125.5,234.9 L127.0,234.8" fill="none" stroke="#38f060" stroke-width="2.8" opacity="1" stroke-linecap="round" stroke-linejoin="round"/>
<path d="M100.0,235.3 Q103.0,235.3 104.5,235.4 Q106.0,235.4 107.5,235.5 Q109.0,235.6 110.5,235.6 Q112.0,235.6 113.5,235.6 Q115.0,235.5 116.5,235.4 Q118.0,235.3 119.5,235.2 Q121.0,235.1 122.5,235.0 L124.0,235.0" fill="none" stroke="#f4f020" stroke-width="1.6" opacity="0.95" stroke-linecap="round" stroke-linejoin="round"/>
<path d="M130.0,234.8 Q133.0,234.8 134.5,234.8 Q136.0,234.8 137.5,234.8 Q139.0,234.8 140.5,234.8 Q142.0,234.8 143.5,234.8 Q145.0,234.8 146.5,234.8 Q148.0,234.8 149.5,234.8 Q151.0,234.8 152.5,234.8 Q154.0,234.8 155.5,234.8 Q157.0,234.8 158.5,234.8 Q160.0,234.8 161.5,234.8 Q163.0,234.8 164.5,234.8 Q166.0,234.8 167.5,234.8 Q169.0,234.8 170.5,234.8 Q172.0,234.8 173.5,234.8 Q175.0,234.8 176.5,234.8 Q178.0,234.8 179.5,234.8 Q181.0,234.8 182.5,234.8 Q184.0,234.8 185.5,234.8 Q187.0,234.8 188.5,234.8 Q190.0,234.8 191.5,234.8 Q193.0,234.8 194.5,234.8 Q196.0,234.8 197.5,234.8 Q199.0,234.8 200.5,234.8 Q202.0,234.9 203.5,235.0 L205.0,235.1" fill="none" stroke="#d8fcff" stroke-width="0.6" opacity="0.8" stroke-linecap="round" stroke-linejoin="round"/>
<path d="M205.0,235.1 Q208.0,235.5 209.5,235.7 Q211.0,235.9 212.5,236.0 Q214.0,236.1 215.5,236.2 Q217.0,236.2 218.5,236.2 Q220.0,236.1 221.5,236.1 Q223.0,236.0 224.5,236.0 Q226.0,235.9 227.5,235.8 Q229.0,235.8 230.5,235.7 Q232.0,235.7 233.5,235.6 Q235.0,235.6 236.5,235.6 Q238.0,235.5 239.5,235.4 Q241.0,235.3 242.5,235.2 Q244.0,235.0 245.5,234.8 Q247.0,234.7 248.5,234.6 Q250.0,234.5 251.5,234.4 Q253.0,234.4 254.5,234.4 Q256.0,234.4 257.5,234.4 Q259.0,234.4 260.5,234.3 Q262.0,234.3 263.5,234.3 Q265.0,234.3 266.5,234.3 Q268.0,234.2 269.5,234.2 Q271.0,234.2 272.5,234.2 Q274.0,234.2 275.5,234.2 Q277.0,234.2 278.5,234.3 Q280.0,234.3 281.5,234.4 Q283.0,234.4 284.5,234.4 Q286.0,234.5 287.5,234.5 Q289.0,234.6 290.5,234.6 Q292.0,234.6 293.5,234.6 Q295.0,234.6 296.5,234.7 Q298.0,234.7 299.5,234.8 Q301.0,234.8 302.5,234.9 Q304.0,234.9 305.5,235.0 Q307.0,235.1 308.5,235.1 Q310.0,235.1 311.5,235.2 Q313.0,235.2 314.5,235.2 Q316.0,235.2 317.5,235.2 Q319.0,235.1 320.5,235.1 Q322.0,235.0 323.5,235.0 Q325.0,234.9 326.5,234.8 Q328.0,234.8 329.5,234.7 Q331.0,234.7 332.5,234.6 Q334.0,234.6 335.5,234.6 Q337.0,234.6 338.5,234.6 Q340.0,234.5 341.5,234.4 Q343.0,234.4 344.5,234.3 Q346.0,234.1 347.5,234.0 Q349.0,233.9 350.5,233.8 Q352.0,233.7 353.5,233.6 Q355.0,233.5 356.5,233.5 Q358.0,233.4 359.5,233.4 Q361.0,233.4 362.5,233.4 Q364.0,233.4 365.5,233.4 Q367.0,233.4 368.5,233.4 Q370.0,233.3 371.5,233.3 Q373.0,233.3 374.5,233.3 Q376.0,233.3 377.5,233.3 Q379.0,233.2 380.5,233.2 Q382.0,233.2 383.5,233.2 Q385.0,233.2 386.5,233.2 Q388.0,233.2 389.5,233.4 Q391.0,233.6 392.5,233.9 Q394.0,234.3 395.5,234.6 L397.0,234.9" fill="none" stroke="#38f060" stroke-width="2.8" opacity="1" stroke-linecap="round" stroke-linejoin="round"/>
<path d="M232.0,235.7 Q235.0,235.6 236.5,235.6 Q238.0,235.5 239.5,235.4 Q241.0,235.3 242.5,235.2 Q244.0,235.0 245.5,234.8 Q247.0,234.7 248.5,234.6 Q250.0,234.5 251.5,234.4 Q253.0,234.4 254.5,234.4 Q256.0,234.4 257.5,234.4 Q259.0,234.4 260.5,234.3 Q262.0,234.3 263.5,234.3 Q265.0,234.3 266.5,234.3 L268.0,234.2" fill="none" stroke="#f4f020" stroke-width="1.1" opacity="0.7" stroke-linecap="round" stroke-linejoin="round"/>
<path d="M286.0,234.5 Q289.0,234.6 290.5,234.6 Q292.0,234.6 293.5,234.6 Q295.0,234.6 296.5,234.7 Q298.0,234.7 299.5,234.8 Q301.0,234.8 302.5,234.9 Q304.0,234.9 305.5,235.0 Q307.0,235.1 308.5,235.1 Q310.0,235.1 311.5,235.2 Q313.0,235.2 314.5,235.2 Q316.0,235.2 317.5,235.2 Q319.0,235.1 320.5,235.1 Q322.0,235.0 323.5,235.0 Q325.0,234.9 326.5,234.8 Q328.0,234.8 329.5,234.7 Q331.0,234.7 332.5,234.6 Q334.0,234.6 335.5,234.6 Q337.0,234.6 338.5,234.6 Q340.0,234.5 341.5,234.4 Q343.0,234.4 344.5,234.3 Q346.0,234.1 347.5,234.0 Q349.0,233.9 350.5,233.8 Q352.0,233.7 353.5,233.6 Q355.0,233.5 356.5,233.5 Q358.0,233.4 359.5,233.4 Q361.0,233.4 362.5,233.4 Q364.0,233.4 365.5,233.4 Q367.0,233.4 368.5,233.4 Q370.0,233.3 371.5,233.3 Q373.0,233.3 374.5,233.3 Q376.0,233.3 377.5,233.3 Q379.0,233.2 380.5,233.2 Q382.0,233.2 383.5,233.2 Q385.0,233.2 386.5,233.2 Q388.0,233.2 389.5,233.4 L391.0,233.6" fill="none" stroke="#f4f020" stroke-width="1.9" opacity="0.95" stroke-linecap="round" stroke-linejoin="round"/>
<path d="M301.0,234.8 Q304.0,234.9 305.5,235.0 Q307.0,235.1 308.5,235.1 Q310.0,235.1 311.5,235.2 Q313.0,235.2 314.5,235.2 Q316.0,235.2 317.5,235.2 Q319.0,235.1 320.5,235.1 Q322.0,235.0 323.5,235.0 Q325.0,234.9 326.5,234.8 L328.0,234.8" fill="none" stroke="#ff4a10" stroke-width="1.2" opacity="0.95" stroke-linecap="round" stroke-linejoin="round"/>
<path d="M352.0,233.7 Q355.0,233.5 356.5,233.5 Q358.0,233.4 359.5,233.4 Q361.0,233.4 362.5,233.4 Q364.0,233.4 365.5,233.4 Q367.0,233.4 368.5,233.4 Q370.0,233.3 371.5,233.3 Q373.0,233.3 374.5,233.3 L376.0,233.3" fill="none" stroke="#ff7a10" stroke-width="0.8" opacity="0.8" stroke-linecap="round" stroke-linejoin="round"/>
<path d="M397.0,234.9 Q400.0,234.9 401.5,234.9 Q403.0,234.9 404.5,234.9 Q406.0,234.9 407.5,234.9 Q409.0,234.9 410.5,234.9 Q412.0,234.9 413.5,234.9 Q415.0,234.9 416.5,234.9 Q418.0,234.9 419.5,234.9 Q421.0,234.9 422.5,234.9 Q424.0,234.9 425.5,234.9 Q427.0,234.9 428.5,234.9 Q430.0,234.9 431.5,234.9 Q433.0,234.9 434.5,234.9 L436.0,234.9" fill="none" stroke="#d8fcff" stroke-width="0.6" opacity="0.8" stroke-linecap="round" stroke-linejoin="round"/>
<circle cx="135.6" cy="252.8" r="1.0" fill="#b8fff0"/>
<circle cx="405.2" cy="252.8" r="1.0" fill="#b8fff0"/>
</g>
<path d="M205,247.8 Q268.5,236.0 332,247.8 Q268.5,259.8 205,247.8Z" fill="#0a0abc"/>
<circle cx="247.7" cy="243.8" r="5.0" fill="none" stroke="#ff1424" stroke-width="1.25"/>
</g>
<line x1="268.50" y1="202.00" x2="268.50" y2="316.00" stroke="#d8d8d8" stroke-width="0.8" stroke-dasharray="0.8 1.3" opacity="0.9"/>
<line x1="100.00" y1="259.00" x2="437.00" y2="259.00" stroke="#b0b0b0" stroke-width="0.7" stroke-dasharray="0.7 6" opacity="0.55"/>
<line x1="100.00" y1="223.35" x2="437.00" y2="223.35" stroke="#999" stroke-width="0.6" stroke-dasharray="0.7 6" opacity="0.35"/>
<line x1="100.00" y1="294.60" x2="437.00" y2="294.60" stroke="#999" stroke-width="0.6" stroke-dasharray="0.7 6" opacity="0.35"/>
<text x="97.80" y="208.10" font-size="5.9" fill="#f4f2dc" stroke="#f4f2dc" stroke-width="0.13" text-anchor="end" font-weight="normal" >3.241 V</text>
<text x="97.80" y="233.10" font-size="5.9" fill="#f4f2dc" stroke="#f4f2dc" stroke-width="0.13" text-anchor="end" font-weight="normal" >1.241 V</text>
<text x="97.80" y="261.40" font-size="5.9" fill="#f4f2dc" stroke="#f4f2dc" stroke-width="0.13" text-anchor="end" font-weight="normal" >-758 mV</text>
<text x="97.80" y="289.80" font-size="5.9" fill="#f4f2dc" stroke="#f4f2dc" stroke-width="0.13" text-anchor="end" font-weight="normal" >-2.758 V</text>
<text x="97.80" y="314.60" font-size="5.9" fill="#f4f2dc" stroke="#f4f2dc" stroke-width="0.13" text-anchor="end" font-weight="normal" >-4.758 V</text>
<text x="100.00" y="323.10" font-size="5.9" fill="#f4f4f4" stroke="#f4f4f4" stroke-width="0.13" text-anchor="start" font-weight="normal" >-12.5 ns</text>
<text x="167.40" y="323.10" font-size="5.9" fill="#f4f4f4" stroke="#f4f4f4" stroke-width="0.13" text-anchor="middle" font-weight="normal" >12.5 ns</text>
<text x="234.80" y="323.10" font-size="5.9" fill="#f4f4f4" stroke="#f4f4f4" stroke-width="0.13" text-anchor="middle" font-weight="normal" >37.5 ns</text>
<text x="302.20" y="323.10" font-size="5.9" fill="#f4f4f4" stroke="#f4f4f4" stroke-width="0.13" text-anchor="middle" font-weight="normal" >62.5 ns</text>
<text x="369.60" y="323.10" font-size="5.9" fill="#f4f4f4" stroke="#f4f4f4" stroke-width="0.13" text-anchor="middle" font-weight="normal" >87.5 ns</text>
<text x="437.00" y="323.10" font-size="5.9" fill="#f4f4f4" stroke="#f4f4f4" stroke-width="0.13" text-anchor="end" font-weight="normal" >112.5 ns</text>
<rect x="81.50" y="242.60" width="17.80" height="5.20" fill="#f6f2a6" rx="0.6"/>
<text x="90.40" y="246.70" font-size="3.5" fill="#333" stroke="#333" stroke-width="0.13" text-anchor="middle" font-weight="normal" >FLXEye</text>
<path d="M133.5,316.5 l1.6,3.2 h-3.2z" fill="#f4f0a0"/>
<g clip-path="url(#g4)">
<line x1="477.00" y1="270.70" x2="814.00" y2="270.70" stroke="#8a1c44" stroke-width="0.9" />
<line x1="477.00" y1="302.30" x2="814.00" y2="302.30" stroke="#176a94" stroke-width="1.0" />
<path d="M492.90,270.90 L493.70,270.90 L494.12,270.72 L494.54,270.25 L494.96,269.59 L495.38,268.71 L495.80,267.35 L496.22,265.93 L496.64,265.01 L497.06,262.80 L497.48,260.84 L497.90,259.75 L498.32,256.79 L498.74,254.97 L499.16,251.75 L499.58,249.28 L500.00,245.31 L500.42,243.20 L500.84,240.44 L501.26,236.16 L501.68,233.02 L502.10,229.02 L502.52,223.57 L502.94,221.02 L503.36,216.22 L503.78,221.85 L504.20,225.29 L504.62,228.60 L505.04,234.38 L505.46,237.06 L505.88,241.05 L506.30,244.65 L506.72,247.35 L507.14,250.64 L507.56,252.37 L507.98,255.61 L508.40,257.41 L508.82,260.26 L509.24,262.13 L509.66,263.16 L510.08,264.91 L510.50,266.47 L510.92,268.10 L511.34,268.93 L511.76,269.81 L512.18,270.40 L512.60,270.80 L513.70,270.90Z" fill="#ff5f8f" stroke="#ff5f8f" stroke-width="0.3" stroke-linejoin="round"/>
<path d="M574.30,270.90 L575.10,270.90 L575.52,270.08 L575.94,269.36 L576.36,268.83 L576.78,267.72 L577.20,267.36 L577.62,264.11 L578.04,264.41 L578.46,265.14 L578.88,263.24 L579.30,263.36 L579.72,259.16 L580.14,259.72 L580.56,257.72 L580.98,258.14 L581.40,257.32 L581.82,253.52 L582.24,253.52 L582.66,252.83 L583.08,255.10 L583.50,253.30 L583.92,249.13 L584.34,251.36 L584.76,246.97 L585.18,248.30 L585.60,244.85 L586.02,243.24 L586.44,246.12 L586.86,242.11 L587.28,241.08 L587.70,239.20 L588.12,244.34 L588.54,245.24 L588.96,243.91 L589.38,248.28 L589.80,247.51 L590.22,249.41 L590.64,248.21 L591.06,253.16 L591.48,253.04 L591.90,255.62 L592.32,256.36 L592.74,254.45 L593.16,255.89 L593.58,256.07 L594.00,257.13 L594.42,257.92 L594.84,260.08 L595.26,262.39 L595.68,261.21 L596.10,264.65 L596.52,264.61 L596.94,265.63 L597.36,267.78 L597.78,268.10 L598.20,268.95 L598.62,270.16 L599.70,270.90Z" fill="#ff5f8f" stroke="#ff5f8f" stroke-width="0.3" stroke-linejoin="round"/>
<path d="M692.80,302.40 L693.60,302.40 L694.02,299.65 L694.44,294.65 L694.86,294.79 L695.28,289.35 L695.70,288.11 L696.12,291.42 L696.54,283.76 L696.96,285.34 L697.38,282.04 L697.80,280.22 L698.22,278.84 L698.64,274.31 L699.06,278.51 L699.48,269.87 L699.90,269.52 L700.32,265.85 L700.74,266.46 L701.16,266.05 L701.58,268.67 L702.00,262.45 L702.42,258.64 L702.84,258.18 L703.26,261.88 L703.68,253.64 L704.10,251.75 L704.52,256.92 L704.94,257.41 L705.36,261.71 L705.78,261.29 L706.20,266.43 L706.62,266.91 L707.04,270.46 L707.46,274.97 L707.88,274.16 L708.30,272.23 L708.72,273.75 L709.14,283.92 L709.56,282.06 L709.98,281.93 L710.40,290.06 L710.82,289.61 L711.24,292.88 L711.66,295.94 L712.08,296.42 L712.50,300.66 L713.40,302.40Z" fill="#12bdf5" stroke="#12bdf5" stroke-width="0.3" stroke-linejoin="round"/>
<path d="M770.50,302.40 L771.30,302.40 L771.72,302.14 L772.14,301.59 L772.56,300.59 L772.98,299.42 L773.40,298.04 L773.82,295.96 L774.24,294.38 L774.66,292.43 L775.08,290.41 L775.50,286.38 L775.92,283.98 L776.34,280.33 L776.76,279.17 L777.18,275.44 L777.60,269.56 L778.02,269.12 L778.44,265.10 L778.86,259.66 L779.28,255.07 L779.70,248.49 L780.12,243.02 L780.54,240.18 L780.96,232.95 L781.38,228.10 L781.80,221.75 L782.22,227.05 L782.64,233.34 L783.06,242.05 L783.48,248.48 L783.90,256.34 L784.32,260.82 L784.74,266.75 L785.16,271.34 L785.58,276.62 L786.00,280.38 L786.42,283.98 L786.84,289.23 L787.26,292.31 L787.68,294.81 L788.10,297.05 L788.52,298.81 L788.94,300.47 L789.36,301.71 L789.78,302.35 L790.70,302.40Z" fill="#12bdf5" stroke="#12bdf5" stroke-width="0.3" stroke-linejoin="round"/>
<line x1="477.00" y1="270.70" x2="814.00" y2="270.70" stroke="#8a1c44" stroke-width="0.8" opacity="0.8"/>
<text x="543.20" y="243.20" font-size="5.3" fill="#f0f0f0" stroke="#f0f0f0" stroke-width="0.13" text-anchor="start" font-weight="normal" >Pos. Bitlength</text>
<line x1="542.80" y1="244.00" x2="577.60" y2="244.00" stroke="#e8e8e8" stroke-width="0.45" />
<line x1="561.00" y1="244.20" x2="582.80" y2="249.70" stroke="#e0e0e0" stroke-width="0.5" />
<text x="661.60" y="257.90" font-size="5.3" fill="#f0f0f0" stroke="#f0f0f0" stroke-width="0.13" text-anchor="start" font-weight="normal" >Neg. Bitlength</text>
<line x1="661.20" y1="258.70" x2="696.40" y2="258.70" stroke="#e8e8e8" stroke-width="0.45" />
<line x1="680.00" y1="258.90" x2="701.50" y2="265.50" stroke="#e0e0e0" stroke-width="0.5" />
</g>
<line x1="645.50" y1="202.00" x2="645.50" y2="316.00" stroke="#d8d8d8" stroke-width="0.8" stroke-dasharray="0.8 1.3" opacity="0.9"/>
<line x1="477.00" y1="259.00" x2="814.00" y2="259.00" stroke="#b0b0b0" stroke-width="0.7" stroke-dasharray="0.7 6" opacity="0.55"/>
<line x1="477.00" y1="223.35" x2="814.00" y2="223.35" stroke="#999" stroke-width="0.6" stroke-dasharray="0.7 6" opacity="0.35"/>
<line x1="477.00" y1="294.60" x2="814.00" y2="294.60" stroke="#999" stroke-width="0.6" stroke-dasharray="0.7 6" opacity="0.35"/>
<text x="474.80" y="208.10" font-size="5.9" fill="#f0648e" stroke="#f0648e" stroke-width="0.13" text-anchor="end" font-weight="normal" >482.6 #</text>
<text x="474.80" y="233.10" font-size="5.9" fill="#f0648e" stroke="#f0648e" stroke-width="0.13" text-anchor="end" font-weight="normal" >282.6 #</text>
<text x="474.80" y="261.70" font-size="5.9" fill="#f0648e" stroke="#f0648e" stroke-width="0.13" text-anchor="end" font-weight="normal" >82.6 #</text>
<text x="474.80" y="289.60" font-size="5.9" fill="#f0648e" stroke="#f0648e" stroke-width="0.13" text-anchor="end" font-weight="normal" >-117.4 #</text>
<text x="474.80" y="314.70" font-size="5.9" fill="#f0648e" stroke="#f0648e" stroke-width="0.13" text-anchor="end" font-weight="normal" >-317.4 #</text>
<text x="477.60" y="323.10" font-size="5.9" fill="#f0648e" stroke="#f0648e" stroke-width="0.13" text-anchor="start" font-weight="normal" >75 ns</text>
<text x="544.40" y="323.10" font-size="5.9" fill="#f0648e" stroke="#f0648e" stroke-width="0.13" text-anchor="middle" font-weight="normal" >85 ns</text>
<text x="611.80" y="323.10" font-size="5.9" fill="#f0648e" stroke="#f0648e" stroke-width="0.13" text-anchor="middle" font-weight="normal" >95 ns</text>
<text x="679.20" y="323.10" font-size="5.9" fill="#f0648e" stroke="#f0648e" stroke-width="0.13" text-anchor="middle" font-weight="normal" >105 ns</text>
<text x="746.60" y="323.10" font-size="5.9" fill="#f0648e" stroke="#f0648e" stroke-width="0.13" text-anchor="middle" font-weight="normal" >115 ns</text>
<text x="814.00" y="323.10" font-size="5.9" fill="#f0648e" stroke="#f0648e" stroke-width="0.13" text-anchor="end" font-weight="normal" >125 ns</text>
<rect x="454.80" y="265.00" width="21.40" height="5.40" fill="#ff6f9d" rx="0.6"/>
<text x="465.50" y="269.30" font-size="3.9" fill="#4a1a2c" stroke="#4a1a2c" stroke-width="0.13" text-anchor="middle" font-weight="normal" >PosBitLen</text>
<text x="473.20" y="299.80" font-size="3.6" fill="#18b8f0" stroke="#18b8f0" stroke-width="0.13" text-anchor="end" font-weight="normal" >Neg</text>
<path d="M473.2,302.6 l2.8,0 l-1.4,-2.4z" fill="#18b8f0"/>
<path d="M476.4,316.6 l2,0 l-1,1.9z" fill="#ff6a94"/>
<rect x="65.00" y="340.20" width="754.00" height="7.40" fill="#1b1b1b" />
<line x1="65.00" y1="340.40" x2="819.00" y2="340.40" stroke="#3a3a3a" stroke-width="0.6" />
<line x1="65.00" y1="347.50" x2="819.00" y2="347.50" stroke="#3a3a3a" stroke-width="0.6" />
<line x1="65.00" y1="379.20" x2="819.00" y2="379.20" stroke="#2c2c2c" stroke-width="0.6" />
<text x="66.30" y="338.10" font-size="6.3" fill="#fff" stroke="#fff" stroke-width="0.13" text-anchor="start" font-weight="bold" >Measure</text>
<text x="66.30" y="346.00" font-size="6.3" fill="#f0f0f0" stroke="#f0f0f0" stroke-width="0.13" text-anchor="start" font-weight="normal" >value</text>
<text x="66.30" y="353.90" font-size="6.3" fill="#e0e0e0" stroke="#e0e0e0" stroke-width="0.13" text-anchor="start" font-weight="normal" >status</text>
<text x="66.30" y="361.80" font-size="6.3" fill="#fff" stroke="#fff" stroke-width="0.13" text-anchor="start" font-weight="bold" >Pass/Fail</text>
<text x="181.00" y="338.10" font-size="6.3" fill="#e6e6e6" stroke="#e6e6e6" stroke-width="0.13" text-anchor="end" font-weight="normal" >P1:dBitShort pos</text>
<text x="181.00" y="346.00" font-size="6.3" fill="#e6e6e6" stroke="#e6e6e6" stroke-width="0.13" text-anchor="end" font-weight="normal" >77.29 ns</text>
<path d="M176.60,351.80 l1.2,1.2 l2.7,-3.1" fill="none" stroke="#20e020" stroke-width="1.3"/>
<text x="181.00" y="361.80" font-size="6.3" fill="#18d818" stroke="#18d818" stroke-width="0.13" text-anchor="end" font-weight="normal" >True</text>
<text x="165.80" y="361.80" font-size="6.3" fill="#e6e6e6" stroke="#e6e6e6" stroke-width="0.13" text-anchor="end" font-weight="normal" >Q1:</text>
<text x="181.00" y="369.70" font-size="6.3" fill="#e6e6e6" stroke="#e6e6e6" stroke-width="0.13" text-anchor="end" font-weight="normal" >P1 &gt; 71 ns</text>
<text x="238.72" y="338.10" font-size="6.3" fill="#e6e6e6" stroke="#e6e6e6" stroke-width="0.13" text-anchor="end" font-weight="normal" >P2:dBitShort neg</text>
<text x="238.72" y="346.00" font-size="6.3" fill="#e6e6e6" stroke="#e6e6e6" stroke-width="0.13" text-anchor="end" font-weight="normal" >107.03 ns</text>
<path d="M234.32,351.80 l1.2,1.2 l2.7,-3.1" fill="none" stroke="#20e020" stroke-width="1.3"/>
<text x="238.72" y="361.80" font-size="6.3" fill="#18d818" stroke="#18d818" stroke-width="0.13" text-anchor="end" font-weight="normal" >True</text>
<text x="223.52" y="361.80" font-size="6.3" fill="#e6e6e6" stroke="#e6e6e6" stroke-width="0.13" text-anchor="end" font-weight="normal" >Q2:</text>
<text x="238.72" y="369.70" font-size="6.3" fill="#e6e6e6" stroke="#e6e6e6" stroke-width="0.13" text-anchor="end" font-weight="normal" >P2 &gt; 71 ns</text>
<text x="296.44" y="338.10" font-size="6.3" fill="#e6e6e6" stroke="#e6e6e6" stroke-width="0.13" text-anchor="end" font-weight="normal" >P3:dBitLenVar pos</text>
<text x="296.44" y="346.00" font-size="6.3" fill="#e6e6e6" stroke="#e6e6e6" stroke-width="0.13" text-anchor="end" font-weight="normal" >1.51 ns</text>
<path d="M292.04,351.80 l1.2,1.2 l2.7,-3.1" fill="none" stroke="#20e020" stroke-width="1.3"/>
<text x="296.44" y="361.80" font-size="6.3" fill="#18d818" stroke="#18d818" stroke-width="0.13" text-anchor="end" font-weight="normal" >True</text>
<text x="281.24" y="361.80" font-size="6.3" fill="#e6e6e6" stroke="#e6e6e6" stroke-width="0.13" text-anchor="end" font-weight="normal" >Q3:</text>
<text x="296.44" y="369.70" font-size="6.3" fill="#e6e6e6" stroke="#e6e6e6" stroke-width="0.13" text-anchor="end" font-weight="normal" >P3 &lt; 7 ns</text>
<text x="354.16" y="338.10" font-size="6.3" fill="#e6e6e6" stroke="#e6e6e6" stroke-width="0.13" text-anchor="end" font-weight="normal" >P4:dBitLenVar neg</text>
<text x="354.16" y="346.00" font-size="6.3" fill="#e6e6e6" stroke="#e6e6e6" stroke-width="0.13" text-anchor="end" font-weight="normal" >1.53 ns</text>
<path d="M349.76,351.80 l1.2,1.2 l2.7,-3.1" fill="none" stroke="#20e020" stroke-width="1.3"/>
<text x="354.16" y="361.80" font-size="6.3" fill="#18d818" stroke="#18d818" stroke-width="0.13" text-anchor="end" font-weight="normal" >True</text>
<text x="338.96" y="361.80" font-size="6.3" fill="#e6e6e6" stroke="#e6e6e6" stroke-width="0.13" text-anchor="end" font-weight="normal" >Q4:</text>
<text x="354.16" y="369.70" font-size="6.3" fill="#e6e6e6" stroke="#e6e6e6" stroke-width="0.13" text-anchor="end" font-weight="normal" >P4 &lt; 7 ns</text>
<text x="411.88" y="338.10" font-size="6.3" fill="#e6e6e6" stroke="#e6e6e6" stroke-width="0.13" text-anchor="end" font-weight="normal" >P5:dEdge</text>
<text x="411.88" y="346.00" font-size="6.3" fill="#e6e6e6" stroke="#e6e6e6" stroke-width="0.13" text-anchor="end" font-weight="normal" >5.2686 ns</text>
<path d="M407.48,351.80 l1.2,1.2 l2.7,-3.1" fill="none" stroke="#20e020" stroke-width="1.3"/>
<text x="411.88" y="361.80" font-size="6.3" fill="#18d818" stroke="#18d818" stroke-width="0.13" text-anchor="end" font-weight="normal" >True</text>
<text x="396.68" y="361.80" font-size="6.3" fill="#e6e6e6" stroke="#e6e6e6" stroke-width="0.13" text-anchor="end" font-weight="normal" >Q5:</text>
<text x="411.88" y="369.70" font-size="6.3" fill="#e6e6e6" stroke="#e6e6e6" stroke-width="0.13" text-anchor="end" font-weight="normal" >P5 &lt; 50 ns</text>
<text x="469.60" y="338.10" font-size="6.3" fill="#e6e6e6" stroke="#e6e6e6" stroke-width="0.13" text-anchor="end" font-weight="normal" >P6:uData0Top</text>
<text x="469.60" y="346.00" font-size="6.3" fill="#e6e6e6" stroke="#e6e6e6" stroke-width="0.13" text-anchor="end" font-weight="normal" >979.7 mV</text>
<path d="M465.20,351.80 l1.2,1.2 l2.7,-3.1" fill="none" stroke="#20e020" stroke-width="1.3"/>
<text x="469.60" y="361.80" font-size="6.3" fill="#18d818" stroke="#18d818" stroke-width="0.13" text-anchor="end" font-weight="normal" >True</text>
<text x="454.40" y="361.80" font-size="6.3" fill="#e6e6e6" stroke="#e6e6e6" stroke-width="0.13" text-anchor="end" font-weight="normal" >Q6:</text>
<text x="469.60" y="369.70" font-size="6.3" fill="#e6e6e6" stroke="#e6e6e6" stroke-width="0.13" text-anchor="end" font-weight="normal" >P6 &gt; 330 mV</text>
<text x="527.32" y="338.10" font-size="6.3" fill="#e6e6e6" stroke="#e6e6e6" stroke-width="0.13" text-anchor="end" font-weight="normal" >P7:uData1Top</text>
<text x="527.32" y="346.00" font-size="6.3" fill="#e6e6e6" stroke="#e6e6e6" stroke-width="0.13" text-anchor="end" font-weight="normal" >-2.4616 V</text>
<path d="M522.92,351.80 l1.2,1.2 l2.7,-3.1" fill="none" stroke="#20e020" stroke-width="1.3"/>
<text x="527.32" y="361.80" font-size="6.3" fill="#18d818" stroke="#18d818" stroke-width="0.13" text-anchor="end" font-weight="normal" >True</text>
<text x="512.12" y="361.80" font-size="6.3" fill="#e6e6e6" stroke="#e6e6e6" stroke-width="0.13" text-anchor="end" font-weight="normal" >Q7:</text>
<text x="527.32" y="369.70" font-size="6.3" fill="#e6e6e6" stroke="#e6e6e6" stroke-width="0.13" text-anchor="end" font-weight="normal" >P7 &lt; -330 mV</text>
<text x="585.04" y="338.10" font-size="6.3" fill="#424242" stroke="#424242" stroke-width="0.13" text-anchor="end" font-weight="normal" >P8:- - -</text>
<text x="585.04" y="361.80" font-size="6.3" fill="#424242" stroke="#424242" stroke-width="0.13" text-anchor="end" font-weight="normal" >Q8:</text>
<text x="585.04" y="369.70" font-size="6.3" fill="#424242" stroke="#424242" stroke-width="0.13" text-anchor="end" font-weight="normal" >P8 &lt; 0</text>
<text x="642.76" y="338.10" font-size="6.3" fill="#424242" stroke="#424242" stroke-width="0.13" text-anchor="end" font-weight="normal" >P9:- - -</text>
<text x="642.76" y="361.80" font-size="6.3" fill="#424242" stroke="#424242" stroke-width="0.13" text-anchor="end" font-weight="normal" >Q9:</text>
<text x="642.76" y="369.70" font-size="6.3" fill="#424242" stroke="#424242" stroke-width="0.13" text-anchor="end" font-weight="normal" >P9 &lt; 0</text>
<text x="700.48" y="338.10" font-size="6.3" fill="#424242" stroke="#424242" stroke-width="0.13" text-anchor="end" font-weight="normal" >P10:- - -</text>
<text x="700.48" y="361.80" font-size="6.3" fill="#424242" stroke="#424242" stroke-width="0.13" text-anchor="end" font-weight="normal" >Q10:</text>
<text x="700.48" y="369.70" font-size="6.3" fill="#424242" stroke="#424242" stroke-width="0.13" text-anchor="end" font-weight="normal" >P10 &lt; 0</text>
<text x="758.20" y="338.10" font-size="6.3" fill="#424242" stroke="#424242" stroke-width="0.13" text-anchor="end" font-weight="normal" >P11:- - -</text>
<text x="758.20" y="361.80" font-size="6.3" fill="#424242" stroke="#424242" stroke-width="0.13" text-anchor="end" font-weight="normal" >Q11:</text>
<text x="758.20" y="369.70" font-size="6.3" fill="#424242" stroke="#424242" stroke-width="0.13" text-anchor="end" font-weight="normal" >P11 &lt; 0</text>
<text x="815.92" y="338.10" font-size="6.3" fill="#424242" stroke="#424242" stroke-width="0.13" text-anchor="end" font-weight="normal" >P12:- - -</text>
<text x="815.92" y="361.80" font-size="6.3" fill="#424242" stroke="#424242" stroke-width="0.13" text-anchor="end" font-weight="normal" >Q12:</text>
<text x="815.92" y="369.70" font-size="6.3" fill="#424242" stroke="#424242" stroke-width="0.13" text-anchor="end" font-weight="normal" >P12 &lt; 0</text>
<text x="66.30" y="377.60" font-size="6.3" fill="#fff" stroke="#fff" stroke-width="0.13" text-anchor="start" font-weight="bold" >(Q1 &amp; Q2 &amp; Q3 &amp; Q4 &amp; Q5 &amp; Q6 &amp; Q7) =</text>
<text x="191.50" y="377.60" font-size="6.3" fill="#18d818" stroke="#18d818" stroke-width="0.13" text-anchor="start" font-weight="normal" >True</text>
<text x="228.50" y="377.60" font-size="6.3" fill="#e8e8e8" stroke="#e8e8e8" stroke-width="0.13" text-anchor="start" font-weight="normal" >Passed</text>
<text x="253.80" y="377.60" font-size="6.3" fill="#e8e8e8" stroke="#e8e8e8" stroke-width="0.13" text-anchor="start" font-weight="normal" >1</text>
<text x="261.60" y="377.60" font-size="6.3" fill="#e8e8e8" stroke="#e8e8e8" stroke-width="0.13" text-anchor="start" font-weight="normal" >Of</text>
<text x="272.80" y="377.60" font-size="6.3" fill="#e8e8e8" stroke="#e8e8e8" stroke-width="0.13" text-anchor="start" font-weight="normal" >1</text>
<text x="282.00" y="377.60" font-size="6.3" fill="#e8e8e8" stroke="#e8e8e8" stroke-width="0.13" text-anchor="start" font-weight="normal" >sweeps</text>
<rect x="65.00" y="379.40" width="729.00" height="7.60" fill="#000" />
<line x1="65.00" y1="387.20" x2="794.00" y2="387.20" stroke="#2a2a2a" stroke-width="0.6" />
<line x1="65.00" y1="395.00" x2="794.00" y2="395.00" stroke="#2a2a2a" stroke-width="0.6" />
<line x1="65.00" y1="402.80" x2="794.00" y2="402.80" stroke="#2a2a2a" stroke-width="0.6" />
<line x1="65.00" y1="410.60" x2="794.00" y2="410.60" stroke="#2a2a2a" stroke-width="0.6" />
<line x1="65.00" y1="418.60" x2="794.00" y2="418.60" stroke="#2a2a2a" stroke-width="0.6" />
<rect x="65.00" y="418.70" width="729.00" height="7.40" fill="#b5ae12" />
<rect x="66.00" y="379.60" width="14.60" height="7.20" fill="#fbf7a0" />
<text x="73.30" y="385.50" font-size="6.3" fill="#000" stroke="#000" stroke-width="0.13" text-anchor="middle" font-weight="bold" >FLX</text>
<text x="82.50" y="385.50" font-size="6.3" fill="#fff" stroke="#fff" stroke-width="0.13" text-anchor="start" font-weight="bold" >Time</text>
<text x="117.60" y="385.50" font-size="6.3" fill="#fff" stroke="#fff" stroke-width="0.13" text-anchor="start" font-weight="bold" >- Bit Rate/M...›</text>
<text x="160.20" y="385.50" font-size="6.3" fill="#fff" stroke="#fff" stroke-width="0.13" text-anchor="start" font-weight="bold" >Frame ID-</text>
<text x="190.30" y="385.50" font-size="6.3" fill="#fff" stroke="#fff" stroke-width="0.13" text-anchor="start" font-weight="bold" >Payload Length</text>
<text x="239.30" y="385.50" font-size="6.3" fill="#fff" stroke="#fff" stroke-width="0.13" text-anchor="start" font-weight="bold" >Header CRC-</text>
<text x="278.60" y="385.50" font-size="6.3" fill="#fff" stroke="#fff" stroke-width="0.13" text-anchor="start" font-weight="bold" >Cycle Count-</text>
<text x="317.30" y="385.50" font-size="6.3" fill="#fff" stroke="#fff" stroke-width="0.13" text-anchor="start" font-weight="bold" >Data</text>
<text x="732.40" y="385.50" font-size="6.3" fill="#fff" stroke="#fff" stroke-width="0.13" text-anchor="start" font-weight="bold" >- Trailer C...›</text>
<text x="770.20" y="385.50" font-size="6.3" fill="#fff" stroke="#fff" stroke-width="0.13" text-anchor="start" font-weight="bold" >Symbol-</text>
<text x="66.60" y="393.20" font-size="6.3" fill="#e6e6e6" stroke="#e6e6e6" stroke-width="0.13" text-anchor="start" font-weight="normal" >31</text>
<text x="82.00" y="393.20" font-size="6.3" fill="#e6e6e6" stroke="#e6e6e6" stroke-width="0.13" text-anchor="start" font-weight="normal" >-18.4981 ms</text>
<text x="120.80" y="393.20" font-size="6.3" fill="#e6e6e6" stroke="#e6e6e6" stroke-width="0.13" text-anchor="start" font-weight="normal" >9.99203e+6</text>
<text x="160.20" y="393.20" font-size="6.3" fill="#e6e6e6" stroke="#e6e6e6" stroke-width="0.13" text-anchor="start" font-weight="normal" >0x3d</text>
<text x="190.30" y="393.20" font-size="6.3" fill="#e6e6e6" stroke="#e6e6e6" stroke-width="0.13" text-anchor="start" font-weight="normal" >6</text>
<text x="239.30" y="393.20" font-size="6.3" fill="#e6e6e6" stroke="#e6e6e6" stroke-width="0.13" text-anchor="start" font-weight="normal" >0x39c</text>
<text x="278.60" y="393.20" font-size="6.3" fill="#e6e6e6" stroke="#e6e6e6" stroke-width="0.13" text-anchor="start" font-weight="normal" >6</text>
<text x="317.30" y="393.20" font-size="6.3" fill="#e6e6e6" stroke="#e6e6e6" stroke-width="0.13" text-anchor="start" font-weight="normal" >0x696e 0x100 0x302 0x504 0x706 0x908</text>
<text x="735.30" y="393.20" font-size="6.3" fill="#e6e6e6" stroke="#e6e6e6" stroke-width="0.13" text-anchor="start" font-weight="normal" >0x7560f9</text>
<text x="66.60" y="401.00" font-size="6.3" fill="#e6e6e6" stroke="#e6e6e6" stroke-width="0.13" text-anchor="start" font-weight="normal" >32</text>
<text x="82.00" y="401.00" font-size="6.3" fill="#e6e6e6" stroke="#e6e6e6" stroke-width="0.13" text-anchor="start" font-weight="normal" >-18.4735 ms</text>
<text x="120.80" y="401.00" font-size="6.3" fill="#e6e6e6" stroke="#e6e6e6" stroke-width="0.13" text-anchor="start" font-weight="normal" >9.99895e+6</text>
<text x="160.20" y="401.00" font-size="6.3" fill="#e6e6e6" stroke="#e6e6e6" stroke-width="0.13" text-anchor="start" font-weight="normal" >0x3e</text>
<text x="190.30" y="401.00" font-size="6.3" fill="#e6e6e6" stroke="#e6e6e6" stroke-width="0.13" text-anchor="start" font-weight="normal" >6</text>
<text x="239.30" y="401.00" font-size="6.3" fill="#e6e6e6" stroke="#e6e6e6" stroke-width="0.13" text-anchor="start" font-weight="normal" >0x183</text>
<text x="278.60" y="401.00" font-size="6.3" fill="#e6e6e6" stroke="#e6e6e6" stroke-width="0.13" text-anchor="start" font-weight="normal" >6</text>
<text x="317.30" y="401.00" font-size="6.3" fill="#e6e6e6" stroke="#e6e6e6" stroke-width="0.13" text-anchor="start" font-weight="normal" >0x696e 0x100 0x302 0x504 0x706 0x908</text>
<text x="735.30" y="401.00" font-size="6.3" fill="#e6e6e6" stroke="#e6e6e6" stroke-width="0.13" text-anchor="start" font-weight="normal" >0xb9db47</text>
<text x="66.60" y="408.80" font-size="6.3" fill="#e6e6e6" stroke="#e6e6e6" stroke-width="0.13" text-anchor="start" font-weight="normal" >33</text>
<text x="82.00" y="408.80" font-size="6.3" fill="#e6e6e6" stroke="#e6e6e6" stroke-width="0.13" text-anchor="start" font-weight="normal" >-18.3981 ms</text>
<text x="120.80" y="408.80" font-size="6.3" fill="#e6e6e6" stroke="#e6e6e6" stroke-width="0.13" text-anchor="start" font-weight="normal" >9.99024e+6</text>
<text x="160.20" y="408.80" font-size="6.3" fill="#e6e6e6" stroke="#e6e6e6" stroke-width="0.13" text-anchor="start" font-weight="normal" >0x41</text>
<text x="190.30" y="408.80" font-size="6.3" fill="#e6e6e6" stroke="#e6e6e6" stroke-width="0.13" text-anchor="start" font-weight="normal" >6</text>
<text x="239.30" y="408.80" font-size="6.3" fill="#e6e6e6" stroke="#e6e6e6" stroke-width="0.13" text-anchor="start" font-weight="normal" >0xfd</text>
<text x="278.60" y="408.80" font-size="6.3" fill="#e6e6e6" stroke="#e6e6e6" stroke-width="0.13" text-anchor="start" font-weight="normal" >6</text>
<text x="317.30" y="408.80" font-size="6.3" fill="#e6e6e6" stroke="#e6e6e6" stroke-width="0.13" text-anchor="start" font-weight="normal" >0x6d6f 0x1 0x203 0x405 0x607 0x809</text>
<text x="735.30" y="408.80" font-size="6.3" fill="#e6e6e6" stroke="#e6e6e6" stroke-width="0.13" text-anchor="start" font-weight="normal" >0xe18852</text>
<text x="66.60" y="416.60" font-size="6.3" fill="#e6e6e6" stroke="#e6e6e6" stroke-width="0.13" text-anchor="start" font-weight="normal" >34</text>
<text x="82.00" y="416.60" font-size="6.3" fill="#e6e6e6" stroke="#e6e6e6" stroke-width="0.13" text-anchor="start" font-weight="normal" >-18.3725 ms</text>
<text x="120.80" y="416.60" font-size="6.3" fill="#e6e6e6" stroke="#e6e6e6" stroke-width="0.13" text-anchor="start" font-weight="normal" >9.99842e+6</text>
<text x="160.20" y="416.60" font-size="6.3" fill="#e6e6e6" stroke="#e6e6e6" stroke-width="0.13" text-anchor="start" font-weight="normal" >0x42</text>
<text x="190.30" y="416.60" font-size="6.3" fill="#e6e6e6" stroke="#e6e6e6" stroke-width="0.13" text-anchor="start" font-weight="normal" >6</text>
<text x="239.30" y="416.60" font-size="6.3" fill="#e6e6e6" stroke="#e6e6e6" stroke-width="0.13" text-anchor="start" font-weight="normal" >0x2e2</text>
<text x="278.60" y="416.60" font-size="6.3" fill="#e6e6e6" stroke="#e6e6e6" stroke-width="0.13" text-anchor="start" font-weight="normal" >6</text>
<text x="317.30" y="416.60" font-size="6.3" fill="#e6e6e6" stroke="#e6e6e6" stroke-width="0.13" text-anchor="start" font-weight="normal" >0x6d6f 0x1 0x203 0x405 0x607 0x809</text>
<text x="735.30" y="416.60" font-size="6.3" fill="#e6e6e6" stroke="#e6e6e6" stroke-width="0.13" text-anchor="start" font-weight="normal" >0x2d33ec</text>
<text x="66.60" y="424.40" font-size="6.3" fill="#f4f4c0" stroke="#f4f4c0" stroke-width="0.13" text-anchor="start" font-weight="normal" >35</text>
<text x="82.00" y="424.40" font-size="6.3" fill="#f4f4c0" stroke="#f4f4c0" stroke-width="0.13" text-anchor="start" font-weight="normal" >-18.3421 ms</text>
<text x="120.80" y="424.40" font-size="6.3" fill="#f4f4c0" stroke="#f4f4c0" stroke-width="0.13" text-anchor="start" font-weight="normal" >9.99041e+6</text>
<text x="160.20" y="424.40" font-size="6.3" fill="#f4f4c0" stroke="#f4f4c0" stroke-width="0.13" text-anchor="start" font-weight="normal" >0x45</text>
<text x="190.30" y="424.40" font-size="6.3" fill="#f4f4c0" stroke="#f4f4c0" stroke-width="0.13" text-anchor="start" font-weight="normal" >6</text>
<text x="239.30" y="424.40" font-size="6.3" fill="#f4f4c0" stroke="#f4f4c0" stroke-width="0.13" text-anchor="start" font-weight="normal" >0x729</text>
<text x="278.60" y="424.40" font-size="6.3" fill="#f4f4c0" stroke="#f4f4c0" stroke-width="0.13" text-anchor="start" font-weight="normal" >6</text>
<text x="317.30" y="424.40" font-size="6.3" fill="#f4f4c0" stroke="#f4f4c0" stroke-width="0.13" text-anchor="start" font-weight="normal" >0x6d6f 0x1 0x203 0x405 0x607 0x809</text>
<text x="735.30" y="424.40" font-size="6.3" fill="#f4f4c0" stroke="#f4f4c0" stroke-width="0.13" text-anchor="start" font-weight="normal" >0x666488</text>
<line x1="81.00" y1="387.20" x2="81.00" y2="418.60" stroke="#2a2a2a" stroke-width="0.6" />
<line x1="117.00" y1="387.20" x2="117.00" y2="418.60" stroke="#2a2a2a" stroke-width="0.6" />
<line x1="159.30" y1="387.20" x2="159.30" y2="418.60" stroke="#2a2a2a" stroke-width="0.6" />
<line x1="189.30" y1="387.20" x2="189.30" y2="418.60" stroke="#2a2a2a" stroke-width="0.6" />
<line x1="238.30" y1="387.20" x2="238.30" y2="418.60" stroke="#2a2a2a" stroke-width="0.6" />
<line x1="277.60" y1="387.20" x2="277.60" y2="418.60" stroke="#2a2a2a" stroke-width="0.6" />
<line x1="316.30" y1="387.20" x2="316.30" y2="418.60" stroke="#2a2a2a" stroke-width="0.6" />
<line x1="729.50" y1="387.20" x2="729.50" y2="418.60" stroke="#2a2a2a" stroke-width="0.6" />
<line x1="769.30" y1="387.20" x2="769.30" y2="418.60" stroke="#2a2a2a" stroke-width="0.6" />
<rect x="794.00" y="379.30" width="13.00" height="46.90" fill="#3a3a3a" />
<rect x="794.30" y="379.50" width="12.40" height="8.60" fill="#6c6c6c" />
<path d="M796.2,386.3 L800.5,381.2 L804.8,386.3Z" fill="#fff"/>
<rect x="794.30" y="417.50" width="12.40" height="8.60" fill="#6c6c6c" />
<path d="M796.2,419.3 L800.5,424.4 L804.8,419.3Z" fill="#fff"/>
<rect x="794.80" y="388.40" width="11.40" height="3.60" fill="#4a4a4a" />
<rect x="794.80" y="392.60" width="11.40" height="4.60" fill="#707070" />
<rect x="794.80" y="397.60" width="11.40" height="3.20" fill="#505050" />
<rect x="794.80" y="401.20" width="11.40" height="15.80" fill="#303030" />
<rect x="66.30" y="427.80" width="48.20" height="16.00" fill="#ff6e9e" />
<rect x="66.30" y="443.80" width="48.20" height="22.60" fill="#2b5278" />
<rect x="115.60" y="427.80" width="48.20" height="16.00" fill="#18b6f2" />
<rect x="115.60" y="443.80" width="48.20" height="22.60" fill="#4b4b4b" />
<rect x="164.90" y="427.80" width="48.20" height="16.00" fill="#fbfb18" />
<rect x="164.90" y="443.80" width="48.20" height="22.60" fill="#4b4b4b" />
<rect x="214.20" y="427.80" width="48.20" height="16.00" fill="#fdfda0" />
<rect x="214.20" y="443.80" width="48.20" height="22.60" fill="#4b4b4b" />
<rect x="263.50" y="427.80" width="48.20" height="16.00" fill="#fdfda0" />
<rect x="263.50" y="443.80" width="48.20" height="22.60" fill="#4b4b4b" />
<rect x="66.7" y="444.2" width="47.400000000000006" height="21.8" fill="none" stroke="#2d7fd6" stroke-width="0.9"/>
<text x="67.50" y="434.00" font-size="6.45" fill="#3c1c2c" stroke="#3c1c2c" stroke-width="0.13" text-anchor="start" font-weight="normal" >F2</text>
<text x="114.00" y="434.00" font-size="6.45" fill="#3c1c2c" stroke="#3c1c2c" stroke-width="0.13" text-anchor="end" font-weight="normal" >web edit</text>
<text x="67.50" y="441.60" font-size="6.45" fill="#3c1c2c" stroke="#3c1c2c" stroke-width="0.13" text-anchor="start" font-weight="normal" >PosBitLen</text>
<text x="116.80" y="434.00" font-size="6.45" fill="#0c3a7c" stroke="#0c3a7c" stroke-width="0.13" text-anchor="start" font-weight="normal" >F3</text>
<text x="163.30" y="434.00" font-size="6.45" fill="#0c3a7c" stroke="#0c3a7c" stroke-width="0.13" text-anchor="end" font-weight="normal" >web edit</text>
<text x="116.80" y="441.60" font-size="6.45" fill="#0c3a7c" stroke="#0c3a7c" stroke-width="0.13" text-anchor="start" font-weight="normal" >NegBitLen</text>
<text x="166.10" y="434.00" font-size="6.45" fill="#222" stroke="#222" stroke-width="0.13" text-anchor="start" font-weight="normal" >Z1</text>
<text x="212.70" y="434.00" font-size="6.45" fill="#222" stroke="#222" stroke-width="0.13" text-anchor="end" font-weight="normal" >zoom(M1)</text>
<text x="215.40" y="434.00" font-size="6.45" fill="#222" stroke="#222" stroke-width="0.13" text-anchor="start" font-weight="normal" >M1</text>
<text x="264.70" y="434.00" font-size="6.45" fill="#222" stroke="#222" stroke-width="0.13" text-anchor="start" font-weight="normal" >FLXEye</text>
<text x="113.80" y="449.90" font-size="6.45" fill="#e6e6e6" stroke="#e6e6e6" stroke-width="0.13" text-anchor="end" font-weight="normal" >100 #/</text>
<text x="113.80" y="457.55" font-size="6.45" fill="#e6e6e6" stroke="#e6e6e6" stroke-width="0.13" text-anchor="end" font-weight="normal" >5.00 ns/</text>
<text x="113.80" y="465.20" font-size="6.45" fill="#e6e6e6" stroke="#e6e6e6" stroke-width="0.13" text-anchor="end" font-weight="normal" >15.808 k#</text>
<text x="163.10" y="449.90" font-size="6.45" fill="#e6e6e6" stroke="#e6e6e6" stroke-width="0.13" text-anchor="end" font-weight="normal" >20.0 #/</text>
<text x="163.10" y="457.55" font-size="6.45" fill="#e6e6e6" stroke="#e6e6e6" stroke-width="0.13" text-anchor="end" font-weight="normal" >5.00 ns/</text>
<text x="163.10" y="465.20" font-size="6.45" fill="#e6e6e6" stroke="#e6e6e6" stroke-width="0.13" text-anchor="end" font-weight="normal" >4.176 k#</text>
<text x="212.40" y="449.90" font-size="6.45" fill="#e6e6e6" stroke="#e6e6e6" stroke-width="0.13" text-anchor="end" font-weight="normal" >1.00 V/</text>
<text x="212.40" y="457.55" font-size="6.45" fill="#e6e6e6" stroke="#e6e6e6" stroke-width="0.13" text-anchor="end" font-weight="normal" >2.00 µs/</text>
<text x="212.40" y="465.20" font-size="6.45" fill="#e6e6e6" stroke="#e6e6e6" stroke-width="0.13" text-anchor="end" font-weight="normal" ></text>
<text x="261.70" y="449.90" font-size="6.45" fill="#e6e6e6" stroke="#e6e6e6" stroke-width="0.13" text-anchor="end" font-weight="normal" >1.00 V/</text>
<text x="261.70" y="457.55" font-size="6.45" fill="#e6e6e6" stroke="#e6e6e6" stroke-width="0.13" text-anchor="end" font-weight="normal" >560 µs/</text>
<text x="261.70" y="465.20" font-size="6.45" fill="#e6e6e6" stroke="#e6e6e6" stroke-width="0.13" text-anchor="end" font-weight="normal" ></text>
<text x="311.00" y="449.90" font-size="6.45" fill="#e6e6e6" stroke="#e6e6e6" stroke-width="0.13" text-anchor="end" font-weight="normal" >1.00 V/</text>
<text x="311.00" y="457.55" font-size="6.45" fill="#e6e6e6" stroke="#e6e6e6" stroke-width="0.13" text-anchor="end" font-weight="normal" >12.5 ns/</text>
<text x="311.00" y="465.20" font-size="6.45" fill="#e6e6e6" stroke="#e6e6e6" stroke-width="0.13" text-anchor="end" font-weight="normal" >18.800 k#</text>
<rect x="312.9" y="428.2" width="47" height="38" fill="#000" stroke="#c0c0c0" stroke-width="0.7" stroke-dasharray="0.8 1.1"/>
<line x1="333.60" y1="446.90" x2="339.00" y2="446.90" stroke="#e8e8e8" stroke-width="0.8" />
<line x1="336.30" y1="444.20" x2="336.30" y2="449.60" stroke="#e8e8e8" stroke-width="0.8" />
<rect x="712.80" y="428.30" width="55.40" height="23.50" fill="#4b4b4b" />
<rect x="712.80" y="428.30" width="55.40" height="7.30" fill="#fafafa" />
<rect x="769.30" y="428.30" width="48.00" height="23.50" fill="#4b4b4b" />
<rect x="769.30" y="428.30" width="48.00" height="7.30" fill="#fafafa" />
<text x="714.20" y="434.20" font-size="6.3" fill="#222" stroke="#222" stroke-width="0.13" text-anchor="start" font-weight="normal" >Timebase</text>
<text x="767.30" y="434.20" font-size="6.3" fill="#222" stroke="#222" stroke-width="0.13" text-anchor="end" font-weight="normal" >0.0 ms</text>
<text x="767.30" y="442.10" font-size="6.3" fill="#f4f4f4" stroke="#f4f4f4" stroke-width="0.13" text-anchor="end" font-weight="normal" >5.00 ms/div</text>
<text x="714.20" y="449.90" font-size="6.3" fill="#f4f4f4" stroke="#f4f4f4" stroke-width="0.13" text-anchor="start" font-weight="normal" >12.5 MS</text>
<text x="767.30" y="449.90" font-size="6.3" fill="#f4f4f4" stroke="#f4f4f4" stroke-width="0.13" text-anchor="end" font-weight="normal" >250 MS/s</text>
<text x="770.50" y="434.20" font-size="6.3" fill="#222" stroke="#222" stroke-width="0.13" text-anchor="start" font-weight="normal" >Trigger</text>
<rect x="800.40" y="429.10" width="16.20" height="5.80" fill="#2c2c34" rx="0.6"/>
<text x="808.50" y="434.00" font-size="4.6" fill="#f4f4f4" stroke="#f4f4f4" stroke-width="0.13" text-anchor="middle" font-weight="normal" >C1 DC</text>
<text x="770.50" y="442.10" font-size="6.3" fill="#f4f4f4" stroke="#f4f4f4" stroke-width="0.13" text-anchor="start" font-weight="normal" >Stop</text>
<text x="816.20" y="442.10" font-size="6.3" fill="#f4f4f4" stroke="#f4f4f4" stroke-width="0.13" text-anchor="end" font-weight="normal" >0.0 mV</text>
<text x="770.50" y="449.90" font-size="6.3" fill="#f4f4f4" stroke="#f4f4f4" stroke-width="0.13" text-anchor="start" font-weight="normal" >Edge</text>
<text x="816.20" y="449.90" font-size="6.3" fill="#f4f4f4" stroke="#f4f4f4" stroke-width="0.13" text-anchor="end" font-weight="normal" >Positive</text>
<rect x="65.00" y="466.70" width="754.00" height="9.30" fill="#222222" />
<text x="68.00" y="474.50" font-size="7.3" fill="#fff" stroke="#fff" stroke-width="0.13" text-anchor="start" font-weight="bold" textLength="33.2" lengthAdjust="spacingAndGlyphs">TELEDYNE</text>
<text x="102.80" y="474.50" font-size="7.3" fill="#dcdcdc" stroke="#dcdcdc" stroke-width="0.13" text-anchor="start" font-weight="normal" textLength="23.3" lengthAdjust="spacingAndGlyphs">LECROY</text>
<line x1="128.60" y1="468.60" x2="128.60" y2="475.20" stroke="#b8b8b8" stroke-width="0.7" />
<text x="131.00" y="474.50" font-size="7.0" fill="#35d040" stroke="#35d040" stroke-width="0.13" text-anchor="start" font-weight="bold" textLength="9.6" lengthAdjust="spacingAndGlyphs">HD</text>
<text x="144.00" y="474.50" font-size="6.9" fill="#f4f4f4" stroke="#f4f4f4" stroke-width="0.13" text-anchor="start" font-weight="normal" >12 bits</text>
<rect x="402.60" y="470.85" width="78.80" height="2.10" fill="#f4f4f4" rx="1"/>
</g></g>
</svg>
<div id="pb"><div id="po"></div>
<svg width="187" height="196" viewBox="804 40 187 196" style="left:0;top:0"><path fill="#fff" fill-rule="evenodd" d="M858,88.75 H906 C926.5,88.75 938,101 938,121.6 C938,142.2 926.5,154.5 906,154.5 H883 V188.75 H858 Z M883,106.75 H900.5 C909.5,106.75 913.75,111.8 913.75,121.25 C913.75,130.7 909.5,135.75 900.5,135.75 H883 Z"/></svg>
</div>
</body></html>
